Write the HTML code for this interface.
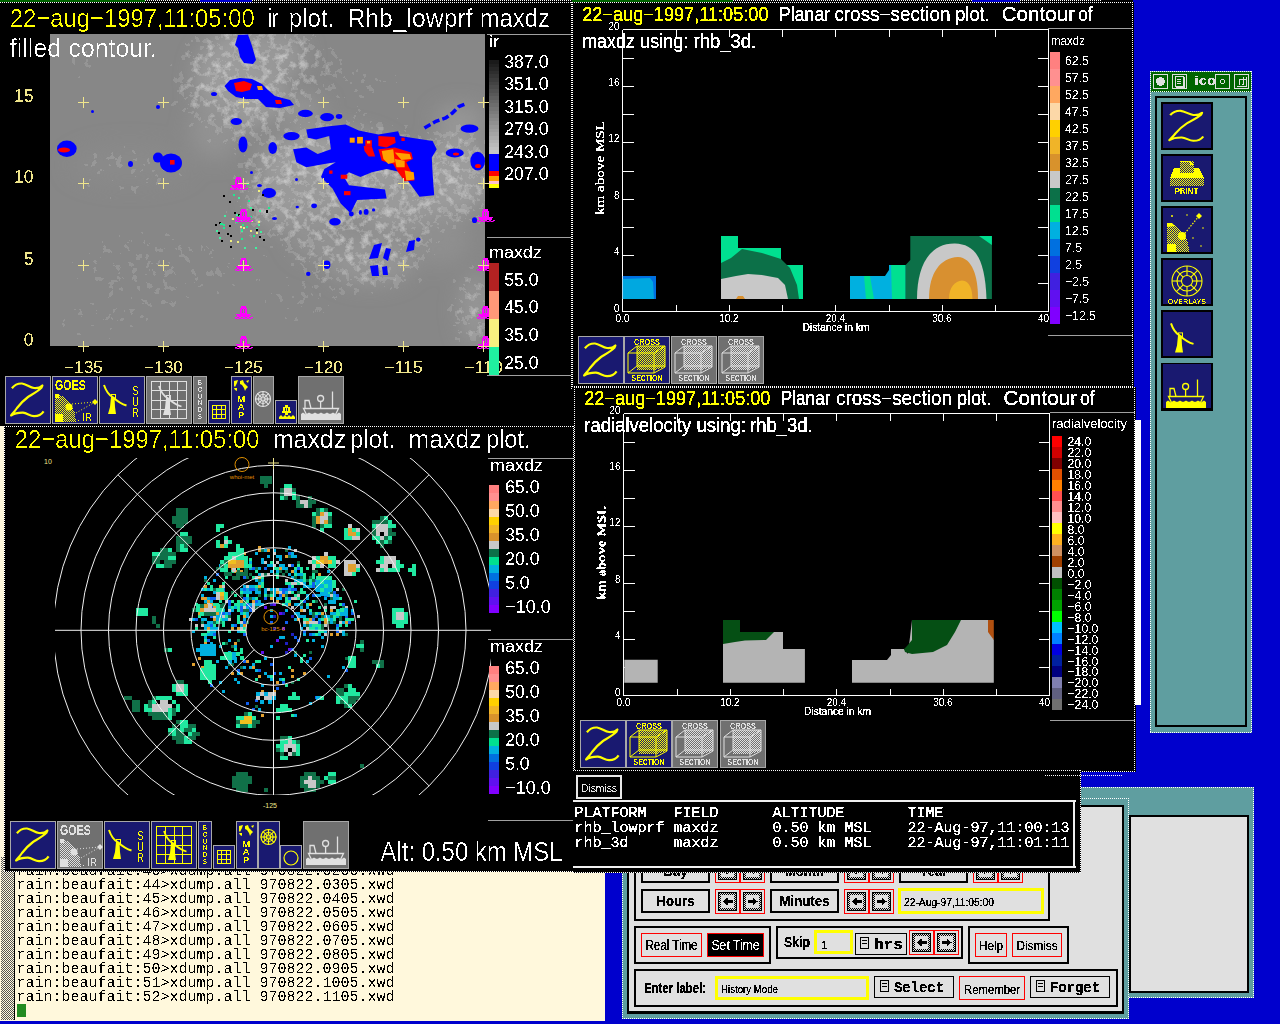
<!DOCTYPE html>
<html><head><meta charset="utf-8"><style>html,body{margin:0;padding:0;background:#0000cd;overflow:hidden}svg{display:block}</style></head>
<body><svg width="1280" height="1024" viewBox="0 0 1280 1024" shape-rendering="crispEdges">
<defs>
<pattern id="stip" width="2" height="2" patternUnits="userSpaceOnUse"><rect width="2" height="2" fill="#fff8dc"/><rect width="1" height="1" fill="#555"/><rect x="1" y="1" width="1" height="1" fill="#555"/></pattern>
<pattern id="pst_ffff00" width="2" height="2" patternUnits="userSpaceOnUse"><rect width="1" height="1" fill="#ffff00"/><rect x="1" y="1" width="1" height="1" fill="#ffff00"/></pattern>
<pattern id="pst_e0e0e0" width="2" height="2" patternUnits="userSpaceOnUse"><rect width="1" height="1" fill="#e0e0e0"/><rect x="1" y="1" width="1" height="1" fill="#e0e0e0"/></pattern>
<pattern id="pst_000" width="2" height="2" patternUnits="userSpaceOnUse"><rect width="2" height="2" fill="#e0e0e0"/><rect width="1" height="1" fill="#000"/><rect x="1" y="1" width="1" height="1" fill="#000"/></pattern>
<filter id="crispS"><feComponentTransfer><feFuncA type="discrete" tableValues="0 0 0 1 1 1 1 1 1 1"/></feComponentTransfer></filter>
<filter id="crispT"><feComponentTransfer><feFuncA type="discrete" tableValues="0 0 0 0 0 0 0 1 1 1"/></feComponentTransfer></filter>
<filter id="crisp"><feComponentTransfer><feFuncA type="discrete" tableValues="0 0 0 0 0 1 1 1 1 1"/></feComponentTransfer></filter>
<filter id="cloudtex" x="50" y="34" width="435" height="312" filterUnits="userSpaceOnUse">
<feGaussianBlur in="SourceGraphic" stdDeviation="14" result="mask"/>
<feTurbulence type="fractalNoise" baseFrequency="0.13" numOctaves="3" seed="7" result="n"/>
<feColorMatrix in="n" type="matrix" values="0 0 0 0 1  0 0 0 0 1  0 0 0 0 1  2.4 0 0 0 -1.0" result="w"/>
<feComposite in="w" in2="mask" operator="arithmetic" k1="1" k2="0" k3="0" k4="0" result="t"/>
<feComponentTransfer in="t"><feFuncA type="discrete" tableValues="0 0.12 0.22 0.32 0.4"/></feComponentTransfer>
</filter>
<filter id="blur6" x="-50%" y="-50%" width="200%" height="200%"><feGaussianBlur stdDeviation="10"/></filter>
</defs>
<rect x="0" y="0" width="1280" height="1024" fill="#0000cd" />
<rect x="0" y="400" width="605" height="621" fill="#fff8dc" />
<rect x="1" y="857" width="13" height="163" fill="url(#stip)" />
<rect x="14" y="871" width="1" height="149" fill="#000" />
<text x="16.5" y="875" font-family="Liberation Mono" font-size="15" fill="#000" font-weight="normal" textLength="378.0" lengthAdjust="spacingAndGlyphs" style="white-space:pre" filter="url(#crisp)">rain:beaufait:43&gt;xdump.all 970822.0205.xwd</text>
<text x="16.5" y="889" font-family="Liberation Mono" font-size="15" fill="#000" font-weight="normal" textLength="378.0" lengthAdjust="spacingAndGlyphs" style="white-space:pre" filter="url(#crisp)">rain:beaufait:44&gt;xdump.all 970822.0305.xwd</text>
<text x="16.5" y="903" font-family="Liberation Mono" font-size="15" fill="#000" font-weight="normal" textLength="378.0" lengthAdjust="spacingAndGlyphs" style="white-space:pre" filter="url(#crisp)">rain:beaufait:45&gt;xdump.all 970822.0405.xwd</text>
<text x="16.5" y="917" font-family="Liberation Mono" font-size="15" fill="#000" font-weight="normal" textLength="378.0" lengthAdjust="spacingAndGlyphs" style="white-space:pre" filter="url(#crisp)">rain:beaufait:46&gt;xdump.all 970822.0505.xwd</text>
<text x="16.5" y="931" font-family="Liberation Mono" font-size="15" fill="#000" font-weight="normal" textLength="378.0" lengthAdjust="spacingAndGlyphs" style="white-space:pre" filter="url(#crisp)">rain:beaufait:47&gt;xdump.all 970822.0605.xwd</text>
<text x="16.5" y="945" font-family="Liberation Mono" font-size="15" fill="#000" font-weight="normal" textLength="378.0" lengthAdjust="spacingAndGlyphs" style="white-space:pre" filter="url(#crisp)">rain:beaufait:48&gt;xdump.all 970822.0705.xwd</text>
<text x="16.5" y="959" font-family="Liberation Mono" font-size="15" fill="#000" font-weight="normal" textLength="378.0" lengthAdjust="spacingAndGlyphs" style="white-space:pre" filter="url(#crisp)">rain:beaufait:49&gt;xdump.all 970822.0805.xwd</text>
<text x="16.5" y="973" font-family="Liberation Mono" font-size="15" fill="#000" font-weight="normal" textLength="378.0" lengthAdjust="spacingAndGlyphs" style="white-space:pre" filter="url(#crisp)">rain:beaufait:50&gt;xdump.all 970822.0905.xwd</text>
<text x="16.5" y="987" font-family="Liberation Mono" font-size="15" fill="#000" font-weight="normal" textLength="378.0" lengthAdjust="spacingAndGlyphs" style="white-space:pre" filter="url(#crisp)">rain:beaufait:51&gt;xdump.all 970822.1005.xwd</text>
<text x="16.5" y="1001" font-family="Liberation Mono" font-size="15" fill="#000" font-weight="normal" textLength="378.0" lengthAdjust="spacingAndGlyphs" style="white-space:pre" filter="url(#crisp)">rain:beaufait:52&gt;xdump.all 970822.1105.xwd</text>
<rect x="17" y="1004" width="9" height="13" fill="#228b22" />
<rect x="0" y="0" width="574" height="426" fill="#000" />
<rect x="0" y="0" width="572" height="426" fill="#000" />
<rect x="0" y="0" width="1133" height="2" fill="#000" />
<rect x="0" y="0" width="145" height="1.5" fill="#006400" />
<rect x="200" y="0" width="52" height="1.5" fill="#0000cd" />
<rect x="572" y="0" width="161" height="1.5" fill="#006400" />
<rect x="972" y="0" width="48" height="1.5" fill="#0000cd" />
<line x1="145" y1="0.5" x2="200" y2="0.5" stroke="#fff" stroke-width="1" stroke-dasharray="1 1"/>
<line x1="252" y1="0.5" x2="572" y2="0.5" stroke="#fff" stroke-width="1" stroke-dasharray="1 1"/>
<line x1="733" y1="0.5" x2="972" y2="0.5" stroke="#fff" stroke-width="1" stroke-dasharray="1 1"/>
<line x1="1020" y1="0.5" x2="1102" y2="0.5" stroke="#fff" stroke-width="1" stroke-dasharray="1 1"/>
<line x1="0" y1="2.5" x2="1133" y2="2.5" stroke="#fff" stroke-width="1" stroke-dasharray="1 1"/>
<line x1="571.5" y1="2" x2="571.5" y2="390" stroke="#fff" stroke-width="1" stroke-dasharray="1 1"/>
<clipPath id="mapclip"><rect x="50" y="34" width="435" height="312"/></clipPath>
<g clip-path="url(#mapclip)">
<rect x="50" y="34" width="435" height="312" fill="#878787"/>
<g filter="url(#blur6)" shape-rendering="auto">
<ellipse cx="240" cy="80" rx="45" ry="50" fill="#9c9c9c"/>
<ellipse cx="275" cy="55" rx="30" ry="25" fill="#989898"/>
<ellipse cx="215" cy="130" rx="25" ry="30" fill="#929292"/>
<ellipse cx="300" cy="110" rx="25" ry="15" fill="#949494"/>
<ellipse cx="330" cy="165" rx="70" ry="35" fill="#9e9e9e"/>
<ellipse cx="300" cy="200" rx="50" ry="30" fill="#9a9a9a"/>
<ellipse cx="400" cy="200" rx="50" ry="30" fill="#9a9a9a"/>
<ellipse cx="455" cy="175" rx="35" ry="40" fill="#9c9c9c"/>
<ellipse cx="460" cy="120" rx="25" ry="15" fill="#969696"/>
<ellipse cx="370" cy="260" rx="45" ry="25" fill="#959595"/>
<ellipse cx="320" cy="235" rx="30" ry="25" fill="#929292"/>
<ellipse cx="440" cy="240" rx="30" ry="25" fill="#8f8f8f"/>
<ellipse cx="475" cy="310" rx="15" ry="35" fill="#969696"/>
<ellipse cx="130" cy="165" rx="60" ry="20" fill="#8a8a8a"/>
</g>
<g filter="url(#cloudtex)" shape-rendering="auto">
<rect x="50" y="34" width="435" height="312" fill="#fff" fill-opacity="0.12"/>
<ellipse cx="240" cy="80" rx="60" ry="55" fill="#fff" fill-opacity="1"/>
<ellipse cx="290" cy="60" rx="40" ry="30" fill="#fff" fill-opacity="0.9"/>
<ellipse cx="350" cy="85" rx="50" ry="12" fill="#fff" fill-opacity="0.45"/>
<ellipse cx="420" cy="70" rx="35" ry="8" fill="#fff" fill-opacity="0.25"/>
<ellipse cx="340" cy="170" rx="100" ry="45" fill="#fff" fill-opacity="1"/>
<ellipse cx="300" cy="210" rx="60" ry="30" fill="#fff" fill-opacity="0.9"/>
<ellipse cx="400" cy="205" rx="60" ry="30" fill="#fff" fill-opacity="0.9"/>
<ellipse cx="460" cy="175" rx="35" ry="45" fill="#fff" fill-opacity="1"/>
<ellipse cx="370" cy="255" rx="55" ry="30" fill="#fff" fill-opacity="0.9"/>
<ellipse cx="320" cy="240" rx="35" ry="30" fill="#fff" fill-opacity="0.8"/>
<ellipse cx="475" cy="310" rx="18" ry="40" fill="#fff" fill-opacity="0.9"/>
<ellipse cx="130" cy="170" rx="60" ry="22" fill="#fff" fill-opacity="0.35"/>
<ellipse cx="300" cy="300" rx="50" ry="20" fill="#fff" fill-opacity="0.3"/>
<ellipse cx="160" cy="265" rx="90" ry="35" fill="#fff" fill-opacity="0.3"/>
<ellipse cx="110" cy="320" rx="60" ry="22" fill="#fff" fill-opacity="0.25"/>
<ellipse cx="80" cy="60" rx="30" ry="25" fill="#fff" fill-opacity="0.25"/>
</g>
<g shape-rendering="auto">
<polygon points="238.0,35.0 248.0,34.5 252.0,46.0 256.0,60.0 253.0,64.0 244.0,63.0 240.0,57.0 238.0,48.0 235.0,45.0" fill="#0000ff" />
<polygon points="224.5,86.0 230.0,80.0 240.0,78.0 252.0,79.0 262.0,84.0 268.0,90.0 275.0,96.0 290.0,100.0 294.0,105.0 280.0,108.0 266.0,107.0 258.0,99.0 246.0,99.0 236.0,97.0 228.0,91.0" fill="#0000ff" />
<polygon points="234.0,83.0 244.0,81.0 252.0,84.0 250.0,90.0 242.0,92.0 236.0,91.0" fill="#ff0000" />
<polygon points="257.0,86.0 262.0,86.0 263.0,90.0 258.0,90.0" fill="#ffa000" />
<polygon points="275.0,100.0 281.0,100.0 282.0,104.0 276.0,104.0" fill="#ff0000" />
<polygon points="306.3,129.5 329.2,126.3 345.6,124.6 358.8,130.4 378.4,134.5 398.1,131.2 399.8,136.1 432.6,141.0 436.7,149.2 431.8,157.4 432.6,173.8 434.2,195.2 419.5,196.8 411.3,185.3 401.4,172.2 386.6,168.9 371.9,172.2 360.4,177.1 348.9,172.2 344.0,177.1 348.9,185.3 385.0,189.4 386.6,198.4 357.1,200.1 350.5,213.2 340.7,203.4 332.5,188.6 321.0,177.1 324.3,168.9 335.8,162.3 324.3,164.0 306.3,167.3 296.4,162.3 293.1,149.2 306.3,147.6 317.7,154.1 330.9,149.2 329.2,136.1 316.1,139.4 307.9,137.7" fill="#0000ff" />
<polygon points="378.4,136.1 394.8,136.9 395.7,142.7 386.6,147.6 378.4,145.9" fill="#ff0000" />
<polygon points="363.7,145.9 371.9,146.8 375.2,156.6 368.6,156.6 364.5,150.9" fill="#ff0000" />
<polygon points="378.4,149.2 394.8,147.6 411.3,152.5 412.9,159.1 406.3,162.3 411.3,172.2 414.5,180.4 404.7,181.2 398.1,172.2 393.2,164.0 381.7,160.7" fill="#ff0000" />
<polygon points="329.2,170.5 332.5,170.5 332.5,173.8 329.2,173.8" fill="#ff0000" />
<polygon points="340.7,174.7 347.3,174.7 347.3,178.8 340.7,178.8" fill="#ff0000" />
<polygon points="344.0,191.1 350.5,191.1 350.5,195.2 344.0,195.2" fill="#ff0000" />
<polygon points="365.3,140.2 371.9,140.2 371.9,146.8 365.3,146.8" fill="#ff0000" />
<polygon points="401.4,137.7 404.7,137.7 404.7,141.0 401.4,141.0" fill="#ff0000" />
<polygon points="349.7,137.7 354.7,137.7 354.7,142.7 349.7,142.7" fill="#ffa000" />
<polygon points="357.1,136.9 362.9,136.9 362.9,143.5 357.1,143.5" fill="#ffa000" />
<polygon points="381.7,150.9 393.2,149.2 394.8,162.3 388.3,164.0 383.4,159.1" fill="#ffa000" />
<polygon points="394.8,152.5 409.6,154.1 411.3,159.1 401.4,159.9" fill="#ffa000" />
<polygon points="394.8,159.1 404.7,160.7 404.7,167.3 396.5,167.3" fill="#ffa000" />
<polygon points="404.7,170.5 413.7,172.2 414.5,179.6 406.3,180.4" fill="#ffa000" />
<polygon points="367.0,141.0 370.2,141.0 370.2,143.5 367.0,143.5" fill="#ffa000" />
<ellipse cx="305.4" cy="113.5" rx="7.4" ry="3.7" fill="#0000ff"/>
<ellipse cx="327.15" cy="117.19999999999999" rx="6.95" ry="4.1" fill="#0000ff"/>
<ellipse cx="339.05" cy="116.45" rx="3.25" ry="2.45" fill="#0000ff"/>
<ellipse cx="291.5" cy="136.1" rx="8.2" ry="4.1" fill="#0000ff"/>
<ellipse cx="236.29999999999998" cy="121.5" rx="5.7" ry="3.5" fill="#0000ff"/>
<ellipse cx="243.0" cy="144.5" rx="4.5" ry="8.0" fill="#0000ff"/>
<ellipse cx="272.7" cy="148.0" rx="4.3" ry="6.0" fill="#0000ff"/>
<ellipse cx="469.5" cy="128.7" rx="9.0" ry="4.1" fill="#0000ff"/>
<ellipse cx="454.75" cy="152.9" rx="9.05" ry="4.5" fill="#0000ff"/>
<ellipse cx="477.65000000000003" cy="161.1" rx="7.35" ry="9.4" fill="#0000ff"/>
<ellipse cx="66.85" cy="148.75" rx="9.85" ry="8.15" fill="#0000ff"/>
<ellipse cx="171.0" cy="163.0" rx="11.0" ry="9.5" fill="#0000ff"/>
<ellipse cx="158.0" cy="157.6" rx="5.0" ry="5.0" fill="#0000ff"/>
<ellipse cx="130.5" cy="164.0" rx="2.5" ry="3.0" fill="#0000ff"/>
<ellipse cx="92.5" cy="111.5" rx="1.5" ry="1.5" fill="#0000ff"/>
<ellipse cx="158.0" cy="107.0" rx="2.0" ry="2.0" fill="#0000ff"/>
<ellipse cx="214.0" cy="94.0" rx="3.0" ry="2.0" fill="#0000ff"/>
<ellipse cx="334.95" cy="221.75" rx="5.75" ry="3.75" fill="#0000ff"/>
<ellipse cx="351.34999999999997" cy="214.04999999999998" rx="2.45" ry="2.45" fill="#0000ff"/>
<ellipse cx="360.40000000000003" cy="212.4" rx="1.6" ry="2.4" fill="#0000ff"/>
<ellipse cx="366.15" cy="211.9" rx="2.45" ry="2.9" fill="#0000ff"/>
<ellipse cx="373.54999999999995" cy="209.95000000000002" rx="1.65" ry="1.65" fill="#0000ff"/>
<ellipse cx="314.09999999999997" cy="205.85" rx="2.9" ry="2.45" fill="#0000ff"/>
<ellipse cx="297.25" cy="207.05" rx="1.65" ry="1.25" fill="#0000ff"/>
<ellipse cx="474.5" cy="220.15" rx="2.5" ry="2.85" fill="#0000ff"/>
<ellipse cx="326.9" cy="264.8" rx="3.5" ry="4.2" fill="#0000ff"/>
<ellipse cx="308.25" cy="273.90000000000003" rx="2.25" ry="2.1" fill="#0000ff"/>
<ellipse cx="418.25" cy="239.55" rx="2.25" ry="2.15" fill="#0000ff"/>
<ellipse cx="269.0" cy="193.0" rx="7.0" ry="5.0" fill="#0000ff"/>
<ellipse cx="259.5" cy="185.5" rx="2.5" ry="1.5" fill="#0000ff"/>
<ellipse cx="251.5" cy="172.5" rx="1.5" ry="1.5" fill="#0000ff"/>
<ellipse cx="274.5" cy="218.5" rx="2.5" ry="1.5" fill="#0000ff"/>
<ellipse cx="296.5" cy="179.5" rx="1.5" ry="1.5" fill="#0000ff"/>
<polygon points="369.0,259.0 374.0,245.0 382.0,243.0 378.0,258.0" fill="#0000ff" />
<polygon points="383.0,258.0 386.0,248.0 391.0,249.0 388.0,261.0" fill="#0000ff" />
<polygon points="370.0,266.0 378.0,265.0 379.0,276.0 372.0,276.0" fill="#0000ff" />
<polygon points="382.0,267.0 387.0,266.0 388.0,275.0 383.0,275.0" fill="#0000ff" />
<polygon points="406.0,252.0 409.0,241.0 415.0,240.0 414.0,250.0" fill="#0000ff" />
<path d="M424.4,127.9 L435.9,121.3 L445.7,118 L452.3,113.1 L458.8,106.6 L467,103.3" stroke="#0000ff" stroke-width="3.5" stroke-dasharray="7 3" fill="none"/>
<ellipse cx="64" cy="150" rx="6" ry="2.5" fill="#ff0000"/><rect x="170" y="160" width="4.6" height="4.6" fill="#ff0000"/><ellipse cx="478" cy="166" rx="3" ry="2" fill="#ff0000"/><ellipse cx="456" cy="154" rx="3" ry="1.5" fill="#ff0000"/>
</g>
<rect x="241" y="238" width="2" height="2" fill="#20e890"/>
<rect x="252" y="209" width="2" height="2" fill="#000000"/>
<rect x="240" y="218" width="2" height="2" fill="#000000"/>
<rect x="240" y="226" width="2" height="2" fill="#f0f080"/>
<rect x="215" y="224" width="2" height="2" fill="#000000"/>
<rect x="219" y="237" width="2" height="2" fill="#40f0a0"/>
<rect x="223" y="195" width="2" height="2" fill="#000000"/>
<rect x="240" y="218" width="2" height="2" fill="#40f0a0"/>
<rect x="255" y="247" width="2" height="2" fill="#40f0a0"/>
<rect x="240" y="219" width="2" height="2" fill="#20e890"/>
<rect x="219" y="222" width="2" height="2" fill="#000000"/>
<rect x="234" y="186" width="2" height="2" fill="#000000"/>
<rect x="238" y="197" width="2" height="2" fill="#40f0a0"/>
<rect x="242" y="216" width="2" height="2" fill="#40f0a0"/>
<rect x="232" y="218" width="2" height="2" fill="#f0f080"/>
<rect x="223" y="227" width="2" height="2" fill="#20e890"/>
<rect x="218" y="232" width="2" height="2" fill="#000000"/>
<rect x="230" y="235" width="2" height="2" fill="#000000"/>
<rect x="241" y="230" width="2" height="2" fill="#40f0a0"/>
<rect x="258" y="190" width="2" height="2" fill="#f0f080"/>
<rect x="233" y="194" width="2" height="2" fill="#20e890"/>
<rect x="266" y="211" width="2" height="2" fill="#000000"/>
<rect x="256" y="232" width="2" height="2" fill="#f0f080"/>
<rect x="248" y="200" width="2" height="2" fill="#20e890"/>
<rect x="250" y="230" width="2" height="2" fill="#f0f080"/>
<rect x="243" y="218" width="2" height="2" fill="#40f0a0"/>
<rect x="236" y="221" width="2" height="2" fill="#20e890"/>
<rect x="229" y="225" width="2" height="2" fill="#40f0a0"/>
<rect x="258" y="224" width="2" height="2" fill="#40f0a0"/>
<rect x="227" y="233" width="2" height="2" fill="#000000"/>
<rect x="262" y="194" width="2" height="2" fill="#000000"/>
<rect x="240" y="219" width="2" height="2" fill="#40f0a0"/>
<rect x="256" y="228" width="2" height="2" fill="#40f0a0"/>
<rect x="268" y="207" width="2" height="2" fill="#20e890"/>
<rect x="236" y="214" width="2" height="2" fill="#40f0a0"/>
<rect x="250" y="216" width="2" height="2" fill="#20e890"/>
<rect x="266" y="210" width="2" height="2" fill="#000000"/>
<rect x="221" y="240" width="2" height="2" fill="#000000"/>
<rect x="229" y="201" width="2" height="2" fill="#000000"/>
<rect x="263" y="239" width="2" height="2" fill="#000000"/>
<rect x="237" y="241" width="2" height="2" fill="#f0f080"/>
<rect x="241" y="229" width="2" height="2" fill="#20e890"/>
<rect x="224" y="215" width="2" height="2" fill="#40f0a0"/>
<rect x="247" y="183" width="2" height="2" fill="#20e890"/>
<rect x="258" y="221" width="2" height="2" fill="#f0f080"/>
<rect x="253" y="235" width="2" height="2" fill="#20e890"/>
<rect x="220" y="223" width="2" height="2" fill="#20e890"/>
<rect x="234" y="212" width="2" height="2" fill="#000000"/>
<rect x="242" y="218" width="2" height="2" fill="#f0f080"/>
<rect x="251" y="220" width="2" height="2" fill="#f0f080"/>
<rect x="223" y="224" width="2" height="2" fill="#20e890"/>
<rect x="242" y="224" width="2" height="2" fill="#20e890"/>
<rect x="244" y="210" width="2" height="2" fill="#000000"/>
<rect x="259" y="236" width="2" height="2" fill="#000000"/>
<rect x="238" y="214" width="2" height="2" fill="#000000"/>
<rect x="244" y="247" width="2" height="2" fill="#40f0a0"/>
<rect x="230" y="240" width="2" height="2" fill="#f0f080"/>
<rect x="239" y="215" width="2" height="2" fill="#20e890"/>
<rect x="259" y="210" width="2" height="2" fill="#40f0a0"/>
<rect x="216" y="230" width="2" height="2" fill="#40f0a0"/>
<rect x="260" y="231" width="2" height="2" fill="#40f0a0"/>
<rect x="250" y="207" width="2" height="2" fill="#40f0a0"/>
<rect x="240" y="217" width="2" height="2" fill="#40f0a0"/>
<rect x="230" y="246" width="2" height="2" fill="#000000"/>
<rect x="243" y="227" width="2" height="2" fill="#f0f080"/>
<rect x="256" y="229" width="2" height="2" fill="#000000"/>
<rect x="246" y="226" width="2" height="2" fill="#20e890"/>
<rect x="221" y="223" width="2" height="2" fill="#20e890"/>
<rect x="229" y="225" width="2" height="2" fill="#000000"/>
<rect x="240" y="218" width="2" height="2" fill="#000000"/>
</g>
<g shape-rendering="crispEdges" fill="#ff00ff"><rect x="236" y="177" width="5" height="2"/><rect x="235" y="179" width="7" height="6"/><rect x="237" y="180" width="1" height="4" fill="#808080"/><rect x="239" y="180" width="1" height="4" fill="#808080"/><rect x="231" y="185" width="15" height="1"/><rect x="232" y="186" width="13" height="2"/><rect x="230" y="188" width="2" height="1"/><rect x="232" y="189" width="2" height="1"/><rect x="234" y="188" width="2" height="1"/><rect x="236" y="189" width="2" height="1"/><rect x="238" y="188" width="2" height="1"/><rect x="240" y="189" width="2" height="1"/><rect x="242" y="188" width="2" height="1"/><rect x="244" y="189" width="2" height="1"/><rect x="246" y="188" width="2" height="1"/><rect x="230" y="189" width="17" height="1" fill-opacity="0.6"/></g>
<g shape-rendering="crispEdges" fill="#ff00ff"><rect x="241" y="209" width="5" height="2"/><rect x="240" y="211" width="7" height="6"/><rect x="242" y="212" width="1" height="4" fill="#808080"/><rect x="244" y="212" width="1" height="4" fill="#808080"/><rect x="236" y="217" width="15" height="1"/><rect x="237" y="218" width="13" height="2"/><rect x="235" y="220" width="2" height="1"/><rect x="237" y="221" width="2" height="1"/><rect x="239" y="220" width="2" height="1"/><rect x="241" y="221" width="2" height="1"/><rect x="243" y="220" width="2" height="1"/><rect x="245" y="221" width="2" height="1"/><rect x="247" y="220" width="2" height="1"/><rect x="249" y="221" width="2" height="1"/><rect x="251" y="220" width="2" height="1"/><rect x="235" y="221" width="17" height="1" fill-opacity="0.6"/></g>
<g shape-rendering="crispEdges" fill="#ff00ff"><rect x="241" y="258" width="5" height="2"/><rect x="240" y="260" width="7" height="6"/><rect x="242" y="261" width="1" height="4" fill="#808080"/><rect x="244" y="261" width="1" height="4" fill="#808080"/><rect x="236" y="266" width="15" height="1"/><rect x="237" y="267" width="13" height="2"/><rect x="235" y="269" width="2" height="1"/><rect x="237" y="270" width="2" height="1"/><rect x="239" y="269" width="2" height="1"/><rect x="241" y="270" width="2" height="1"/><rect x="243" y="269" width="2" height="1"/><rect x="245" y="270" width="2" height="1"/><rect x="247" y="269" width="2" height="1"/><rect x="249" y="270" width="2" height="1"/><rect x="251" y="269" width="2" height="1"/><rect x="235" y="270" width="17" height="1" fill-opacity="0.6"/></g>
<g shape-rendering="crispEdges" fill="#ff00ff"><rect x="241" y="306" width="5" height="2"/><rect x="240" y="308" width="7" height="6"/><rect x="242" y="309" width="1" height="4" fill="#808080"/><rect x="244" y="309" width="1" height="4" fill="#808080"/><rect x="236" y="314" width="15" height="1"/><rect x="237" y="315" width="13" height="2"/><rect x="235" y="317" width="2" height="1"/><rect x="237" y="318" width="2" height="1"/><rect x="239" y="317" width="2" height="1"/><rect x="241" y="318" width="2" height="1"/><rect x="243" y="317" width="2" height="1"/><rect x="245" y="318" width="2" height="1"/><rect x="247" y="317" width="2" height="1"/><rect x="249" y="318" width="2" height="1"/><rect x="251" y="317" width="2" height="1"/><rect x="235" y="318" width="17" height="1" fill-opacity="0.6"/></g>
<g shape-rendering="crispEdges" fill="#ff00ff"><rect x="241" y="336" width="5" height="2"/><rect x="240" y="338" width="7" height="6"/><rect x="242" y="339" width="1" height="4" fill="#808080"/><rect x="244" y="339" width="1" height="4" fill="#808080"/><rect x="236" y="344" width="15" height="1"/><rect x="237" y="345" width="13" height="2"/><rect x="235" y="347" width="2" height="1"/><rect x="237" y="348" width="2" height="1"/><rect x="239" y="347" width="2" height="1"/><rect x="241" y="348" width="2" height="1"/><rect x="243" y="347" width="2" height="1"/><rect x="245" y="348" width="2" height="1"/><rect x="247" y="347" width="2" height="1"/><rect x="249" y="348" width="2" height="1"/><rect x="251" y="347" width="2" height="1"/><rect x="235" y="348" width="17" height="1" fill-opacity="0.6"/></g>
<g shape-rendering="crispEdges" fill="#ff00ff"><rect x="483" y="209" width="5" height="2"/><rect x="482" y="211" width="7" height="6"/><rect x="484" y="212" width="1" height="4" fill="#808080"/><rect x="486" y="212" width="1" height="4" fill="#808080"/><rect x="478" y="217" width="15" height="1"/><rect x="479" y="218" width="13" height="2"/><rect x="477" y="220" width="2" height="1"/><rect x="479" y="221" width="2" height="1"/><rect x="481" y="220" width="2" height="1"/><rect x="483" y="221" width="2" height="1"/><rect x="485" y="220" width="2" height="1"/><rect x="487" y="221" width="2" height="1"/><rect x="489" y="220" width="2" height="1"/><rect x="491" y="221" width="2" height="1"/><rect x="493" y="220" width="2" height="1"/><rect x="477" y="221" width="17" height="1" fill-opacity="0.6"/></g>
<g shape-rendering="crispEdges" fill="#ff00ff"><rect x="483" y="258" width="5" height="2"/><rect x="482" y="260" width="7" height="6"/><rect x="484" y="261" width="1" height="4" fill="#808080"/><rect x="486" y="261" width="1" height="4" fill="#808080"/><rect x="478" y="266" width="15" height="1"/><rect x="479" y="267" width="13" height="2"/><rect x="477" y="269" width="2" height="1"/><rect x="479" y="270" width="2" height="1"/><rect x="481" y="269" width="2" height="1"/><rect x="483" y="270" width="2" height="1"/><rect x="485" y="269" width="2" height="1"/><rect x="487" y="270" width="2" height="1"/><rect x="489" y="269" width="2" height="1"/><rect x="491" y="270" width="2" height="1"/><rect x="493" y="269" width="2" height="1"/><rect x="477" y="270" width="17" height="1" fill-opacity="0.6"/></g>
<g shape-rendering="crispEdges" fill="#ff00ff"><rect x="483" y="306" width="5" height="2"/><rect x="482" y="308" width="7" height="6"/><rect x="484" y="309" width="1" height="4" fill="#808080"/><rect x="486" y="309" width="1" height="4" fill="#808080"/><rect x="478" y="314" width="15" height="1"/><rect x="479" y="315" width="13" height="2"/><rect x="477" y="317" width="2" height="1"/><rect x="479" y="318" width="2" height="1"/><rect x="481" y="317" width="2" height="1"/><rect x="483" y="318" width="2" height="1"/><rect x="485" y="317" width="2" height="1"/><rect x="487" y="318" width="2" height="1"/><rect x="489" y="317" width="2" height="1"/><rect x="491" y="318" width="2" height="1"/><rect x="493" y="317" width="2" height="1"/><rect x="477" y="318" width="17" height="1" fill-opacity="0.6"/></g>
<g shape-rendering="crispEdges" fill="#ff00ff"><rect x="483" y="336" width="5" height="2"/><rect x="482" y="338" width="7" height="6"/><rect x="484" y="339" width="1" height="4" fill="#808080"/><rect x="486" y="339" width="1" height="4" fill="#808080"/><rect x="478" y="344" width="15" height="1"/><rect x="479" y="345" width="13" height="2"/><rect x="477" y="347" width="2" height="1"/><rect x="479" y="348" width="2" height="1"/><rect x="481" y="347" width="2" height="1"/><rect x="483" y="348" width="2" height="1"/><rect x="485" y="347" width="2" height="1"/><rect x="487" y="348" width="2" height="1"/><rect x="489" y="347" width="2" height="1"/><rect x="491" y="348" width="2" height="1"/><rect x="493" y="347" width="2" height="1"/><rect x="477" y="348" width="17" height="1" fill-opacity="0.6"/></g>
<text x="9.7" y="27" font-family="Liberation Sans" font-size="26" fill="#ffff00" font-weight="normal" textLength="245.0" lengthAdjust="spacingAndGlyphs" style="white-space:pre" filter="url(#crispT)">22−aug−1997,11:05:00</text>
<text x="267.7" y="27" font-family="Liberation Sans" font-size="26" fill="#fff" font-weight="normal" textLength="10.4" lengthAdjust="spacingAndGlyphs" style="white-space:pre" filter="url(#crispT)">ir</text>
<text x="288.8" y="27" font-family="Liberation Sans" font-size="26" fill="#fff" font-weight="normal" textLength="45.5" lengthAdjust="spacingAndGlyphs" style="white-space:pre" filter="url(#crispT)">plot.</text>
<text x="347.4" y="27" font-family="Liberation Sans" font-size="26" fill="#fff" font-weight="normal" textLength="125.2" lengthAdjust="spacingAndGlyphs" style="white-space:pre" filter="url(#crispT)">Rhb_lowprf</text>
<text x="479.8" y="27" font-family="Liberation Sans" font-size="26" fill="#fff" font-weight="normal" textLength="70.1" lengthAdjust="spacingAndGlyphs" style="white-space:pre" filter="url(#crispT)">maxdz</text>
<text x="9.7" y="57" font-family="Liberation Sans" font-size="26" fill="#fff" font-weight="normal" textLength="51.5" lengthAdjust="spacingAndGlyphs" style="white-space:pre" filter="url(#crispT)">filled</text>
<text x="68.6" y="57" font-family="Liberation Sans" font-size="26" fill="#fff" font-weight="normal" textLength="88.2" lengthAdjust="spacingAndGlyphs" style="white-space:pre" filter="url(#crispT)">contour.</text>
<text x="33.5" y="102.0" font-family="Liberation Sans" font-size="17.5" fill="#f0e68c" text-anchor="end" font-weight="normal" style="white-space:pre" filter="url(#crisp)" >15</text>
<text x="33.5" y="183.25" font-family="Liberation Sans" font-size="17.5" fill="#f0e68c" text-anchor="end" font-weight="normal" style="white-space:pre" filter="url(#crisp)" >10</text>
<text x="33.5" y="264.5" font-family="Liberation Sans" font-size="17.5" fill="#f0e68c" text-anchor="end" font-weight="normal" style="white-space:pre" filter="url(#crisp)" >5</text>
<text x="33.5" y="345.75" font-family="Liberation Sans" font-size="17.5" fill="#f0e68c" text-anchor="end" font-weight="normal" style="white-space:pre" filter="url(#crisp)" >0</text>
<text x="83.5" y="372.5" font-family="Liberation Sans" font-size="17" fill="#f0e68c" text-anchor="middle" font-weight="normal" textLength="39" lengthAdjust="spacingAndGlyphs" style="white-space:pre" filter="url(#crisp)" >−135</text>
<text x="163.5" y="372.5" font-family="Liberation Sans" font-size="17" fill="#f0e68c" text-anchor="middle" font-weight="normal" textLength="39" lengthAdjust="spacingAndGlyphs" style="white-space:pre" filter="url(#crisp)" >−130</text>
<text x="243.5" y="372.5" font-family="Liberation Sans" font-size="17" fill="#f0e68c" text-anchor="middle" font-weight="normal" textLength="39" lengthAdjust="spacingAndGlyphs" style="white-space:pre" filter="url(#crisp)" >−125</text>
<text x="323.5" y="372.5" font-family="Liberation Sans" font-size="17" fill="#f0e68c" text-anchor="middle" font-weight="normal" textLength="39" lengthAdjust="spacingAndGlyphs" style="white-space:pre" filter="url(#crisp)" >−120</text>
<text x="403.5" y="372.5" font-family="Liberation Sans" font-size="17" fill="#f0e68c" text-anchor="middle" font-weight="normal" textLength="39" lengthAdjust="spacingAndGlyphs" style="white-space:pre" filter="url(#crisp)" >−115</text>
<text x="483.5" y="372.5" font-family="Liberation Sans" font-size="17" fill="#f0e68c" text-anchor="middle" font-weight="normal" textLength="39" lengthAdjust="spacingAndGlyphs" style="white-space:pre" filter="url(#crisp)" >−110</text>
<line x1="78.0" y1="102.5" x2="89.0" y2="102.5" stroke="#f0e68c" stroke-width="1" />
<line x1="83.5" y1="97.0" x2="83.5" y2="108.0" stroke="#f0e68c" stroke-width="1" />
<line x1="78.0" y1="183.75" x2="89.0" y2="183.75" stroke="#f0e68c" stroke-width="1" />
<line x1="83.5" y1="178.25" x2="83.5" y2="189.25" stroke="#f0e68c" stroke-width="1" />
<line x1="78.0" y1="265.0" x2="89.0" y2="265.0" stroke="#f0e68c" stroke-width="1" />
<line x1="83.5" y1="259.5" x2="83.5" y2="270.5" stroke="#f0e68c" stroke-width="1" />
<line x1="78.0" y1="346.25" x2="89.0" y2="346.25" stroke="#f0e68c" stroke-width="1" />
<line x1="83.5" y1="340.75" x2="83.5" y2="351.75" stroke="#f0e68c" stroke-width="1" />
<line x1="158.0" y1="102.5" x2="169.0" y2="102.5" stroke="#f0e68c" stroke-width="1" />
<line x1="163.5" y1="97.0" x2="163.5" y2="108.0" stroke="#f0e68c" stroke-width="1" />
<line x1="158.0" y1="183.75" x2="169.0" y2="183.75" stroke="#f0e68c" stroke-width="1" />
<line x1="163.5" y1="178.25" x2="163.5" y2="189.25" stroke="#f0e68c" stroke-width="1" />
<line x1="158.0" y1="265.0" x2="169.0" y2="265.0" stroke="#f0e68c" stroke-width="1" />
<line x1="163.5" y1="259.5" x2="163.5" y2="270.5" stroke="#f0e68c" stroke-width="1" />
<line x1="158.0" y1="346.25" x2="169.0" y2="346.25" stroke="#f0e68c" stroke-width="1" />
<line x1="163.5" y1="340.75" x2="163.5" y2="351.75" stroke="#f0e68c" stroke-width="1" />
<line x1="238.0" y1="102.5" x2="249.0" y2="102.5" stroke="#f0e68c" stroke-width="1" />
<line x1="243.5" y1="97.0" x2="243.5" y2="108.0" stroke="#f0e68c" stroke-width="1" />
<line x1="238.0" y1="183.75" x2="249.0" y2="183.75" stroke="#f0e68c" stroke-width="1" />
<line x1="243.5" y1="178.25" x2="243.5" y2="189.25" stroke="#f0e68c" stroke-width="1" />
<line x1="238.0" y1="265.0" x2="249.0" y2="265.0" stroke="#f0e68c" stroke-width="1" />
<line x1="243.5" y1="259.5" x2="243.5" y2="270.5" stroke="#f0e68c" stroke-width="1" />
<line x1="238.0" y1="346.25" x2="249.0" y2="346.25" stroke="#f0e68c" stroke-width="1" />
<line x1="243.5" y1="340.75" x2="243.5" y2="351.75" stroke="#f0e68c" stroke-width="1" />
<line x1="318.0" y1="102.5" x2="329.0" y2="102.5" stroke="#f0e68c" stroke-width="1" />
<line x1="323.5" y1="97.0" x2="323.5" y2="108.0" stroke="#f0e68c" stroke-width="1" />
<line x1="318.0" y1="183.75" x2="329.0" y2="183.75" stroke="#f0e68c" stroke-width="1" />
<line x1="323.5" y1="178.25" x2="323.5" y2="189.25" stroke="#f0e68c" stroke-width="1" />
<line x1="318.0" y1="265.0" x2="329.0" y2="265.0" stroke="#f0e68c" stroke-width="1" />
<line x1="323.5" y1="259.5" x2="323.5" y2="270.5" stroke="#f0e68c" stroke-width="1" />
<line x1="318.0" y1="346.25" x2="329.0" y2="346.25" stroke="#f0e68c" stroke-width="1" />
<line x1="323.5" y1="340.75" x2="323.5" y2="351.75" stroke="#f0e68c" stroke-width="1" />
<line x1="398.0" y1="102.5" x2="409.0" y2="102.5" stroke="#f0e68c" stroke-width="1" />
<line x1="403.5" y1="97.0" x2="403.5" y2="108.0" stroke="#f0e68c" stroke-width="1" />
<line x1="398.0" y1="183.75" x2="409.0" y2="183.75" stroke="#f0e68c" stroke-width="1" />
<line x1="403.5" y1="178.25" x2="403.5" y2="189.25" stroke="#f0e68c" stroke-width="1" />
<line x1="398.0" y1="265.0" x2="409.0" y2="265.0" stroke="#f0e68c" stroke-width="1" />
<line x1="403.5" y1="259.5" x2="403.5" y2="270.5" stroke="#f0e68c" stroke-width="1" />
<line x1="398.0" y1="346.25" x2="409.0" y2="346.25" stroke="#f0e68c" stroke-width="1" />
<line x1="403.5" y1="340.75" x2="403.5" y2="351.75" stroke="#f0e68c" stroke-width="1" />
<line x1="478.0" y1="102.5" x2="489.0" y2="102.5" stroke="#f0e68c" stroke-width="1" />
<line x1="483.5" y1="97.0" x2="483.5" y2="108.0" stroke="#f0e68c" stroke-width="1" />
<line x1="478.0" y1="183.75" x2="489.0" y2="183.75" stroke="#f0e68c" stroke-width="1" />
<line x1="483.5" y1="178.25" x2="483.5" y2="189.25" stroke="#f0e68c" stroke-width="1" />
<line x1="478.0" y1="265.0" x2="489.0" y2="265.0" stroke="#f0e68c" stroke-width="1" />
<line x1="483.5" y1="259.5" x2="483.5" y2="270.5" stroke="#f0e68c" stroke-width="1" />
<line x1="478.0" y1="346.25" x2="489.0" y2="346.25" stroke="#f0e68c" stroke-width="1" />
<line x1="483.5" y1="340.75" x2="483.5" y2="351.75" stroke="#f0e68c" stroke-width="1" />
<line x1="487" y1="34.5" x2="571" y2="34.5" stroke="#a0a0a0" stroke-width="1" />
<text x="489.1" y="47" font-family="Liberation Sans" font-size="17" fill="#fff" font-weight="normal" textLength="10.4" lengthAdjust="spacingAndGlyphs" style="white-space:pre" filter="url(#crisp)">ir</text>
<rect x="489" y="60.0" width="10" height="4.115384615384615" fill="rgb(26,26,26)" />
<rect x="489" y="63.62" width="10" height="4.115384615384615" fill="rgb(32,32,32)" />
<rect x="489" y="67.23" width="10" height="4.115384615384615" fill="rgb(39,39,39)" />
<rect x="489" y="70.85" width="10" height="4.115384615384615" fill="rgb(46,46,46)" />
<rect x="489" y="74.46" width="10" height="4.115384615384615" fill="rgb(53,53,53)" />
<rect x="489" y="78.08" width="10" height="4.115384615384615" fill="rgb(60,60,60)" />
<rect x="489" y="81.69" width="10" height="4.115384615384615" fill="rgb(67,67,67)" />
<rect x="489" y="85.31" width="10" height="4.115384615384615" fill="rgb(74,74,74)" />
<rect x="489" y="88.92" width="10" height="4.115384615384615" fill="rgb(81,81,81)" />
<rect x="489" y="92.54" width="10" height="4.115384615384615" fill="rgb(88,88,88)" />
<rect x="489" y="96.15" width="10" height="4.115384615384615" fill="rgb(95,95,95)" />
<rect x="489" y="99.77" width="10" height="4.115384615384615" fill="rgb(102,102,102)" />
<rect x="489" y="103.38" width="10" height="4.115384615384615" fill="rgb(109,109,109)" />
<rect x="489" y="107.0" width="10" height="4.115384615384615" fill="rgb(116,116,116)" />
<rect x="489" y="110.62" width="10" height="4.115384615384615" fill="rgb(123,123,123)" />
<rect x="489" y="114.23" width="10" height="4.115384615384615" fill="rgb(130,130,130)" />
<rect x="489" y="117.85" width="10" height="4.115384615384615" fill="rgb(137,137,137)" />
<rect x="489" y="121.46" width="10" height="4.115384615384615" fill="rgb(144,144,144)" />
<rect x="489" y="125.08" width="10" height="4.115384615384615" fill="rgb(151,151,151)" />
<rect x="489" y="128.69" width="10" height="4.115384615384615" fill="rgb(158,158,158)" />
<rect x="489" y="132.31" width="10" height="4.115384615384615" fill="rgb(165,165,165)" />
<rect x="489" y="135.92" width="10" height="4.115384615384615" fill="rgb(172,172,172)" />
<rect x="489" y="139.54" width="10" height="4.115384615384615" fill="rgb(179,179,179)" />
<rect x="489" y="143.15" width="10" height="4.115384615384615" fill="rgb(186,186,186)" />
<rect x="489" y="146.77" width="10" height="4.115384615384615" fill="rgb(193,193,193)" />
<rect x="489" y="150.38" width="10" height="4.115384615384615" fill="rgb(200,200,200)" />
<rect x="489" y="154" width="10" height="17" fill="#0000ff" />
<rect x="489" y="171" width="10" height="5" fill="#ff0000" />
<rect x="489" y="176" width="10" height="4.5" fill="#ffa000" />
<rect x="489" y="180.5" width="10" height="3.5" fill="#ffc0cb" />
<rect x="489" y="184" width="10" height="3.5" fill="#ffff00" />
<text x="504.2" y="68.0" font-family="Liberation Sans" font-size="18.5" fill="#fff" font-weight="normal" textLength="44.3" lengthAdjust="spacingAndGlyphs" style="white-space:pre" filter="url(#crisp)">387.0</text>
<text x="504.2" y="90.4" font-family="Liberation Sans" font-size="18.5" fill="#fff" font-weight="normal" textLength="44.3" lengthAdjust="spacingAndGlyphs" style="white-space:pre" filter="url(#crisp)">351.0</text>
<text x="504.2" y="112.8" font-family="Liberation Sans" font-size="18.5" fill="#fff" font-weight="normal" textLength="44.3" lengthAdjust="spacingAndGlyphs" style="white-space:pre" filter="url(#crisp)">315.0</text>
<text x="504.2" y="135.2" font-family="Liberation Sans" font-size="18.5" fill="#fff" font-weight="normal" textLength="44.3" lengthAdjust="spacingAndGlyphs" style="white-space:pre" filter="url(#crisp)">279.0</text>
<text x="504.2" y="157.6" font-family="Liberation Sans" font-size="18.5" fill="#fff" font-weight="normal" textLength="44.3" lengthAdjust="spacingAndGlyphs" style="white-space:pre" filter="url(#crisp)">243.0</text>
<text x="504.2" y="180.0" font-family="Liberation Sans" font-size="18.5" fill="#fff" font-weight="normal" textLength="44.3" lengthAdjust="spacingAndGlyphs" style="white-space:pre" filter="url(#crisp)">207.0</text>
<line x1="487" y1="237.5" x2="571" y2="237.5" stroke="#a0a0a0" stroke-width="1" />
<text x="489.0" y="257.5" font-family="Liberation Sans" font-size="17" fill="#fff" font-weight="normal" textLength="52.8" lengthAdjust="spacingAndGlyphs" style="white-space:pre" filter="url(#crisp)">maxdz</text>
<rect x="489" y="263" width="10" height="28" fill="#b22222" />
<rect x="489" y="291" width="10" height="28" fill="#ff9878" />
<rect x="489" y="319" width="10" height="28" fill="#f8f080" />
<rect x="489" y="347" width="10" height="28" fill="#20f0a0" />
<text x="504.3" y="285.5" font-family="Liberation Sans" font-size="18.5" fill="#fff" font-weight="normal" textLength="34.2" lengthAdjust="spacingAndGlyphs" style="white-space:pre" filter="url(#crisp)">55.0</text>
<text x="504.3" y="313.3" font-family="Liberation Sans" font-size="18.5" fill="#fff" font-weight="normal" textLength="34.2" lengthAdjust="spacingAndGlyphs" style="white-space:pre" filter="url(#crisp)">45.0</text>
<text x="504.3" y="341.1" font-family="Liberation Sans" font-size="18.5" fill="#fff" font-weight="normal" textLength="34.2" lengthAdjust="spacingAndGlyphs" style="white-space:pre" filter="url(#crisp)">35.0</text>
<text x="504.3" y="368.9" font-family="Liberation Sans" font-size="18.5" fill="#fff" font-weight="normal" textLength="34.2" lengthAdjust="spacingAndGlyphs" style="white-space:pre" filter="url(#crisp)">25.0</text>
<line x1="487" y1="375.5" x2="571" y2="375.5" stroke="#a0a0a0" stroke-width="1" />
<rect x="5" y="376" width="46" height="48" fill="#191970"/><rect x="5.5" y="376.5" width="45" height="47" fill="none" stroke="#a8a8a8" stroke-width="1"/><g transform="translate(5,376) scale(1.0,1.0)" fill="none" stroke="#ffff00" stroke-width="2.2" stroke-linejoin="round" shape-rendering="auto"><path d="M6.9,12.2 C9,9.5 13,7.3 17,7.5 C21,8 25,11.5 29,12 C33,12.3 36,11 37.4,9.5 L36.4,11.7 C32,16 26,19 23,21 C19,24 15,28 12,32 C10,35 8,37 6.1,39.5 C9,37.5 13,36.5 18,36.6 C22,37 25,40 29,40.2 C33,40.3 36.5,38.5 38.6,35.4"/></g>
<rect x="52" y="376" width="46" height="48" fill="#191970"/><rect x="52.5" y="376.5" width="45" height="47" fill="none" stroke="#a8a8a8" stroke-width="1"/><g transform="translate(52,376)" shape-rendering="auto"><text filter="url(#crisp)" x="3" y="14" font-family="Liberation Sans" font-weight="bold" font-size="14" fill="#ffff00" textLength="31" lengthAdjust="spacingAndGlyphs">GOES</text><path d="M3,18 L3,46 L24,46 C24,34 18,22 7,18 Z" fill="url(#pst_ffff00)" shape-rendering="crispEdges"/><circle cx="17" cy="31" r="3.5" fill="#ffff00"/><rect x="3" y="38" width="8" height="8" fill="#ffff00"/><rect x="3" y="18" width="4" height="4" fill="#ffff00"/><path d="M20,28 L43,26 M24,37 L43,26" stroke="#ffff00" stroke-width="1" stroke-dasharray="1 2" fill="none"/><path d="M43,23 L46,26 L43,29 L40,26 Z" fill="#ffff00"/><text filter="url(#crisp)" x="25" y="45" font-family="Liberation Sans" font-size="10" fill="#ffff00" textLength="15" lengthAdjust="spacingAndGlyphs">. IR</text></g>
<rect x="99" y="376" width="46" height="48" fill="#191970"/><rect x="99.5" y="376.5" width="45" height="47" fill="none" stroke="#a8a8a8" stroke-width="1"/><g transform="translate(99,376)" shape-rendering="auto"><path d="M5,9 C7,15 10,19 13.5,21 C18,25 22,28 27.5,29.5" fill="none" stroke="#ffff00" stroke-width="2.0"/><path d="M12,21 L15.5,21 L16,31 L17,38 L9,38 L11,31 Z" fill="#ffff00"/><rect x="12.5" y="18.5" width="4" height="5" fill="none" stroke="#ffff00" stroke-width="1"/><text filter="url(#crisp)" x="36.5" y="19.0" font-family="Liberation Sans" font-size="13" fill="#ffff00" text-anchor="middle" textLength="6.5" lengthAdjust="spacingAndGlyphs">S</text><text filter="url(#crisp)" x="36.5" y="29.8" font-family="Liberation Sans" font-size="13" fill="#ffff00" text-anchor="middle" textLength="6.5" lengthAdjust="spacingAndGlyphs">U</text><text filter="url(#crisp)" x="36.5" y="40.6" font-family="Liberation Sans" font-size="13" fill="#ffff00" text-anchor="middle" textLength="6.5" lengthAdjust="spacingAndGlyphs">R</text></g>
<rect x="146" y="376" width="46" height="48" fill="#707070"/><rect x="146.5" y="376.5" width="45" height="47" fill="none" stroke="#a8a8a8" stroke-width="1"/><g transform="translate(146,376)"><rect x="5.5" y="5.5" width="35" height="37" fill="none" stroke="#e0e0e0" stroke-width="1.2"/><line x1="14.25" y1="5.5" x2="14.25" y2="42.5" stroke="#e0e0e0" stroke-width="1"/><line x1="5.5" y1="14.75" x2="40.5" y2="14.75" stroke="#e0e0e0" stroke-width="1"/><line x1="23.0" y1="5.5" x2="23.0" y2="42.5" stroke="#e0e0e0" stroke-width="1"/><line x1="5.5" y1="24.0" x2="40.5" y2="24.0" stroke="#e0e0e0" stroke-width="1"/><line x1="31.75" y1="5.5" x2="31.75" y2="42.5" stroke="#e0e0e0" stroke-width="1"/><line x1="5.5" y1="33.25" x2="40.5" y2="33.25" stroke="#e0e0e0" stroke-width="1"/><g transform="translate(8,1)" shape-rendering="auto"><path d="M5,9 C7,15 10,19 13.5,21 C18,25 22,28 27.5,29.5" fill="none" stroke="#e0e0e0" stroke-width="1.8"/><path d="M12,21 L15.5,21 L16,31 L17,38 L9,38 L11,31 Z" fill="#e0e0e0"/><rect x="12.5" y="18.5" width="4" height="5" fill="none" stroke="#e0e0e0" stroke-width="1"/></g></g>
<rect x="193" y="376" width="14" height="48" fill="#707070"/><rect x="193.5" y="376.5" width="13" height="47" fill="none" stroke="#a8a8a8" stroke-width="1"/><g transform="translate(193,376)" shape-rendering="auto"><text filter="url(#crisp)" x="7.0" y="9.333333333333334" font-family="Liberation Sans" font-size="6.5" fill="#e0e0e0" text-anchor="middle">B</text><text filter="url(#crisp)" x="7.0" y="16.0" font-family="Liberation Sans" font-size="6.5" fill="#e0e0e0" text-anchor="middle">O</text><text filter="url(#crisp)" x="7.0" y="22.666666666666668" font-family="Liberation Sans" font-size="6.5" fill="#e0e0e0" text-anchor="middle">U</text><text filter="url(#crisp)" x="7.0" y="29.333333333333332" font-family="Liberation Sans" font-size="6.5" fill="#e0e0e0" text-anchor="middle">N</text><text filter="url(#crisp)" x="7.0" y="36.0" font-family="Liberation Sans" font-size="6.5" fill="#e0e0e0" text-anchor="middle">D</text><text filter="url(#crisp)" x="7.0" y="42.666666666666664" font-family="Liberation Sans" font-size="6.5" fill="#e0e0e0" text-anchor="middle">S</text></g>
<rect x="208" y="400" width="22" height="24" fill="#191970"/><rect x="208.5" y="400.5" width="21" height="23" fill="none" stroke="#a8a8a8" stroke-width="1"/><g transform="translate(208,400)"><rect x="4.5" y="5.5" width="13" height="13" fill="none" stroke="#ffff00" stroke-width="1.2"/><line x1="8.833333333333332" y1="5.5" x2="8.833333333333332" y2="18.5" stroke="#ffff00" stroke-width="1"/><line x1="4.5" y1="9.833333333333332" x2="17.5" y2="9.833333333333332" stroke="#ffff00" stroke-width="1"/><line x1="13.166666666666666" y1="5.5" x2="13.166666666666666" y2="18.5" stroke="#ffff00" stroke-width="1"/><line x1="4.5" y1="14.166666666666666" x2="17.5" y2="14.166666666666666" stroke="#ffff00" stroke-width="1"/></g>
<rect x="231" y="376" width="21" height="48" fill="#191970"/><rect x="231.5" y="376.5" width="20" height="47" fill="none" stroke="#a8a8a8" stroke-width="1"/><g transform="translate(231,376)" shape-rendering="auto"><path d="M3,5 L7,4 L6,7 L4,11 L3,10 Z M9,5 L12,4 L13,7 L15,9 L17,11 L15,13 L14,15 L13,12 L11,9 L9,8 Z M15,5 L18,4 L17,7 Z M3,12 L6,12 L6,15 L4,14 Z" fill="#ffff00"/><text filter="url(#crispS)" x="10.2" y="25.5" font-family="Liberation Sans" font-size="9.5" fill="#ffff00" text-anchor="middle">M</text><text filter="url(#crispS)" x="10.2" y="33.7" font-family="Liberation Sans" font-size="9.5" fill="#ffff00" text-anchor="middle">A</text><text filter="url(#crispS)" x="10.2" y="41.9" font-family="Liberation Sans" font-size="9.5" fill="#ffff00" text-anchor="middle">P</text></g>
<rect x="253" y="376" width="21" height="48" fill="#707070"/><rect x="253.5" y="376.5" width="20" height="47" fill="none" stroke="#a8a8a8" stroke-width="1"/><g transform="translate(253,376)" fill="none" stroke="#e0e0e0" stroke-width="1.2" shape-rendering="auto"><circle cx="10.0" cy="23" r="7.5"/><circle cx="10.0" cy="23" r="4.5"/><circle cx="10.0" cy="23" r="2" fill="#e0e0e0" fill-opacity="0.3"/><line x1="12.0" y1="23.0" x2="18.0" y2="23.0"/><line x1="11.414213562373096" y1="24.414213562373096" x2="15.65685424949238" y2="28.65685424949238"/><line x1="10.0" y1="25.0" x2="10.0" y2="31.0"/><line x1="8.585786437626904" y1="24.414213562373096" x2="4.34314575050762" y2="28.65685424949238"/><line x1="8.0" y1="23.0" x2="2.0" y2="23.0"/><line x1="8.585786437626904" y1="21.585786437626904" x2="4.3431457505076185" y2="17.34314575050762"/><line x1="10.0" y1="21.0" x2="9.999999999999998" y2="15.0"/><line x1="11.414213562373094" y1="21.585786437626904" x2="15.65685424949238" y2="17.343145750507617"/></g>
<rect x="275" y="400" width="22" height="24" fill="#191970"/><rect x="275.5" y="400.5" width="21" height="23" fill="none" stroke="#a8a8a8" stroke-width="1"/><g transform="translate(275,400)" shape-rendering="crispEdges" fill="#ffff00"><rect x="10" y="5" width="3" height="2"/><rect x="8" y="7" width="7" height="5"/><rect x="10" y="8" width="1" height="3" fill="#191970"/><rect x="12" y="8" width="1" height="3" fill="#191970"/><rect x="7" y="11" width="9" height="2"/><rect x="10" y="13" width="3" height="2"/><path d="M4,17 L6,15 L8,17 L10,15 L12,17 L14,15 L16,17 L18,15 L20,17 L20,19 L4,19 Z" fill="#ffff00" shape-rendering="auto"/></g>
<rect x="298" y="376" width="46" height="48" fill="#707070"/><rect x="298.5" y="376.5" width="45" height="47" fill="none" stroke="#a8a8a8" stroke-width="1"/><g transform="translate(298,376)" shape-rendering="auto" stroke="#e0e0e0" fill="none" stroke-width="1.3"><path d="M5.5,32.5 L40.5,32.5 L37.5,38.5 L8.5,38.5 Z"/><path d="M7,32.5 L7,24.5 L11,24.5 L13,32.5"/><circle cx="22.6" cy="22.5" r="3"/><line x1="22.6" y1="25.5" x2="22.6" y2="32.5"/><line x1="34.5" y1="15.5" x2="34.5" y2="32.5"/><path d="M3,44 L3,38 L5,36.5 L8,38.5 L11,36.5 L14,38.5 L17,36.5 L20,38.5 L23,36.5 L26,38.5 L29,36.5 L32,38.5 L35,36.5 L38,38.5 L41,36.5 L43,38 L43,44 Z" fill="#e0e0e0" stroke="none"/></g>
<rect x="4" y="426" width="570" height="446" fill="#000" />
<clipPath id="radclip"><rect x="55" y="458" width="436" height="337"/></clipPath>
<g clip-path="url(#radclip)">
<rect x="189" y="618" width="3" height="3" fill="#c8c8c8"/>
<rect x="192" y="618" width="3" height="3" fill="#00b0e0"/>
<rect x="192" y="630" width="3" height="3" fill="#00b0e0"/>
<rect x="192" y="663" width="3" height="3" fill="#e0a030"/>
<rect x="195" y="603" width="3" height="3" fill="#20e8a0"/>
<rect x="195" y="618" width="3" height="3" fill="#1060f0"/>
<rect x="195" y="624" width="3" height="3" fill="#c8c8c8"/>
<rect x="195" y="627" width="3" height="3" fill="#20e8a0"/>
<rect x="198" y="612" width="3" height="3" fill="#e0a030"/>
<rect x="198" y="615" width="3" height="3" fill="#20e8a0"/>
<rect x="198" y="657" width="3" height="3" fill="#e0a030"/>
<rect x="201" y="588" width="3" height="3" fill="#00b0e0"/>
<rect x="201" y="594" width="3" height="3" fill="#00b0e0"/>
<rect x="201" y="597" width="3" height="3" fill="#e0a030"/>
<rect x="201" y="612" width="3" height="3" fill="#20e8a0"/>
<rect x="201" y="618" width="3" height="3" fill="#00b0e0"/>
<rect x="201" y="621" width="3" height="3" fill="#107048"/>
<rect x="201" y="624" width="3" height="3" fill="#c8c8c8"/>
<rect x="201" y="633" width="3" height="3" fill="#20e8a0"/>
<rect x="201" y="666" width="3" height="3" fill="#e0a030"/>
<rect x="204" y="576" width="3" height="3" fill="#00b0e0"/>
<rect x="204" y="579" width="3" height="3" fill="#107048"/>
<rect x="204" y="585" width="3" height="3" fill="#e0a030"/>
<rect x="204" y="588" width="3" height="3" fill="#20e8a0"/>
<rect x="204" y="597" width="3" height="3" fill="#e0a030"/>
<rect x="204" y="600" width="3" height="3" fill="#00b0e0"/>
<rect x="204" y="603" width="3" height="3" fill="#107048"/>
<rect x="204" y="606" width="3" height="3" fill="#107048"/>
<rect x="204" y="618" width="3" height="3" fill="#00b0e0"/>
<rect x="204" y="624" width="3" height="3" fill="#00b0e0"/>
<rect x="204" y="627" width="3" height="3" fill="#00b0e0"/>
<rect x="204" y="633" width="3" height="3" fill="#20e8a0"/>
<rect x="204" y="636" width="3" height="3" fill="#00b0e0"/>
<rect x="204" y="639" width="3" height="3" fill="#20e8a0"/>
<rect x="204" y="642" width="3" height="3" fill="#e0a030"/>
<rect x="204" y="672" width="3" height="3" fill="#e0a030"/>
<rect x="207" y="582" width="3" height="3" fill="#20e8a0"/>
<rect x="207" y="588" width="3" height="3" fill="#00b0e0"/>
<rect x="207" y="597" width="3" height="3" fill="#00b0e0"/>
<rect x="207" y="600" width="3" height="3" fill="#e0a030"/>
<rect x="207" y="603" width="3" height="3" fill="#c8c8c8"/>
<rect x="207" y="606" width="3" height="3" fill="#c8c8c8"/>
<rect x="207" y="609" width="3" height="3" fill="#c8c8c8"/>
<rect x="207" y="612" width="3" height="3" fill="#20e8a0"/>
<rect x="207" y="621" width="3" height="3" fill="#00b0e0"/>
<rect x="207" y="624" width="3" height="3" fill="#00b0e0"/>
<rect x="207" y="627" width="3" height="3" fill="#e0a030"/>
<rect x="207" y="630" width="3" height="3" fill="#20e8a0"/>
<rect x="207" y="633" width="3" height="3" fill="#00b0e0"/>
<rect x="207" y="639" width="3" height="3" fill="#1060f0"/>
<rect x="210" y="585" width="3" height="3" fill="#20e8a0"/>
<rect x="210" y="588" width="3" height="3" fill="#20e8a0"/>
<rect x="210" y="597" width="3" height="3" fill="#1060f0"/>
<rect x="210" y="600" width="3" height="3" fill="#00b0e0"/>
<rect x="210" y="603" width="3" height="3" fill="#e0a030"/>
<rect x="210" y="606" width="3" height="3" fill="#1060f0"/>
<rect x="210" y="609" width="3" height="3" fill="#107048"/>
<rect x="210" y="615" width="3" height="3" fill="#1060f0"/>
<rect x="210" y="621" width="3" height="3" fill="#00b0e0"/>
<rect x="210" y="624" width="3" height="3" fill="#1060f0"/>
<rect x="210" y="627" width="3" height="3" fill="#00b0e0"/>
<rect x="210" y="630" width="3" height="3" fill="#00b0e0"/>
<rect x="210" y="633" width="3" height="3" fill="#00b0e0"/>
<rect x="210" y="642" width="3" height="3" fill="#00b0e0"/>
<rect x="210" y="672" width="3" height="3" fill="#e0a030"/>
<rect x="210" y="684" width="3" height="3" fill="#1060f0"/>
<rect x="213" y="579" width="3" height="3" fill="#00b0e0"/>
<rect x="213" y="588" width="3" height="3" fill="#107048"/>
<rect x="213" y="591" width="3" height="3" fill="#00b0e0"/>
<rect x="213" y="597" width="3" height="3" fill="#1060f0"/>
<rect x="213" y="603" width="3" height="3" fill="#20e8a0"/>
<rect x="213" y="606" width="3" height="3" fill="#e0a030"/>
<rect x="213" y="615" width="3" height="3" fill="#c8c8c8"/>
<rect x="213" y="618" width="3" height="3" fill="#e0a030"/>
<rect x="213" y="621" width="3" height="3" fill="#107048"/>
<rect x="213" y="624" width="3" height="3" fill="#20e8a0"/>
<rect x="213" y="627" width="3" height="3" fill="#00b0e0"/>
<rect x="213" y="630" width="3" height="3" fill="#00b0e0"/>
<rect x="213" y="633" width="3" height="3" fill="#1060f0"/>
<rect x="213" y="636" width="3" height="3" fill="#20e8a0"/>
<rect x="216" y="567" width="3" height="3" fill="#107048"/>
<rect x="216" y="573" width="3" height="3" fill="#1060f0"/>
<rect x="216" y="591" width="3" height="3" fill="#e0a030"/>
<rect x="216" y="594" width="3" height="3" fill="#1060f0"/>
<rect x="216" y="597" width="3" height="3" fill="#107048"/>
<rect x="216" y="603" width="3" height="3" fill="#20e8a0"/>
<rect x="216" y="606" width="3" height="3" fill="#e0a030"/>
<rect x="216" y="609" width="3" height="3" fill="#107048"/>
<rect x="216" y="612" width="3" height="3" fill="#e0a030"/>
<rect x="216" y="615" width="3" height="3" fill="#00b0e0"/>
<rect x="216" y="618" width="3" height="3" fill="#00b0e0"/>
<rect x="216" y="621" width="3" height="3" fill="#20e8a0"/>
<rect x="216" y="627" width="3" height="3" fill="#00b0e0"/>
<rect x="216" y="660" width="3" height="3" fill="#00b0e0"/>
<rect x="219" y="564" width="3" height="3" fill="#00b0e0"/>
<rect x="219" y="567" width="3" height="3" fill="#107048"/>
<rect x="219" y="585" width="3" height="3" fill="#e0a030"/>
<rect x="219" y="597" width="3" height="3" fill="#e0a030"/>
<rect x="219" y="600" width="3" height="3" fill="#20e8a0"/>
<rect x="219" y="606" width="3" height="3" fill="#00b0e0"/>
<rect x="219" y="609" width="3" height="3" fill="#20e8a0"/>
<rect x="219" y="612" width="3" height="3" fill="#00b0e0"/>
<rect x="219" y="615" width="3" height="3" fill="#00b0e0"/>
<rect x="219" y="618" width="3" height="3" fill="#20e8a0"/>
<rect x="219" y="621" width="3" height="3" fill="#107048"/>
<rect x="219" y="645" width="3" height="3" fill="#00b0e0"/>
<rect x="219" y="681" width="3" height="3" fill="#00b0e0"/>
<rect x="222" y="582" width="3" height="3" fill="#20e8a0"/>
<rect x="222" y="585" width="3" height="3" fill="#c8c8c8"/>
<rect x="222" y="588" width="3" height="3" fill="#1060f0"/>
<rect x="222" y="591" width="3" height="3" fill="#20e8a0"/>
<rect x="222" y="597" width="3" height="3" fill="#20e8a0"/>
<rect x="222" y="603" width="3" height="3" fill="#107048"/>
<rect x="222" y="606" width="3" height="3" fill="#107048"/>
<rect x="222" y="609" width="3" height="3" fill="#00b0e0"/>
<rect x="222" y="612" width="3" height="3" fill="#1060f0"/>
<rect x="222" y="615" width="3" height="3" fill="#c8c8c8"/>
<rect x="222" y="618" width="3" height="3" fill="#00b0e0"/>
<rect x="222" y="621" width="3" height="3" fill="#20e8a0"/>
<rect x="222" y="624" width="3" height="3" fill="#20e8a0"/>
<rect x="222" y="642" width="3" height="3" fill="#20e8a0"/>
<rect x="222" y="657" width="3" height="3" fill="#1060f0"/>
<rect x="222" y="690" width="3" height="3" fill="#00b0e0"/>
<rect x="225" y="564" width="3" height="3" fill="#c8c8c8"/>
<rect x="225" y="570" width="3" height="3" fill="#00b0e0"/>
<rect x="225" y="573" width="3" height="3" fill="#00b0e0"/>
<rect x="225" y="576" width="3" height="3" fill="#20e8a0"/>
<rect x="225" y="594" width="3" height="3" fill="#00b0e0"/>
<rect x="225" y="600" width="3" height="3" fill="#c8c8c8"/>
<rect x="225" y="612" width="3" height="3" fill="#00b0e0"/>
<rect x="225" y="615" width="3" height="3" fill="#20e8a0"/>
<rect x="225" y="618" width="3" height="3" fill="#00b0e0"/>
<rect x="225" y="642" width="3" height="3" fill="#107048"/>
<rect x="225" y="666" width="3" height="3" fill="#00b0e0"/>
<rect x="228" y="561" width="3" height="3" fill="#c8c8c8"/>
<rect x="228" y="564" width="3" height="3" fill="#1060f0"/>
<rect x="228" y="573" width="3" height="3" fill="#1060f0"/>
<rect x="228" y="600" width="3" height="3" fill="#1060f0"/>
<rect x="228" y="603" width="3" height="3" fill="#1060f0"/>
<rect x="228" y="606" width="3" height="3" fill="#00b0e0"/>
<rect x="228" y="609" width="3" height="3" fill="#c8c8c8"/>
<rect x="228" y="612" width="3" height="3" fill="#1060f0"/>
<rect x="228" y="615" width="3" height="3" fill="#107048"/>
<rect x="228" y="618" width="3" height="3" fill="#c8c8c8"/>
<rect x="228" y="630" width="3" height="3" fill="#20e8a0"/>
<rect x="228" y="639" width="3" height="3" fill="#00b0e0"/>
<rect x="228" y="651" width="3" height="3" fill="#00b0e0"/>
<rect x="228" y="657" width="3" height="3" fill="#20e8a0"/>
<rect x="228" y="663" width="3" height="3" fill="#107048"/>
<rect x="231" y="564" width="3" height="3" fill="#107048"/>
<rect x="231" y="567" width="3" height="3" fill="#e0a030"/>
<rect x="231" y="570" width="3" height="3" fill="#20e8a0"/>
<rect x="231" y="591" width="3" height="3" fill="#107048"/>
<rect x="231" y="600" width="3" height="3" fill="#20e8a0"/>
<rect x="231" y="606" width="3" height="3" fill="#20e8a0"/>
<rect x="231" y="609" width="3" height="3" fill="#00b0e0"/>
<rect x="231" y="624" width="3" height="3" fill="#00b0e0"/>
<rect x="231" y="627" width="3" height="3" fill="#e0a030"/>
<rect x="231" y="645" width="3" height="3" fill="#107048"/>
<rect x="231" y="663" width="3" height="3" fill="#107048"/>
<rect x="231" y="672" width="3" height="3" fill="#e0a030"/>
<rect x="234" y="570" width="3" height="3" fill="#e0a030"/>
<rect x="234" y="594" width="3" height="3" fill="#20e8a0"/>
<rect x="234" y="603" width="3" height="3" fill="#20e8a0"/>
<rect x="234" y="606" width="3" height="3" fill="#00b0e0"/>
<rect x="234" y="624" width="3" height="3" fill="#1060f0"/>
<rect x="234" y="642" width="3" height="3" fill="#e0a030"/>
<rect x="234" y="645" width="3" height="3" fill="#00b0e0"/>
<rect x="234" y="648" width="3" height="3" fill="#20e8a0"/>
<rect x="234" y="657" width="3" height="3" fill="#00b0e0"/>
<rect x="234" y="660" width="3" height="3" fill="#00b0e0"/>
<rect x="234" y="678" width="3" height="3" fill="#00b0e0"/>
<rect x="237" y="567" width="3" height="3" fill="#20e8a0"/>
<rect x="237" y="570" width="3" height="3" fill="#107048"/>
<rect x="237" y="573" width="3" height="3" fill="#20e8a0"/>
<rect x="237" y="600" width="3" height="3" fill="#20e8a0"/>
<rect x="237" y="603" width="3" height="3" fill="#20e8a0"/>
<rect x="237" y="606" width="3" height="3" fill="#20e8a0"/>
<rect x="237" y="609" width="3" height="3" fill="#20e8a0"/>
<rect x="237" y="615" width="3" height="3" fill="#20e8a0"/>
<rect x="237" y="618" width="3" height="3" fill="#20e8a0"/>
<rect x="237" y="621" width="3" height="3" fill="#20e8a0"/>
<rect x="237" y="627" width="3" height="3" fill="#e0a030"/>
<rect x="237" y="630" width="3" height="3" fill="#00b0e0"/>
<rect x="237" y="639" width="3" height="3" fill="#107048"/>
<rect x="237" y="669" width="3" height="3" fill="#1060f0"/>
<rect x="237" y="672" width="3" height="3" fill="#00b0e0"/>
<rect x="237" y="681" width="3" height="3" fill="#00b0e0"/>
<rect x="240" y="561" width="3" height="3" fill="#00b0e0"/>
<rect x="240" y="570" width="3" height="3" fill="#e0a030"/>
<rect x="240" y="573" width="3" height="3" fill="#00b0e0"/>
<rect x="240" y="588" width="3" height="3" fill="#00b0e0"/>
<rect x="240" y="591" width="3" height="3" fill="#20e8a0"/>
<rect x="240" y="594" width="3" height="3" fill="#107048"/>
<rect x="240" y="600" width="3" height="3" fill="#e0a030"/>
<rect x="240" y="603" width="3" height="3" fill="#00b0e0"/>
<rect x="240" y="606" width="3" height="3" fill="#1060f0"/>
<rect x="240" y="609" width="3" height="3" fill="#1060f0"/>
<rect x="240" y="612" width="3" height="3" fill="#00b0e0"/>
<rect x="240" y="621" width="3" height="3" fill="#c8c8c8"/>
<rect x="240" y="624" width="3" height="3" fill="#00b0e0"/>
<rect x="240" y="627" width="3" height="3" fill="#c8c8c8"/>
<rect x="240" y="630" width="3" height="3" fill="#20e8a0"/>
<rect x="240" y="648" width="3" height="3" fill="#20e8a0"/>
<rect x="240" y="651" width="3" height="3" fill="#20e8a0"/>
<rect x="240" y="666" width="3" height="3" fill="#107048"/>
<rect x="240" y="672" width="3" height="3" fill="#e0a030"/>
<rect x="243" y="552" width="3" height="3" fill="#e0a030"/>
<rect x="243" y="558" width="3" height="3" fill="#00b0e0"/>
<rect x="243" y="561" width="3" height="3" fill="#20e8a0"/>
<rect x="243" y="564" width="3" height="3" fill="#20e8a0"/>
<rect x="243" y="576" width="3" height="3" fill="#1060f0"/>
<rect x="243" y="585" width="3" height="3" fill="#00b0e0"/>
<rect x="243" y="588" width="3" height="3" fill="#1060f0"/>
<rect x="243" y="591" width="3" height="3" fill="#00b0e0"/>
<rect x="243" y="597" width="3" height="3" fill="#1060f0"/>
<rect x="243" y="600" width="3" height="3" fill="#107048"/>
<rect x="243" y="603" width="3" height="3" fill="#20e8a0"/>
<rect x="243" y="606" width="3" height="3" fill="#c8c8c8"/>
<rect x="243" y="609" width="3" height="3" fill="#107048"/>
<rect x="243" y="612" width="3" height="3" fill="#20e8a0"/>
<rect x="243" y="615" width="3" height="3" fill="#e0a030"/>
<rect x="243" y="618" width="3" height="3" fill="#00b0e0"/>
<rect x="243" y="621" width="3" height="3" fill="#1060f0"/>
<rect x="243" y="624" width="3" height="3" fill="#e0a030"/>
<rect x="243" y="627" width="3" height="3" fill="#20e8a0"/>
<rect x="243" y="630" width="3" height="3" fill="#20e8a0"/>
<rect x="243" y="633" width="3" height="3" fill="#1060f0"/>
<rect x="243" y="660" width="3" height="3" fill="#1060f0"/>
<rect x="243" y="666" width="3" height="3" fill="#00b0e0"/>
<rect x="246" y="576" width="3" height="3" fill="#107048"/>
<rect x="246" y="585" width="3" height="3" fill="#c8c8c8"/>
<rect x="246" y="588" width="3" height="3" fill="#00b0e0"/>
<rect x="246" y="591" width="3" height="3" fill="#00b0e0"/>
<rect x="246" y="594" width="3" height="3" fill="#20e8a0"/>
<rect x="246" y="597" width="3" height="3" fill="#00b0e0"/>
<rect x="246" y="600" width="3" height="3" fill="#20e8a0"/>
<rect x="246" y="603" width="3" height="3" fill="#1060f0"/>
<rect x="246" y="606" width="3" height="3" fill="#00b0e0"/>
<rect x="246" y="609" width="3" height="3" fill="#107048"/>
<rect x="246" y="612" width="3" height="3" fill="#00b0e0"/>
<rect x="246" y="615" width="3" height="3" fill="#00b0e0"/>
<rect x="246" y="621" width="3" height="3" fill="#107048"/>
<rect x="246" y="660" width="3" height="3" fill="#e0a030"/>
<rect x="246" y="702" width="3" height="3" fill="#1060f0"/>
<rect x="249" y="558" width="3" height="3" fill="#20e8a0"/>
<rect x="249" y="561" width="3" height="3" fill="#00b0e0"/>
<rect x="249" y="567" width="3" height="3" fill="#00b0e0"/>
<rect x="249" y="573" width="3" height="3" fill="#107048"/>
<rect x="249" y="585" width="3" height="3" fill="#00b0e0"/>
<rect x="249" y="588" width="3" height="3" fill="#1060f0"/>
<rect x="249" y="591" width="3" height="3" fill="#00b0e0"/>
<rect x="249" y="597" width="3" height="3" fill="#107048"/>
<rect x="249" y="603" width="3" height="3" fill="#00b0e0"/>
<rect x="249" y="606" width="3" height="3" fill="#1060f0"/>
<rect x="249" y="609" width="3" height="3" fill="#1060f0"/>
<rect x="249" y="666" width="3" height="3" fill="#00b0e0"/>
<rect x="252" y="567" width="3" height="3" fill="#1060f0"/>
<rect x="252" y="576" width="3" height="3" fill="#20e8a0"/>
<rect x="252" y="585" width="3" height="3" fill="#00b0e0"/>
<rect x="252" y="588" width="3" height="3" fill="#1060f0"/>
<rect x="252" y="597" width="3" height="3" fill="#00b0e0"/>
<rect x="252" y="600" width="3" height="3" fill="#e0a030"/>
<rect x="252" y="603" width="3" height="3" fill="#c8c8c8"/>
<rect x="252" y="606" width="3" height="3" fill="#c8c8c8"/>
<rect x="252" y="609" width="3" height="3" fill="#c8c8c8"/>
<rect x="252" y="663" width="3" height="3" fill="#00b0e0"/>
<rect x="252" y="666" width="3" height="3" fill="#e0a030"/>
<rect x="252" y="708" width="3" height="3" fill="#1060f0"/>
<rect x="255" y="552" width="3" height="3" fill="#00b0e0"/>
<rect x="255" y="567" width="3" height="3" fill="#107048"/>
<rect x="255" y="570" width="3" height="3" fill="#20e8a0"/>
<rect x="255" y="576" width="3" height="3" fill="#c8c8c8"/>
<rect x="255" y="579" width="3" height="3" fill="#00b0e0"/>
<rect x="255" y="585" width="3" height="3" fill="#20e8a0"/>
<rect x="255" y="588" width="3" height="3" fill="#00b0e0"/>
<rect x="255" y="591" width="3" height="3" fill="#00b0e0"/>
<rect x="255" y="597" width="3" height="3" fill="#20e8a0"/>
<rect x="255" y="600" width="3" height="3" fill="#1060f0"/>
<rect x="255" y="603" width="3" height="3" fill="#00b0e0"/>
<rect x="255" y="606" width="3" height="3" fill="#107048"/>
<rect x="255" y="660" width="3" height="3" fill="#20e8a0"/>
<rect x="255" y="669" width="3" height="3" fill="#00b0e0"/>
<rect x="255" y="678" width="3" height="3" fill="#20e8a0"/>
<rect x="255" y="699" width="3" height="3" fill="#1060f0"/>
<rect x="255" y="705" width="3" height="3" fill="#107048"/>
<rect x="258" y="546" width="3" height="3" fill="#e0a030"/>
<rect x="258" y="549" width="3" height="3" fill="#e0a030"/>
<rect x="258" y="567" width="3" height="3" fill="#00b0e0"/>
<rect x="258" y="573" width="3" height="3" fill="#00b0e0"/>
<rect x="258" y="576" width="3" height="3" fill="#e0a030"/>
<rect x="258" y="579" width="3" height="3" fill="#107048"/>
<rect x="258" y="582" width="3" height="3" fill="#00b0e0"/>
<rect x="258" y="585" width="3" height="3" fill="#e0a030"/>
<rect x="258" y="588" width="3" height="3" fill="#107048"/>
<rect x="258" y="591" width="3" height="3" fill="#00b0e0"/>
<rect x="258" y="594" width="3" height="3" fill="#107048"/>
<rect x="258" y="600" width="3" height="3" fill="#00b0e0"/>
<rect x="258" y="603" width="3" height="3" fill="#00b0e0"/>
<rect x="258" y="660" width="3" height="3" fill="#20e8a0"/>
<rect x="258" y="669" width="3" height="3" fill="#1060f0"/>
<rect x="258" y="675" width="3" height="3" fill="#e0a030"/>
<rect x="258" y="708" width="3" height="3" fill="#00b0e0"/>
<rect x="261" y="549" width="3" height="3" fill="#107048"/>
<rect x="261" y="558" width="3" height="3" fill="#00b0e0"/>
<rect x="261" y="561" width="3" height="3" fill="#00b0e0"/>
<rect x="261" y="573" width="3" height="3" fill="#c8c8c8"/>
<rect x="261" y="576" width="3" height="3" fill="#20e8a0"/>
<rect x="261" y="579" width="3" height="3" fill="#00b0e0"/>
<rect x="261" y="582" width="3" height="3" fill="#20e8a0"/>
<rect x="261" y="585" width="3" height="3" fill="#20e8a0"/>
<rect x="261" y="603" width="3" height="3" fill="#00b0e0"/>
<rect x="261" y="651" width="3" height="3" fill="#6010f0"/>
<rect x="261" y="684" width="3" height="3" fill="#00b0e0"/>
<rect x="261" y="690" width="3" height="3" fill="#e0a030"/>
<rect x="261" y="714" width="3" height="3" fill="#e0a030"/>
<rect x="264" y="549" width="3" height="3" fill="#00b0e0"/>
<rect x="264" y="561" width="3" height="3" fill="#c8c8c8"/>
<rect x="264" y="567" width="3" height="3" fill="#1060f0"/>
<rect x="264" y="573" width="3" height="3" fill="#107048"/>
<rect x="264" y="588" width="3" height="3" fill="#00b0e0"/>
<rect x="264" y="591" width="3" height="3" fill="#00b0e0"/>
<rect x="264" y="594" width="3" height="3" fill="#20e8a0"/>
<rect x="264" y="597" width="3" height="3" fill="#1060f0"/>
<rect x="264" y="606" width="3" height="3" fill="#6010f0"/>
<rect x="264" y="657" width="3" height="3" fill="#00b0e0"/>
<rect x="264" y="672" width="3" height="3" fill="#00b0e0"/>
<rect x="267" y="549" width="3" height="3" fill="#e0a030"/>
<rect x="267" y="555" width="3" height="3" fill="#00b0e0"/>
<rect x="267" y="564" width="3" height="3" fill="#00b0e0"/>
<rect x="267" y="573" width="3" height="3" fill="#c8c8c8"/>
<rect x="267" y="588" width="3" height="3" fill="#c8c8c8"/>
<rect x="267" y="594" width="3" height="3" fill="#107048"/>
<rect x="267" y="675" width="3" height="3" fill="#00b0e0"/>
<rect x="267" y="693" width="3" height="3" fill="#1060f0"/>
<rect x="270" y="561" width="3" height="3" fill="#20e8a0"/>
<rect x="270" y="564" width="3" height="3" fill="#00b0e0"/>
<rect x="270" y="570" width="3" height="3" fill="#00b0e0"/>
<rect x="270" y="588" width="3" height="3" fill="#00b0e0"/>
<rect x="270" y="591" width="3" height="3" fill="#107048"/>
<rect x="270" y="594" width="3" height="3" fill="#20e8a0"/>
<rect x="270" y="597" width="3" height="3" fill="#e0a030"/>
<rect x="270" y="603" width="3" height="3" fill="#2020c0"/>
<rect x="270" y="609" width="3" height="3" fill="#00b0e0"/>
<rect x="270" y="615" width="3" height="3" fill="#00b0e0"/>
<rect x="270" y="621" width="3" height="3" fill="#1060f0"/>
<rect x="270" y="645" width="3" height="3" fill="#00b0e0"/>
<rect x="270" y="663" width="3" height="3" fill="#1060f0"/>
<rect x="270" y="675" width="3" height="3" fill="#20e8a0"/>
<rect x="270" y="678" width="3" height="3" fill="#00b0e0"/>
<rect x="273" y="549" width="3" height="3" fill="#00b0e0"/>
<rect x="273" y="552" width="3" height="3" fill="#c8c8c8"/>
<rect x="273" y="564" width="3" height="3" fill="#c8c8c8"/>
<rect x="273" y="567" width="3" height="3" fill="#20e8a0"/>
<rect x="273" y="573" width="3" height="3" fill="#107048"/>
<rect x="273" y="588" width="3" height="3" fill="#00b0e0"/>
<rect x="273" y="591" width="3" height="3" fill="#00b0e0"/>
<rect x="273" y="594" width="3" height="3" fill="#00b0e0"/>
<rect x="273" y="603" width="3" height="3" fill="#6010f0"/>
<rect x="273" y="615" width="3" height="3" fill="#2020c0"/>
<rect x="273" y="627" width="3" height="3" fill="#2020c0"/>
<rect x="273" y="672" width="3" height="3" fill="#1060f0"/>
<rect x="273" y="690" width="3" height="3" fill="#e0a030"/>
<rect x="276" y="555" width="3" height="3" fill="#00b0e0"/>
<rect x="276" y="561" width="3" height="3" fill="#c8c8c8"/>
<rect x="276" y="567" width="3" height="3" fill="#20e8a0"/>
<rect x="276" y="570" width="3" height="3" fill="#00b0e0"/>
<rect x="276" y="573" width="3" height="3" fill="#20e8a0"/>
<rect x="276" y="576" width="3" height="3" fill="#20e8a0"/>
<rect x="276" y="588" width="3" height="3" fill="#c8c8c8"/>
<rect x="276" y="591" width="3" height="3" fill="#e0a030"/>
<rect x="276" y="597" width="3" height="3" fill="#00b0e0"/>
<rect x="276" y="600" width="3" height="3" fill="#e0a030"/>
<rect x="276" y="639" width="3" height="3" fill="#6010f0"/>
<rect x="276" y="681" width="3" height="3" fill="#e0a030"/>
<rect x="276" y="687" width="3" height="3" fill="#1060f0"/>
<rect x="276" y="708" width="3" height="3" fill="#1060f0"/>
<rect x="279" y="555" width="3" height="3" fill="#00b0e0"/>
<rect x="279" y="558" width="3" height="3" fill="#00b0e0"/>
<rect x="279" y="564" width="3" height="3" fill="#00b0e0"/>
<rect x="279" y="567" width="3" height="3" fill="#e0a030"/>
<rect x="279" y="570" width="3" height="3" fill="#107048"/>
<rect x="279" y="588" width="3" height="3" fill="#00b0e0"/>
<rect x="279" y="591" width="3" height="3" fill="#c8c8c8"/>
<rect x="279" y="594" width="3" height="3" fill="#1060f0"/>
<rect x="279" y="597" width="3" height="3" fill="#00b0e0"/>
<rect x="279" y="612" width="3" height="3" fill="#6010f0"/>
<rect x="279" y="636" width="3" height="3" fill="#00b0e0"/>
<rect x="279" y="672" width="3" height="3" fill="#00b0e0"/>
<rect x="279" y="678" width="3" height="3" fill="#00b0e0"/>
<rect x="282" y="564" width="3" height="3" fill="#00b0e0"/>
<rect x="282" y="567" width="3" height="3" fill="#00b0e0"/>
<rect x="282" y="573" width="3" height="3" fill="#107048"/>
<rect x="282" y="588" width="3" height="3" fill="#1060f0"/>
<rect x="282" y="591" width="3" height="3" fill="#1060f0"/>
<rect x="282" y="594" width="3" height="3" fill="#e0a030"/>
<rect x="282" y="603" width="3" height="3" fill="#20e8a0"/>
<rect x="282" y="612" width="3" height="3" fill="#2020c0"/>
<rect x="282" y="627" width="3" height="3" fill="#6010f0"/>
<rect x="282" y="636" width="3" height="3" fill="#00b0e0"/>
<rect x="282" y="678" width="3" height="3" fill="#20e8a0"/>
<rect x="282" y="681" width="3" height="3" fill="#1060f0"/>
<rect x="285" y="549" width="3" height="3" fill="#107048"/>
<rect x="285" y="555" width="3" height="3" fill="#e0a030"/>
<rect x="285" y="567" width="3" height="3" fill="#00b0e0"/>
<rect x="285" y="570" width="3" height="3" fill="#107048"/>
<rect x="285" y="579" width="3" height="3" fill="#c8c8c8"/>
<rect x="285" y="582" width="3" height="3" fill="#20e8a0"/>
<rect x="285" y="588" width="3" height="3" fill="#1060f0"/>
<rect x="285" y="591" width="3" height="3" fill="#00b0e0"/>
<rect x="285" y="594" width="3" height="3" fill="#107048"/>
<rect x="285" y="597" width="3" height="3" fill="#20e8a0"/>
<rect x="285" y="600" width="3" height="3" fill="#20e8a0"/>
<rect x="285" y="603" width="3" height="3" fill="#00b0e0"/>
<rect x="285" y="609" width="3" height="3" fill="#00b0e0"/>
<rect x="285" y="621" width="3" height="3" fill="#1060f0"/>
<rect x="285" y="642" width="3" height="3" fill="#2020c0"/>
<rect x="285" y="651" width="3" height="3" fill="#2020c0"/>
<rect x="285" y="684" width="3" height="3" fill="#20e8a0"/>
<rect x="285" y="705" width="3" height="3" fill="#e0a030"/>
<rect x="288" y="546" width="3" height="3" fill="#00b0e0"/>
<rect x="288" y="552" width="3" height="3" fill="#1060f0"/>
<rect x="288" y="555" width="3" height="3" fill="#107048"/>
<rect x="288" y="564" width="3" height="3" fill="#c8c8c8"/>
<rect x="288" y="573" width="3" height="3" fill="#00b0e0"/>
<rect x="288" y="582" width="3" height="3" fill="#20e8a0"/>
<rect x="288" y="585" width="3" height="3" fill="#1060f0"/>
<rect x="288" y="588" width="3" height="3" fill="#00b0e0"/>
<rect x="288" y="591" width="3" height="3" fill="#c8c8c8"/>
<rect x="288" y="597" width="3" height="3" fill="#1060f0"/>
<rect x="288" y="600" width="3" height="3" fill="#20e8a0"/>
<rect x="288" y="603" width="3" height="3" fill="#e0a030"/>
<rect x="288" y="648" width="3" height="3" fill="#6010f0"/>
<rect x="288" y="666" width="3" height="3" fill="#20e8a0"/>
<rect x="291" y="552" width="3" height="3" fill="#00b0e0"/>
<rect x="291" y="555" width="3" height="3" fill="#00b0e0"/>
<rect x="291" y="564" width="3" height="3" fill="#1060f0"/>
<rect x="291" y="570" width="3" height="3" fill="#e0a030"/>
<rect x="291" y="576" width="3" height="3" fill="#00b0e0"/>
<rect x="291" y="582" width="3" height="3" fill="#c8c8c8"/>
<rect x="291" y="585" width="3" height="3" fill="#20e8a0"/>
<rect x="291" y="588" width="3" height="3" fill="#1060f0"/>
<rect x="291" y="591" width="3" height="3" fill="#20e8a0"/>
<rect x="291" y="597" width="3" height="3" fill="#c8c8c8"/>
<rect x="291" y="606" width="3" height="3" fill="#c8c8c8"/>
<rect x="291" y="615" width="3" height="3" fill="#2020c0"/>
<rect x="291" y="633" width="3" height="3" fill="#2020c0"/>
<rect x="291" y="648" width="3" height="3" fill="#1060f0"/>
<rect x="291" y="669" width="3" height="3" fill="#e0a030"/>
<rect x="291" y="675" width="3" height="3" fill="#e0a030"/>
<rect x="291" y="681" width="3" height="3" fill="#107048"/>
<rect x="291" y="714" width="3" height="3" fill="#20e8a0"/>
<rect x="294" y="549" width="3" height="3" fill="#c8c8c8"/>
<rect x="294" y="555" width="3" height="3" fill="#00b0e0"/>
<rect x="294" y="567" width="3" height="3" fill="#20e8a0"/>
<rect x="294" y="570" width="3" height="3" fill="#00b0e0"/>
<rect x="294" y="573" width="3" height="3" fill="#20e8a0"/>
<rect x="294" y="576" width="3" height="3" fill="#107048"/>
<rect x="294" y="579" width="3" height="3" fill="#00b0e0"/>
<rect x="294" y="582" width="3" height="3" fill="#c8c8c8"/>
<rect x="294" y="588" width="3" height="3" fill="#1060f0"/>
<rect x="294" y="594" width="3" height="3" fill="#20e8a0"/>
<rect x="294" y="597" width="3" height="3" fill="#c8c8c8"/>
<rect x="294" y="603" width="3" height="3" fill="#00b0e0"/>
<rect x="294" y="612" width="3" height="3" fill="#00b0e0"/>
<rect x="294" y="618" width="3" height="3" fill="#00b0e0"/>
<rect x="294" y="636" width="3" height="3" fill="#1060f0"/>
<rect x="294" y="651" width="3" height="3" fill="#107048"/>
<rect x="294" y="654" width="3" height="3" fill="#00b0e0"/>
<rect x="294" y="714" width="3" height="3" fill="#00b0e0"/>
<rect x="297" y="561" width="3" height="3" fill="#107048"/>
<rect x="297" y="564" width="3" height="3" fill="#20e8a0"/>
<rect x="297" y="567" width="3" height="3" fill="#1060f0"/>
<rect x="297" y="573" width="3" height="3" fill="#00b0e0"/>
<rect x="297" y="579" width="3" height="3" fill="#00b0e0"/>
<rect x="297" y="582" width="3" height="3" fill="#20e8a0"/>
<rect x="297" y="591" width="3" height="3" fill="#107048"/>
<rect x="297" y="594" width="3" height="3" fill="#c8c8c8"/>
<rect x="297" y="597" width="3" height="3" fill="#20e8a0"/>
<rect x="297" y="603" width="3" height="3" fill="#00b0e0"/>
<rect x="297" y="612" width="3" height="3" fill="#00b0e0"/>
<rect x="297" y="615" width="3" height="3" fill="#00b0e0"/>
<rect x="297" y="618" width="3" height="3" fill="#e0a030"/>
<rect x="297" y="639" width="3" height="3" fill="#1060f0"/>
<rect x="297" y="678" width="3" height="3" fill="#20e8a0"/>
<rect x="300" y="567" width="3" height="3" fill="#20e8a0"/>
<rect x="300" y="570" width="3" height="3" fill="#20e8a0"/>
<rect x="300" y="573" width="3" height="3" fill="#00b0e0"/>
<rect x="300" y="576" width="3" height="3" fill="#107048"/>
<rect x="300" y="579" width="3" height="3" fill="#00b0e0"/>
<rect x="300" y="582" width="3" height="3" fill="#c8c8c8"/>
<rect x="300" y="588" width="3" height="3" fill="#20e8a0"/>
<rect x="300" y="591" width="3" height="3" fill="#20e8a0"/>
<rect x="300" y="600" width="3" height="3" fill="#20e8a0"/>
<rect x="300" y="603" width="3" height="3" fill="#107048"/>
<rect x="300" y="606" width="3" height="3" fill="#00b0e0"/>
<rect x="300" y="609" width="3" height="3" fill="#e0a030"/>
<rect x="300" y="615" width="3" height="3" fill="#00b0e0"/>
<rect x="300" y="627" width="3" height="3" fill="#00b0e0"/>
<rect x="300" y="657" width="3" height="3" fill="#20e8a0"/>
<rect x="300" y="660" width="3" height="3" fill="#20e8a0"/>
<rect x="303" y="573" width="3" height="3" fill="#20e8a0"/>
<rect x="303" y="576" width="3" height="3" fill="#20e8a0"/>
<rect x="303" y="579" width="3" height="3" fill="#20e8a0"/>
<rect x="303" y="582" width="3" height="3" fill="#00b0e0"/>
<rect x="303" y="585" width="3" height="3" fill="#00b0e0"/>
<rect x="303" y="591" width="3" height="3" fill="#20e8a0"/>
<rect x="303" y="600" width="3" height="3" fill="#1060f0"/>
<rect x="303" y="609" width="3" height="3" fill="#c8c8c8"/>
<rect x="303" y="615" width="3" height="3" fill="#00b0e0"/>
<rect x="303" y="618" width="3" height="3" fill="#20e8a0"/>
<rect x="303" y="621" width="3" height="3" fill="#c8c8c8"/>
<rect x="303" y="624" width="3" height="3" fill="#00b0e0"/>
<rect x="303" y="630" width="3" height="3" fill="#1060f0"/>
<rect x="303" y="633" width="3" height="3" fill="#00b0e0"/>
<rect x="303" y="654" width="3" height="3" fill="#20e8a0"/>
<rect x="303" y="672" width="3" height="3" fill="#e0a030"/>
<rect x="306" y="567" width="3" height="3" fill="#20e8a0"/>
<rect x="306" y="579" width="3" height="3" fill="#107048"/>
<rect x="306" y="585" width="3" height="3" fill="#00b0e0"/>
<rect x="306" y="594" width="3" height="3" fill="#00b0e0"/>
<rect x="306" y="597" width="3" height="3" fill="#00b0e0"/>
<rect x="306" y="603" width="3" height="3" fill="#20e8a0"/>
<rect x="306" y="606" width="3" height="3" fill="#00b0e0"/>
<rect x="306" y="618" width="3" height="3" fill="#20e8a0"/>
<rect x="306" y="621" width="3" height="3" fill="#e0a030"/>
<rect x="306" y="624" width="3" height="3" fill="#107048"/>
<rect x="306" y="627" width="3" height="3" fill="#c8c8c8"/>
<rect x="306" y="639" width="3" height="3" fill="#20e8a0"/>
<rect x="306" y="660" width="3" height="3" fill="#00b0e0"/>
<rect x="309" y="576" width="3" height="3" fill="#107048"/>
<rect x="309" y="579" width="3" height="3" fill="#20e8a0"/>
<rect x="309" y="582" width="3" height="3" fill="#20e8a0"/>
<rect x="309" y="585" width="3" height="3" fill="#00b0e0"/>
<rect x="309" y="603" width="3" height="3" fill="#e0a030"/>
<rect x="309" y="609" width="3" height="3" fill="#20e8a0"/>
<rect x="309" y="612" width="3" height="3" fill="#00b0e0"/>
<rect x="309" y="618" width="3" height="3" fill="#e0a030"/>
<rect x="309" y="621" width="3" height="3" fill="#c8c8c8"/>
<rect x="309" y="624" width="3" height="3" fill="#00b0e0"/>
<rect x="309" y="627" width="3" height="3" fill="#20e8a0"/>
<rect x="309" y="633" width="3" height="3" fill="#1060f0"/>
<rect x="309" y="651" width="3" height="3" fill="#107048"/>
<rect x="309" y="657" width="3" height="3" fill="#1060f0"/>
<rect x="309" y="702" width="3" height="3" fill="#00b0e0"/>
<rect x="312" y="567" width="3" height="3" fill="#c8c8c8"/>
<rect x="312" y="570" width="3" height="3" fill="#107048"/>
<rect x="312" y="573" width="3" height="3" fill="#20e8a0"/>
<rect x="312" y="576" width="3" height="3" fill="#20e8a0"/>
<rect x="312" y="579" width="3" height="3" fill="#107048"/>
<rect x="312" y="582" width="3" height="3" fill="#1060f0"/>
<rect x="312" y="585" width="3" height="3" fill="#1060f0"/>
<rect x="312" y="594" width="3" height="3" fill="#1060f0"/>
<rect x="312" y="600" width="3" height="3" fill="#20e8a0"/>
<rect x="312" y="612" width="3" height="3" fill="#107048"/>
<rect x="312" y="615" width="3" height="3" fill="#107048"/>
<rect x="312" y="618" width="3" height="3" fill="#1060f0"/>
<rect x="312" y="621" width="3" height="3" fill="#c8c8c8"/>
<rect x="312" y="624" width="3" height="3" fill="#20e8a0"/>
<rect x="312" y="627" width="3" height="3" fill="#20e8a0"/>
<rect x="312" y="633" width="3" height="3" fill="#00b0e0"/>
<rect x="312" y="639" width="3" height="3" fill="#00b0e0"/>
<rect x="315" y="558" width="3" height="3" fill="#20e8a0"/>
<rect x="315" y="561" width="3" height="3" fill="#e0a030"/>
<rect x="315" y="570" width="3" height="3" fill="#107048"/>
<rect x="315" y="579" width="3" height="3" fill="#1060f0"/>
<rect x="315" y="582" width="3" height="3" fill="#20e8a0"/>
<rect x="315" y="585" width="3" height="3" fill="#107048"/>
<rect x="315" y="588" width="3" height="3" fill="#00b0e0"/>
<rect x="315" y="594" width="3" height="3" fill="#00b0e0"/>
<rect x="315" y="600" width="3" height="3" fill="#107048"/>
<rect x="315" y="612" width="3" height="3" fill="#20e8a0"/>
<rect x="315" y="615" width="3" height="3" fill="#1060f0"/>
<rect x="315" y="621" width="3" height="3" fill="#c8c8c8"/>
<rect x="315" y="624" width="3" height="3" fill="#20e8a0"/>
<rect x="315" y="627" width="3" height="3" fill="#00b0e0"/>
<rect x="315" y="633" width="3" height="3" fill="#20e8a0"/>
<rect x="315" y="696" width="3" height="3" fill="#1060f0"/>
<rect x="318" y="561" width="3" height="3" fill="#e0a030"/>
<rect x="318" y="573" width="3" height="3" fill="#e0a030"/>
<rect x="318" y="576" width="3" height="3" fill="#00b0e0"/>
<rect x="318" y="579" width="3" height="3" fill="#107048"/>
<rect x="318" y="582" width="3" height="3" fill="#c8c8c8"/>
<rect x="318" y="594" width="3" height="3" fill="#00b0e0"/>
<rect x="318" y="606" width="3" height="3" fill="#20e8a0"/>
<rect x="318" y="612" width="3" height="3" fill="#00b0e0"/>
<rect x="318" y="618" width="3" height="3" fill="#00b0e0"/>
<rect x="318" y="621" width="3" height="3" fill="#1060f0"/>
<rect x="318" y="624" width="3" height="3" fill="#20e8a0"/>
<rect x="318" y="627" width="3" height="3" fill="#20e8a0"/>
<rect x="318" y="630" width="3" height="3" fill="#20e8a0"/>
<rect x="318" y="633" width="3" height="3" fill="#00b0e0"/>
<rect x="321" y="576" width="3" height="3" fill="#107048"/>
<rect x="321" y="582" width="3" height="3" fill="#00b0e0"/>
<rect x="321" y="585" width="3" height="3" fill="#e0a030"/>
<rect x="321" y="591" width="3" height="3" fill="#00b0e0"/>
<rect x="321" y="612" width="3" height="3" fill="#e0a030"/>
<rect x="321" y="615" width="3" height="3" fill="#107048"/>
<rect x="321" y="618" width="3" height="3" fill="#20e8a0"/>
<rect x="321" y="624" width="3" height="3" fill="#107048"/>
<rect x="321" y="627" width="3" height="3" fill="#107048"/>
<rect x="321" y="630" width="3" height="3" fill="#20e8a0"/>
<rect x="321" y="636" width="3" height="3" fill="#00b0e0"/>
<rect x="321" y="645" width="3" height="3" fill="#00b0e0"/>
<rect x="321" y="696" width="3" height="3" fill="#e0a030"/>
<rect x="324" y="585" width="3" height="3" fill="#e0a030"/>
<rect x="324" y="588" width="3" height="3" fill="#20e8a0"/>
<rect x="324" y="591" width="3" height="3" fill="#20e8a0"/>
<rect x="324" y="594" width="3" height="3" fill="#1060f0"/>
<rect x="324" y="597" width="3" height="3" fill="#00b0e0"/>
<rect x="324" y="603" width="3" height="3" fill="#107048"/>
<rect x="324" y="606" width="3" height="3" fill="#c8c8c8"/>
<rect x="324" y="609" width="3" height="3" fill="#20e8a0"/>
<rect x="324" y="615" width="3" height="3" fill="#00b0e0"/>
<rect x="324" y="618" width="3" height="3" fill="#e0a030"/>
<rect x="324" y="621" width="3" height="3" fill="#e0a030"/>
<rect x="324" y="624" width="3" height="3" fill="#c8c8c8"/>
<rect x="324" y="630" width="3" height="3" fill="#00b0e0"/>
<rect x="324" y="633" width="3" height="3" fill="#c8c8c8"/>
<rect x="327" y="570" width="3" height="3" fill="#00b0e0"/>
<rect x="327" y="591" width="3" height="3" fill="#20e8a0"/>
<rect x="327" y="594" width="3" height="3" fill="#00b0e0"/>
<rect x="327" y="615" width="3" height="3" fill="#00b0e0"/>
<rect x="327" y="618" width="3" height="3" fill="#20e8a0"/>
<rect x="327" y="621" width="3" height="3" fill="#107048"/>
<rect x="327" y="675" width="3" height="3" fill="#00b0e0"/>
<rect x="330" y="588" width="3" height="3" fill="#20e8a0"/>
<rect x="330" y="591" width="3" height="3" fill="#107048"/>
<rect x="330" y="594" width="3" height="3" fill="#c8c8c8"/>
<rect x="330" y="597" width="3" height="3" fill="#107048"/>
<rect x="330" y="600" width="3" height="3" fill="#e0a030"/>
<rect x="330" y="606" width="3" height="3" fill="#c8c8c8"/>
<rect x="330" y="609" width="3" height="3" fill="#e0a030"/>
<rect x="330" y="612" width="3" height="3" fill="#00b0e0"/>
<rect x="330" y="615" width="3" height="3" fill="#107048"/>
<rect x="330" y="618" width="3" height="3" fill="#00b0e0"/>
<rect x="330" y="621" width="3" height="3" fill="#00b0e0"/>
<rect x="330" y="633" width="3" height="3" fill="#e0a030"/>
<rect x="333" y="591" width="3" height="3" fill="#1060f0"/>
<rect x="333" y="594" width="3" height="3" fill="#00b0e0"/>
<rect x="333" y="597" width="3" height="3" fill="#00b0e0"/>
<rect x="333" y="600" width="3" height="3" fill="#1060f0"/>
<rect x="333" y="606" width="3" height="3" fill="#c8c8c8"/>
<rect x="333" y="612" width="3" height="3" fill="#00b0e0"/>
<rect x="333" y="615" width="3" height="3" fill="#20e8a0"/>
<rect x="333" y="618" width="3" height="3" fill="#20e8a0"/>
<rect x="333" y="621" width="3" height="3" fill="#107048"/>
<rect x="336" y="588" width="3" height="3" fill="#c8c8c8"/>
<rect x="336" y="594" width="3" height="3" fill="#1060f0"/>
<rect x="336" y="597" width="3" height="3" fill="#00b0e0"/>
<rect x="336" y="609" width="3" height="3" fill="#20e8a0"/>
<rect x="336" y="612" width="3" height="3" fill="#00b0e0"/>
<rect x="336" y="615" width="3" height="3" fill="#00b0e0"/>
<rect x="336" y="624" width="3" height="3" fill="#1060f0"/>
<rect x="336" y="627" width="3" height="3" fill="#00b0e0"/>
<rect x="336" y="630" width="3" height="3" fill="#1060f0"/>
<rect x="336" y="633" width="3" height="3" fill="#e0a030"/>
<rect x="339" y="597" width="3" height="3" fill="#20e8a0"/>
<rect x="339" y="603" width="3" height="3" fill="#20e8a0"/>
<rect x="339" y="609" width="3" height="3" fill="#00b0e0"/>
<rect x="339" y="612" width="3" height="3" fill="#00b0e0"/>
<rect x="339" y="615" width="3" height="3" fill="#107048"/>
<rect x="339" y="618" width="3" height="3" fill="#107048"/>
<rect x="339" y="621" width="3" height="3" fill="#c8c8c8"/>
<rect x="339" y="624" width="3" height="3" fill="#20e8a0"/>
<rect x="339" y="630" width="3" height="3" fill="#c8c8c8"/>
<rect x="342" y="588" width="3" height="3" fill="#107048"/>
<rect x="342" y="603" width="3" height="3" fill="#1060f0"/>
<rect x="342" y="606" width="3" height="3" fill="#107048"/>
<rect x="342" y="609" width="3" height="3" fill="#e0a030"/>
<rect x="342" y="612" width="3" height="3" fill="#00b0e0"/>
<rect x="342" y="621" width="3" height="3" fill="#00b0e0"/>
<rect x="342" y="630" width="3" height="3" fill="#00b0e0"/>
<rect x="342" y="633" width="3" height="3" fill="#00b0e0"/>
<rect x="342" y="666" width="3" height="3" fill="#00b0e0"/>
<rect x="345" y="606" width="3" height="3" fill="#c8c8c8"/>
<rect x="345" y="612" width="3" height="3" fill="#1060f0"/>
<rect x="345" y="615" width="3" height="3" fill="#1060f0"/>
<rect x="345" y="618" width="3" height="3" fill="#20e8a0"/>
<rect x="345" y="621" width="3" height="3" fill="#e0a030"/>
<rect x="345" y="624" width="3" height="3" fill="#20e8a0"/>
<rect x="345" y="633" width="3" height="3" fill="#107048"/>
<rect x="345" y="657" width="3" height="3" fill="#107048"/>
<rect x="345" y="669" width="3" height="3" fill="#1060f0"/>
<rect x="348" y="618" width="3" height="3" fill="#20e8a0"/>
<rect x="348" y="621" width="3" height="3" fill="#1060f0"/>
<rect x="348" y="663" width="3" height="3" fill="#e0a030"/>
<rect x="351" y="609" width="3" height="3" fill="#00b0e0"/>
<rect x="351" y="612" width="3" height="3" fill="#1060f0"/>
<rect x="351" y="618" width="3" height="3" fill="#20e8a0"/>
<rect x="354" y="600" width="3" height="3" fill="#20e8a0"/>
<rect x="357" y="615" width="3" height="3" fill="#c8c8c8"/>
<rect x="260" y="476" width="4" height="4" fill="#107048"/>
<rect x="260" y="480" width="4" height="4" fill="#107048"/>
<rect x="264" y="476" width="4" height="4" fill="#107048"/>
<rect x="264" y="480" width="4" height="4" fill="#107048"/>
<rect x="264" y="484" width="4" height="4" fill="#107048"/>
<rect x="268" y="476" width="4" height="4" fill="#107048"/>
<rect x="268" y="480" width="4" height="4" fill="#107048"/>
<rect x="172" y="516" width="4" height="4" fill="#107048"/>
<rect x="172" y="520" width="4" height="4" fill="#107048"/>
<rect x="176" y="508" width="4" height="4" fill="#107048"/>
<rect x="176" y="512" width="4" height="4" fill="#107048"/>
<rect x="176" y="516" width="4" height="4" fill="#107048"/>
<rect x="176" y="520" width="4" height="4" fill="#107048"/>
<rect x="176" y="524" width="4" height="4" fill="#107048"/>
<rect x="180" y="508" width="4" height="4" fill="#107048"/>
<rect x="180" y="512" width="4" height="4" fill="#107048"/>
<rect x="180" y="516" width="4" height="4" fill="#107048"/>
<rect x="180" y="520" width="4" height="4" fill="#107048"/>
<rect x="180" y="524" width="4" height="4" fill="#107048"/>
<rect x="184" y="508" width="4" height="4" fill="#107048"/>
<rect x="184" y="512" width="4" height="4" fill="#107048"/>
<rect x="184" y="516" width="4" height="4" fill="#107048"/>
<rect x="184" y="520" width="4" height="4" fill="#107048"/>
<rect x="216" y="524" width="4" height="4" fill="#20e8a0"/>
<rect x="216" y="528" width="4" height="4" fill="#20e8a0"/>
<rect x="220" y="524" width="4" height="4" fill="#20e8a0"/>
<rect x="176" y="536" width="4" height="4" fill="#107048"/>
<rect x="176" y="540" width="4" height="4" fill="#107048"/>
<rect x="176" y="544" width="4" height="4" fill="#107048"/>
<rect x="176" y="548" width="4" height="4" fill="#107048"/>
<rect x="180" y="532" width="4" height="4" fill="#20e8a0"/>
<rect x="180" y="536" width="4" height="4" fill="#107048"/>
<rect x="180" y="540" width="4" height="4" fill="#107048"/>
<rect x="180" y="544" width="4" height="4" fill="#20e8a0"/>
<rect x="180" y="548" width="4" height="4" fill="#20e8a0"/>
<rect x="184" y="532" width="4" height="4" fill="#20e8a0"/>
<rect x="184" y="536" width="4" height="4" fill="#107048"/>
<rect x="184" y="540" width="4" height="4" fill="#107048"/>
<rect x="184" y="544" width="4" height="4" fill="#107048"/>
<rect x="184" y="548" width="4" height="4" fill="#20e8a0"/>
<rect x="188" y="536" width="4" height="4" fill="#107048"/>
<rect x="188" y="540" width="4" height="4" fill="#107048"/>
<rect x="152" y="552" width="4" height="4" fill="#20e8a0"/>
<rect x="152" y="556" width="4" height="4" fill="#107048"/>
<rect x="152" y="560" width="4" height="4" fill="#107048"/>
<rect x="156" y="552" width="4" height="4" fill="#20e8a0"/>
<rect x="156" y="556" width="4" height="4" fill="#107048"/>
<rect x="156" y="560" width="4" height="4" fill="#107048"/>
<rect x="156" y="564" width="4" height="4" fill="#20e8a0"/>
<rect x="160" y="548" width="4" height="4" fill="#107048"/>
<rect x="160" y="552" width="4" height="4" fill="#107048"/>
<rect x="160" y="556" width="4" height="4" fill="#107048"/>
<rect x="160" y="564" width="4" height="4" fill="#20e8a0"/>
<rect x="164" y="548" width="4" height="4" fill="#107048"/>
<rect x="164" y="552" width="4" height="4" fill="#107048"/>
<rect x="164" y="556" width="4" height="4" fill="#107048"/>
<rect x="164" y="560" width="4" height="4" fill="#107048"/>
<rect x="164" y="564" width="4" height="4" fill="#107048"/>
<rect x="168" y="548" width="4" height="4" fill="#20e8a0"/>
<rect x="168" y="552" width="4" height="4" fill="#107048"/>
<rect x="168" y="556" width="4" height="4" fill="#20e8a0"/>
<rect x="168" y="560" width="4" height="4" fill="#107048"/>
<rect x="168" y="564" width="4" height="4" fill="#107048"/>
<rect x="172" y="552" width="4" height="4" fill="#107048"/>
<rect x="172" y="556" width="4" height="4" fill="#20e8a0"/>
<rect x="172" y="560" width="4" height="4" fill="#107048"/>
<rect x="216" y="540" width="4" height="4" fill="#20e8a0"/>
<rect x="216" y="544" width="4" height="4" fill="#20e8a0"/>
<rect x="220" y="544" width="4" height="4" fill="#e0a030"/>
<rect x="224" y="536" width="4" height="4" fill="#20e8a0"/>
<rect x="224" y="540" width="4" height="4" fill="#c8c8c8"/>
<rect x="224" y="544" width="4" height="4" fill="#20e8a0"/>
<rect x="228" y="540" width="4" height="4" fill="#20e8a0"/>
<rect x="220" y="560" width="4" height="4" fill="#20e8a0"/>
<rect x="220" y="564" width="4" height="4" fill="#107048"/>
<rect x="220" y="568" width="4" height="4" fill="#20e8a0"/>
<rect x="224" y="556" width="4" height="4" fill="#20e8a0"/>
<rect x="224" y="560" width="4" height="4" fill="#107048"/>
<rect x="224" y="564" width="4" height="4" fill="#20e8a0"/>
<rect x="224" y="568" width="4" height="4" fill="#20e8a0"/>
<rect x="224" y="572" width="4" height="4" fill="#107048"/>
<rect x="228" y="552" width="4" height="4" fill="#20e8a0"/>
<rect x="228" y="556" width="4" height="4" fill="#20e8a0"/>
<rect x="228" y="560" width="4" height="4" fill="#f0c020"/>
<rect x="228" y="564" width="4" height="4" fill="#e0a030"/>
<rect x="228" y="572" width="4" height="4" fill="#107048"/>
<rect x="232" y="552" width="4" height="4" fill="#20e8a0"/>
<rect x="232" y="556" width="4" height="4" fill="#c8c8c8"/>
<rect x="232" y="560" width="4" height="4" fill="#f0c020"/>
<rect x="232" y="564" width="4" height="4" fill="#e0a030"/>
<rect x="232" y="568" width="4" height="4" fill="#c8c8c8"/>
<rect x="232" y="576" width="4" height="4" fill="#107048"/>
<rect x="236" y="552" width="4" height="4" fill="#20e8a0"/>
<rect x="236" y="556" width="4" height="4" fill="#20e8a0"/>
<rect x="236" y="560" width="4" height="4" fill="#e0a030"/>
<rect x="236" y="564" width="4" height="4" fill="#e0a030"/>
<rect x="236" y="572" width="4" height="4" fill="#107048"/>
<rect x="236" y="576" width="4" height="4" fill="#107048"/>
<rect x="240" y="552" width="4" height="4" fill="#20e8a0"/>
<rect x="240" y="556" width="4" height="4" fill="#20e8a0"/>
<rect x="240" y="560" width="4" height="4" fill="#e0a030"/>
<rect x="240" y="564" width="4" height="4" fill="#e0a030"/>
<rect x="240" y="572" width="4" height="4" fill="#107048"/>
<rect x="244" y="556" width="4" height="4" fill="#20e8a0"/>
<rect x="244" y="560" width="4" height="4" fill="#20e8a0"/>
<rect x="244" y="564" width="4" height="4" fill="#20e8a0"/>
<rect x="244" y="568" width="4" height="4" fill="#107048"/>
<rect x="244" y="572" width="4" height="4" fill="#107048"/>
<rect x="248" y="564" width="4" height="4" fill="#20e8a0"/>
<rect x="236" y="544" width="4" height="4" fill="#20e8a0"/>
<rect x="236" y="548" width="4" height="4" fill="#20e8a0"/>
<rect x="240" y="548" width="4" height="4" fill="#20e8a0"/>
<rect x="216" y="588" width="4" height="4" fill="#20e8a0"/>
<rect x="216" y="592" width="4" height="4" fill="#c8c8c8"/>
<rect x="216" y="596" width="4" height="4" fill="#c8c8c8"/>
<rect x="220" y="588" width="4" height="4" fill="#20e8a0"/>
<rect x="220" y="592" width="4" height="4" fill="#f0c020"/>
<rect x="220" y="596" width="4" height="4" fill="#e0a030"/>
<rect x="224" y="592" width="4" height="4" fill="#20e8a0"/>
<rect x="224" y="596" width="4" height="4" fill="#20e8a0"/>
<rect x="192" y="608" width="4" height="4" fill="#107048"/>
<rect x="196" y="604" width="4" height="4" fill="#20e8a0"/>
<rect x="196" y="608" width="4" height="4" fill="#20e8a0"/>
<rect x="200" y="604" width="4" height="4" fill="#107048"/>
<rect x="200" y="608" width="4" height="4" fill="#e0a030"/>
<rect x="200" y="612" width="4" height="4" fill="#20e8a0"/>
<rect x="204" y="604" width="4" height="4" fill="#e0a030"/>
<rect x="204" y="608" width="4" height="4" fill="#c8c8c8"/>
<rect x="204" y="612" width="4" height="4" fill="#107048"/>
<rect x="208" y="604" width="4" height="4" fill="#c8c8c8"/>
<rect x="208" y="608" width="4" height="4" fill="#c8c8c8"/>
<rect x="208" y="612" width="4" height="4" fill="#107048"/>
<rect x="212" y="608" width="4" height="4" fill="#c8c8c8"/>
<rect x="212" y="612" width="4" height="4" fill="#107048"/>
<rect x="216" y="604" width="4" height="4" fill="#20e8a0"/>
<rect x="216" y="608" width="4" height="4" fill="#20e8a0"/>
<rect x="220" y="604" width="4" height="4" fill="#107048"/>
<rect x="220" y="608" width="4" height="4" fill="#20e8a0"/>
<rect x="136" y="608" width="4" height="4" fill="#20e8a0"/>
<rect x="136" y="612" width="4" height="4" fill="#20e8a0"/>
<rect x="140" y="608" width="4" height="4" fill="#20e8a0"/>
<rect x="140" y="612" width="4" height="4" fill="#20e8a0"/>
<rect x="144" y="608" width="4" height="4" fill="#20e8a0"/>
<rect x="144" y="612" width="4" height="4" fill="#20e8a0"/>
<rect x="152" y="616" width="4" height="4" fill="#107048"/>
<rect x="152" y="620" width="4" height="4" fill="#107048"/>
<rect x="156" y="624" width="4" height="4" fill="#107048"/>
<rect x="280" y="488" width="4" height="4" fill="#107048"/>
<rect x="280" y="492" width="4" height="4" fill="#107048"/>
<rect x="280" y="496" width="4" height="4" fill="#20e8a0"/>
<rect x="284" y="484" width="4" height="4" fill="#20e8a0"/>
<rect x="284" y="488" width="4" height="4" fill="#c8c8c8"/>
<rect x="284" y="492" width="4" height="4" fill="#c8c8c8"/>
<rect x="284" y="496" width="4" height="4" fill="#107048"/>
<rect x="288" y="484" width="4" height="4" fill="#20e8a0"/>
<rect x="288" y="488" width="4" height="4" fill="#c8c8c8"/>
<rect x="288" y="492" width="4" height="4" fill="#c8c8c8"/>
<rect x="292" y="488" width="4" height="4" fill="#107048"/>
<rect x="292" y="492" width="4" height="4" fill="#20e8a0"/>
<rect x="292" y="496" width="4" height="4" fill="#20e8a0"/>
<rect x="296" y="496" width="4" height="4" fill="#107048"/>
<rect x="296" y="500" width="4" height="4" fill="#107048"/>
<rect x="296" y="504" width="4" height="4" fill="#107048"/>
<rect x="300" y="500" width="4" height="4" fill="#c8c8c8"/>
<rect x="300" y="504" width="4" height="4" fill="#107048"/>
<rect x="304" y="500" width="4" height="4" fill="#c8c8c8"/>
<rect x="304" y="504" width="4" height="4" fill="#c8c8c8"/>
<rect x="308" y="496" width="4" height="4" fill="#107048"/>
<rect x="308" y="500" width="4" height="4" fill="#107048"/>
<rect x="308" y="504" width="4" height="4" fill="#107048"/>
<rect x="312" y="500" width="4" height="4" fill="#107048"/>
<rect x="312" y="512" width="4" height="4" fill="#20e8a0"/>
<rect x="312" y="516" width="4" height="4" fill="#107048"/>
<rect x="312" y="520" width="4" height="4" fill="#107048"/>
<rect x="312" y="524" width="4" height="4" fill="#107048"/>
<rect x="316" y="508" width="4" height="4" fill="#107048"/>
<rect x="316" y="512" width="4" height="4" fill="#107048"/>
<rect x="316" y="516" width="4" height="4" fill="#e0a030"/>
<rect x="316" y="520" width="4" height="4" fill="#e0a030"/>
<rect x="320" y="508" width="4" height="4" fill="#20e8a0"/>
<rect x="320" y="512" width="4" height="4" fill="#e0a030"/>
<rect x="320" y="516" width="4" height="4" fill="#c8c8c8"/>
<rect x="320" y="520" width="4" height="4" fill="#c8c8c8"/>
<rect x="320" y="524" width="4" height="4" fill="#107048"/>
<rect x="320" y="528" width="4" height="4" fill="#20e8a0"/>
<rect x="324" y="508" width="4" height="4" fill="#107048"/>
<rect x="324" y="512" width="4" height="4" fill="#c8c8c8"/>
<rect x="324" y="516" width="4" height="4" fill="#c8c8c8"/>
<rect x="324" y="520" width="4" height="4" fill="#e0a030"/>
<rect x="324" y="524" width="4" height="4" fill="#20e8a0"/>
<rect x="328" y="512" width="4" height="4" fill="#20e8a0"/>
<rect x="328" y="516" width="4" height="4" fill="#107048"/>
<rect x="328" y="520" width="4" height="4" fill="#107048"/>
<rect x="328" y="524" width="4" height="4" fill="#20e8a0"/>
<rect x="344" y="528" width="4" height="4" fill="#20e8a0"/>
<rect x="344" y="532" width="4" height="4" fill="#20e8a0"/>
<rect x="344" y="536" width="4" height="4" fill="#20e8a0"/>
<rect x="348" y="524" width="4" height="4" fill="#c8c8c8"/>
<rect x="348" y="528" width="4" height="4" fill="#e0a030"/>
<rect x="348" y="532" width="4" height="4" fill="#e0a030"/>
<rect x="348" y="536" width="4" height="4" fill="#20e8a0"/>
<rect x="352" y="528" width="4" height="4" fill="#20e8a0"/>
<rect x="352" y="532" width="4" height="4" fill="#e0a030"/>
<rect x="352" y="536" width="4" height="4" fill="#c8c8c8"/>
<rect x="356" y="528" width="4" height="4" fill="#c8c8c8"/>
<rect x="356" y="532" width="4" height="4" fill="#20e8a0"/>
<rect x="356" y="536" width="4" height="4" fill="#c8c8c8"/>
<rect x="372" y="520" width="4" height="4" fill="#107048"/>
<rect x="372" y="524" width="4" height="4" fill="#20e8a0"/>
<rect x="372" y="528" width="4" height="4" fill="#107048"/>
<rect x="372" y="532" width="4" height="4" fill="#107048"/>
<rect x="372" y="536" width="4" height="4" fill="#20e8a0"/>
<rect x="376" y="520" width="4" height="4" fill="#107048"/>
<rect x="376" y="524" width="4" height="4" fill="#c8c8c8"/>
<rect x="376" y="528" width="4" height="4" fill="#c8c8c8"/>
<rect x="376" y="532" width="4" height="4" fill="#c8c8c8"/>
<rect x="376" y="536" width="4" height="4" fill="#20e8a0"/>
<rect x="376" y="540" width="4" height="4" fill="#20e8a0"/>
<rect x="380" y="516" width="4" height="4" fill="#107048"/>
<rect x="380" y="520" width="4" height="4" fill="#107048"/>
<rect x="380" y="524" width="4" height="4" fill="#c8c8c8"/>
<rect x="380" y="528" width="4" height="4" fill="#c8c8c8"/>
<rect x="380" y="536" width="4" height="4" fill="#c8c8c8"/>
<rect x="380" y="540" width="4" height="4" fill="#107048"/>
<rect x="380" y="544" width="4" height="4" fill="#107048"/>
<rect x="384" y="516" width="4" height="4" fill="#20e8a0"/>
<rect x="384" y="520" width="4" height="4" fill="#107048"/>
<rect x="384" y="524" width="4" height="4" fill="#c8c8c8"/>
<rect x="384" y="528" width="4" height="4" fill="#c8c8c8"/>
<rect x="384" y="532" width="4" height="4" fill="#c8c8c8"/>
<rect x="384" y="536" width="4" height="4" fill="#107048"/>
<rect x="384" y="540" width="4" height="4" fill="#20e8a0"/>
<rect x="388" y="520" width="4" height="4" fill="#20e8a0"/>
<rect x="388" y="524" width="4" height="4" fill="#20e8a0"/>
<rect x="388" y="528" width="4" height="4" fill="#107048"/>
<rect x="388" y="532" width="4" height="4" fill="#107048"/>
<rect x="388" y="536" width="4" height="4" fill="#20e8a0"/>
<rect x="388" y="540" width="4" height="4" fill="#107048"/>
<rect x="392" y="524" width="4" height="4" fill="#20e8a0"/>
<rect x="392" y="532" width="4" height="4" fill="#107048"/>
<rect x="308" y="560" width="4" height="4" fill="#c8c8c8"/>
<rect x="312" y="556" width="4" height="4" fill="#c8c8c8"/>
<rect x="312" y="560" width="4" height="4" fill="#20e8a0"/>
<rect x="312" y="564" width="4" height="4" fill="#c8c8c8"/>
<rect x="316" y="556" width="4" height="4" fill="#20e8a0"/>
<rect x="316" y="560" width="4" height="4" fill="#f0c020"/>
<rect x="316" y="564" width="4" height="4" fill="#20e8a0"/>
<rect x="320" y="556" width="4" height="4" fill="#e0a030"/>
<rect x="320" y="560" width="4" height="4" fill="#f0c020"/>
<rect x="320" y="564" width="4" height="4" fill="#c8c8c8"/>
<rect x="324" y="552" width="4" height="4" fill="#c8c8c8"/>
<rect x="324" y="556" width="4" height="4" fill="#e0a030"/>
<rect x="324" y="560" width="4" height="4" fill="#e0a030"/>
<rect x="328" y="556" width="4" height="4" fill="#20e8a0"/>
<rect x="328" y="560" width="4" height="4" fill="#f0c020"/>
<rect x="328" y="564" width="4" height="4" fill="#20e8a0"/>
<rect x="332" y="556" width="4" height="4" fill="#20e8a0"/>
<rect x="332" y="560" width="4" height="4" fill="#20e8a0"/>
<rect x="332" y="564" width="4" height="4" fill="#20e8a0"/>
<rect x="336" y="560" width="4" height="4" fill="#c8c8c8"/>
<rect x="344" y="560" width="4" height="4" fill="#c8c8c8"/>
<rect x="344" y="564" width="4" height="4" fill="#c8c8c8"/>
<rect x="344" y="568" width="4" height="4" fill="#c8c8c8"/>
<rect x="344" y="572" width="4" height="4" fill="#c8c8c8"/>
<rect x="348" y="560" width="4" height="4" fill="#c8c8c8"/>
<rect x="348" y="564" width="4" height="4" fill="#e0a030"/>
<rect x="348" y="568" width="4" height="4" fill="#e0a030"/>
<rect x="348" y="572" width="4" height="4" fill="#c8c8c8"/>
<rect x="352" y="560" width="4" height="4" fill="#c8c8c8"/>
<rect x="352" y="564" width="4" height="4" fill="#e0a030"/>
<rect x="352" y="568" width="4" height="4" fill="#e0a030"/>
<rect x="352" y="572" width="4" height="4" fill="#20e8a0"/>
<rect x="356" y="564" width="4" height="4" fill="#c8c8c8"/>
<rect x="356" y="568" width="4" height="4" fill="#20e8a0"/>
<rect x="376" y="560" width="4" height="4" fill="#20e8a0"/>
<rect x="376" y="568" width="4" height="4" fill="#c8c8c8"/>
<rect x="380" y="556" width="4" height="4" fill="#20e8a0"/>
<rect x="380" y="560" width="4" height="4" fill="#20e8a0"/>
<rect x="380" y="564" width="4" height="4" fill="#c8c8c8"/>
<rect x="380" y="568" width="4" height="4" fill="#20e8a0"/>
<rect x="384" y="556" width="4" height="4" fill="#c8c8c8"/>
<rect x="384" y="560" width="4" height="4" fill="#c8c8c8"/>
<rect x="384" y="564" width="4" height="4" fill="#c8c8c8"/>
<rect x="384" y="568" width="4" height="4" fill="#c8c8c8"/>
<rect x="388" y="556" width="4" height="4" fill="#c8c8c8"/>
<rect x="388" y="560" width="4" height="4" fill="#c8c8c8"/>
<rect x="388" y="568" width="4" height="4" fill="#20e8a0"/>
<rect x="392" y="556" width="4" height="4" fill="#c8c8c8"/>
<rect x="392" y="560" width="4" height="4" fill="#c8c8c8"/>
<rect x="392" y="564" width="4" height="4" fill="#c8c8c8"/>
<rect x="392" y="568" width="4" height="4" fill="#20e8a0"/>
<rect x="396" y="560" width="4" height="4" fill="#20e8a0"/>
<rect x="396" y="564" width="4" height="4" fill="#20e8a0"/>
<rect x="396" y="568" width="4" height="4" fill="#20e8a0"/>
<rect x="400" y="564" width="4" height="4" fill="#20e8a0"/>
<rect x="408" y="568" width="4" height="4" fill="#20e8a0"/>
<rect x="412" y="564" width="4" height="4" fill="#20e8a0"/>
<rect x="412" y="568" width="4" height="4" fill="#20e8a0"/>
<rect x="412" y="572" width="4" height="4" fill="#20e8a0"/>
<rect x="316" y="576" width="4" height="4" fill="#20e8a0"/>
<rect x="316" y="580" width="4" height="4" fill="#00b0e0"/>
<rect x="316" y="584" width="4" height="4" fill="#00b0e0"/>
<rect x="316" y="588" width="4" height="4" fill="#00b0e0"/>
<rect x="320" y="576" width="4" height="4" fill="#20e8a0"/>
<rect x="320" y="580" width="4" height="4" fill="#20e8a0"/>
<rect x="320" y="584" width="4" height="4" fill="#00b0e0"/>
<rect x="320" y="588" width="4" height="4" fill="#20e8a0"/>
<rect x="320" y="592" width="4" height="4" fill="#00b0e0"/>
<rect x="324" y="576" width="4" height="4" fill="#20e8a0"/>
<rect x="324" y="580" width="4" height="4" fill="#00b0e0"/>
<rect x="324" y="584" width="4" height="4" fill="#20e8a0"/>
<rect x="324" y="588" width="4" height="4" fill="#00b0e0"/>
<rect x="324" y="592" width="4" height="4" fill="#00b0e0"/>
<rect x="328" y="576" width="4" height="4" fill="#20e8a0"/>
<rect x="328" y="580" width="4" height="4" fill="#00b0e0"/>
<rect x="328" y="584" width="4" height="4" fill="#00b0e0"/>
<rect x="328" y="588" width="4" height="4" fill="#00b0e0"/>
<rect x="332" y="580" width="4" height="4" fill="#20e8a0"/>
<rect x="332" y="584" width="4" height="4" fill="#20e8a0"/>
<rect x="392" y="608" width="4" height="4" fill="#20e8a0"/>
<rect x="392" y="612" width="4" height="4" fill="#20e8a0"/>
<rect x="392" y="616" width="4" height="4" fill="#20e8a0"/>
<rect x="392" y="620" width="4" height="4" fill="#20e8a0"/>
<rect x="396" y="608" width="4" height="4" fill="#20e8a0"/>
<rect x="396" y="612" width="4" height="4" fill="#c8c8c8"/>
<rect x="396" y="616" width="4" height="4" fill="#c8c8c8"/>
<rect x="396" y="620" width="4" height="4" fill="#20e8a0"/>
<rect x="396" y="624" width="4" height="4" fill="#20e8a0"/>
<rect x="400" y="608" width="4" height="4" fill="#20e8a0"/>
<rect x="400" y="612" width="4" height="4" fill="#c8c8c8"/>
<rect x="400" y="616" width="4" height="4" fill="#c8c8c8"/>
<rect x="400" y="620" width="4" height="4" fill="#20e8a0"/>
<rect x="400" y="624" width="4" height="4" fill="#20e8a0"/>
<rect x="404" y="612" width="4" height="4" fill="#20e8a0"/>
<rect x="404" y="616" width="4" height="4" fill="#20e8a0"/>
<rect x="404" y="620" width="4" height="4" fill="#20e8a0"/>
<rect x="336" y="612" width="4" height="4" fill="#20e8a0"/>
<rect x="340" y="608" width="4" height="4" fill="#20e8a0"/>
<rect x="340" y="612" width="4" height="4" fill="#00b0e0"/>
<rect x="344" y="608" width="4" height="4" fill="#00b0e0"/>
<rect x="344" y="612" width="4" height="4" fill="#00b0e0"/>
<rect x="328" y="600" width="4" height="4" fill="#00b0e0"/>
<rect x="332" y="600" width="4" height="4" fill="#00b0e0"/>
<rect x="164" y="648" width="4" height="4" fill="#107048"/>
<rect x="168" y="648" width="4" height="4" fill="#20e8a0"/>
<rect x="196" y="648" width="4" height="4" fill="#00b0e0"/>
<rect x="200" y="644" width="4" height="4" fill="#00b0e0"/>
<rect x="200" y="648" width="4" height="4" fill="#00b0e0"/>
<rect x="200" y="652" width="4" height="4" fill="#00b0e0"/>
<rect x="204" y="644" width="4" height="4" fill="#00b0e0"/>
<rect x="204" y="648" width="4" height="4" fill="#00b0e0"/>
<rect x="204" y="652" width="4" height="4" fill="#00b0e0"/>
<rect x="208" y="644" width="4" height="4" fill="#00b0e0"/>
<rect x="208" y="648" width="4" height="4" fill="#00b0e0"/>
<rect x="208" y="652" width="4" height="4" fill="#00b0e0"/>
<rect x="212" y="644" width="4" height="4" fill="#00b0e0"/>
<rect x="212" y="648" width="4" height="4" fill="#00b0e0"/>
<rect x="212" y="652" width="4" height="4" fill="#00b0e0"/>
<rect x="200" y="668" width="4" height="4" fill="#20e8a0"/>
<rect x="200" y="672" width="4" height="4" fill="#20e8a0"/>
<rect x="200" y="676" width="4" height="4" fill="#20e8a0"/>
<rect x="204" y="660" width="4" height="4" fill="#20e8a0"/>
<rect x="204" y="664" width="4" height="4" fill="#20e8a0"/>
<rect x="204" y="668" width="4" height="4" fill="#20e8a0"/>
<rect x="204" y="672" width="4" height="4" fill="#20e8a0"/>
<rect x="204" y="676" width="4" height="4" fill="#20e8a0"/>
<rect x="208" y="660" width="4" height="4" fill="#20e8a0"/>
<rect x="208" y="664" width="4" height="4" fill="#20e8a0"/>
<rect x="208" y="668" width="4" height="4" fill="#20e8a0"/>
<rect x="208" y="672" width="4" height="4" fill="#20e8a0"/>
<rect x="208" y="676" width="4" height="4" fill="#20e8a0"/>
<rect x="208" y="680" width="4" height="4" fill="#20e8a0"/>
<rect x="212" y="664" width="4" height="4" fill="#20e8a0"/>
<rect x="212" y="668" width="4" height="4" fill="#20e8a0"/>
<rect x="212" y="672" width="4" height="4" fill="#20e8a0"/>
<rect x="212" y="676" width="4" height="4" fill="#20e8a0"/>
<rect x="220" y="656" width="4" height="4" fill="#20e8a0"/>
<rect x="224" y="652" width="4" height="4" fill="#20e8a0"/>
<rect x="224" y="656" width="4" height="4" fill="#20e8a0"/>
<rect x="228" y="652" width="4" height="4" fill="#20e8a0"/>
<rect x="228" y="656" width="4" height="4" fill="#20e8a0"/>
<rect x="228" y="660" width="4" height="4" fill="#00b0e0"/>
<rect x="232" y="652" width="4" height="4" fill="#00b0e0"/>
<rect x="232" y="656" width="4" height="4" fill="#00b0e0"/>
<rect x="236" y="652" width="4" height="4" fill="#20e8a0"/>
<rect x="240" y="656" width="4" height="4" fill="#20e8a0"/>
<rect x="172" y="684" width="4" height="4" fill="#20e8a0"/>
<rect x="172" y="688" width="4" height="4" fill="#20e8a0"/>
<rect x="176" y="680" width="4" height="4" fill="#107048"/>
<rect x="176" y="684" width="4" height="4" fill="#c8c8c8"/>
<rect x="176" y="688" width="4" height="4" fill="#c8c8c8"/>
<rect x="176" y="692" width="4" height="4" fill="#20e8a0"/>
<rect x="180" y="680" width="4" height="4" fill="#107048"/>
<rect x="180" y="684" width="4" height="4" fill="#c8c8c8"/>
<rect x="180" y="688" width="4" height="4" fill="#c8c8c8"/>
<rect x="180" y="692" width="4" height="4" fill="#20e8a0"/>
<rect x="184" y="684" width="4" height="4" fill="#20e8a0"/>
<rect x="184" y="688" width="4" height="4" fill="#20e8a0"/>
<rect x="184" y="692" width="4" height="4" fill="#20e8a0"/>
<rect x="124" y="696" width="4" height="4" fill="#107048"/>
<rect x="128" y="696" width="4" height="4" fill="#107048"/>
<rect x="132" y="700" width="4" height="4" fill="#107048"/>
<rect x="132" y="704" width="4" height="4" fill="#107048"/>
<rect x="132" y="708" width="4" height="4" fill="#107048"/>
<rect x="136" y="700" width="4" height="4" fill="#107048"/>
<rect x="136" y="704" width="4" height="4" fill="#107048"/>
<rect x="136" y="708" width="4" height="4" fill="#107048"/>
<rect x="144" y="704" width="4" height="4" fill="#20e8a0"/>
<rect x="144" y="708" width="4" height="4" fill="#20e8a0"/>
<rect x="148" y="700" width="4" height="4" fill="#107048"/>
<rect x="148" y="704" width="4" height="4" fill="#107048"/>
<rect x="148" y="708" width="4" height="4" fill="#20e8a0"/>
<rect x="148" y="712" width="4" height="4" fill="#107048"/>
<rect x="152" y="696" width="4" height="4" fill="#107048"/>
<rect x="152" y="700" width="4" height="4" fill="#20e8a0"/>
<rect x="152" y="704" width="4" height="4" fill="#c8c8c8"/>
<rect x="152" y="708" width="4" height="4" fill="#c8c8c8"/>
<rect x="152" y="712" width="4" height="4" fill="#107048"/>
<rect x="152" y="716" width="4" height="4" fill="#107048"/>
<rect x="156" y="696" width="4" height="4" fill="#20e8a0"/>
<rect x="156" y="704" width="4" height="4" fill="#c8c8c8"/>
<rect x="156" y="708" width="4" height="4" fill="#c8c8c8"/>
<rect x="156" y="712" width="4" height="4" fill="#107048"/>
<rect x="156" y="716" width="4" height="4" fill="#107048"/>
<rect x="160" y="696" width="4" height="4" fill="#20e8a0"/>
<rect x="160" y="700" width="4" height="4" fill="#c8c8c8"/>
<rect x="160" y="704" width="4" height="4" fill="#c8c8c8"/>
<rect x="160" y="708" width="4" height="4" fill="#c8c8c8"/>
<rect x="160" y="712" width="4" height="4" fill="#107048"/>
<rect x="160" y="716" width="4" height="4" fill="#107048"/>
<rect x="164" y="696" width="4" height="4" fill="#20e8a0"/>
<rect x="164" y="700" width="4" height="4" fill="#c8c8c8"/>
<rect x="164" y="704" width="4" height="4" fill="#c8c8c8"/>
<rect x="164" y="708" width="4" height="4" fill="#c8c8c8"/>
<rect x="164" y="712" width="4" height="4" fill="#107048"/>
<rect x="164" y="716" width="4" height="4" fill="#107048"/>
<rect x="168" y="696" width="4" height="4" fill="#20e8a0"/>
<rect x="168" y="704" width="4" height="4" fill="#c8c8c8"/>
<rect x="168" y="708" width="4" height="4" fill="#20e8a0"/>
<rect x="168" y="712" width="4" height="4" fill="#20e8a0"/>
<rect x="168" y="716" width="4" height="4" fill="#20e8a0"/>
<rect x="172" y="700" width="4" height="4" fill="#20e8a0"/>
<rect x="172" y="708" width="4" height="4" fill="#107048"/>
<rect x="172" y="712" width="4" height="4" fill="#107048"/>
<rect x="176" y="704" width="4" height="4" fill="#20e8a0"/>
<rect x="176" y="708" width="4" height="4" fill="#20e8a0"/>
<rect x="168" y="728" width="4" height="4" fill="#20e8a0"/>
<rect x="168" y="732" width="4" height="4" fill="#107048"/>
<rect x="172" y="724" width="4" height="4" fill="#107048"/>
<rect x="172" y="728" width="4" height="4" fill="#20e8a0"/>
<rect x="172" y="732" width="4" height="4" fill="#20e8a0"/>
<rect x="172" y="736" width="4" height="4" fill="#107048"/>
<rect x="176" y="720" width="4" height="4" fill="#107048"/>
<rect x="176" y="728" width="4" height="4" fill="#107048"/>
<rect x="176" y="732" width="4" height="4" fill="#107048"/>
<rect x="176" y="736" width="4" height="4" fill="#107048"/>
<rect x="176" y="740" width="4" height="4" fill="#107048"/>
<rect x="180" y="720" width="4" height="4" fill="#20e8a0"/>
<rect x="180" y="724" width="4" height="4" fill="#20e8a0"/>
<rect x="180" y="728" width="4" height="4" fill="#20e8a0"/>
<rect x="180" y="732" width="4" height="4" fill="#107048"/>
<rect x="180" y="736" width="4" height="4" fill="#107048"/>
<rect x="180" y="740" width="4" height="4" fill="#107048"/>
<rect x="184" y="720" width="4" height="4" fill="#20e8a0"/>
<rect x="184" y="724" width="4" height="4" fill="#20e8a0"/>
<rect x="184" y="728" width="4" height="4" fill="#107048"/>
<rect x="184" y="736" width="4" height="4" fill="#20e8a0"/>
<rect x="184" y="740" width="4" height="4" fill="#20e8a0"/>
<rect x="188" y="724" width="4" height="4" fill="#107048"/>
<rect x="188" y="728" width="4" height="4" fill="#107048"/>
<rect x="188" y="732" width="4" height="4" fill="#20e8a0"/>
<rect x="188" y="736" width="4" height="4" fill="#107048"/>
<rect x="188" y="740" width="4" height="4" fill="#20e8a0"/>
<rect x="192" y="724" width="4" height="4" fill="#107048"/>
<rect x="192" y="728" width="4" height="4" fill="#20e8a0"/>
<rect x="192" y="732" width="4" height="4" fill="#107048"/>
<rect x="192" y="736" width="4" height="4" fill="#107048"/>
<rect x="196" y="732" width="4" height="4" fill="#107048"/>
<rect x="236" y="716" width="4" height="4" fill="#20e8a0"/>
<rect x="236" y="720" width="4" height="4" fill="#107048"/>
<rect x="236" y="724" width="4" height="4" fill="#20e8a0"/>
<rect x="240" y="716" width="4" height="4" fill="#20e8a0"/>
<rect x="240" y="720" width="4" height="4" fill="#f0c020"/>
<rect x="240" y="724" width="4" height="4" fill="#107048"/>
<rect x="244" y="712" width="4" height="4" fill="#107048"/>
<rect x="244" y="716" width="4" height="4" fill="#f0c020"/>
<rect x="244" y="720" width="4" height="4" fill="#f0c020"/>
<rect x="244" y="724" width="4" height="4" fill="#107048"/>
<rect x="248" y="712" width="4" height="4" fill="#20e8a0"/>
<rect x="248" y="716" width="4" height="4" fill="#f0c020"/>
<rect x="248" y="720" width="4" height="4" fill="#f0c020"/>
<rect x="248" y="724" width="4" height="4" fill="#20e8a0"/>
<rect x="252" y="716" width="4" height="4" fill="#20e8a0"/>
<rect x="252" y="720" width="4" height="4" fill="#107048"/>
<rect x="252" y="724" width="4" height="4" fill="#107048"/>
<rect x="256" y="720" width="4" height="4" fill="#107048"/>
<rect x="256" y="692" width="4" height="4" fill="#00b0e0"/>
<rect x="256" y="696" width="4" height="4" fill="#c8c8c8"/>
<rect x="260" y="692" width="4" height="4" fill="#c8c8c8"/>
<rect x="260" y="700" width="4" height="4" fill="#00b0e0"/>
<rect x="264" y="692" width="4" height="4" fill="#00b0e0"/>
<rect x="264" y="696" width="4" height="4" fill="#c8c8c8"/>
<rect x="268" y="692" width="4" height="4" fill="#c8c8c8"/>
<rect x="268" y="696" width="4" height="4" fill="#c8c8c8"/>
<rect x="268" y="700" width="4" height="4" fill="#00b0e0"/>
<rect x="272" y="692" width="4" height="4" fill="#c8c8c8"/>
<rect x="272" y="696" width="4" height="4" fill="#00b0e0"/>
<rect x="232" y="776" width="4" height="4" fill="#107048"/>
<rect x="232" y="780" width="4" height="4" fill="#107048"/>
<rect x="232" y="784" width="4" height="4" fill="#107048"/>
<rect x="236" y="772" width="4" height="4" fill="#107048"/>
<rect x="236" y="776" width="4" height="4" fill="#107048"/>
<rect x="236" y="780" width="4" height="4" fill="#107048"/>
<rect x="236" y="784" width="4" height="4" fill="#107048"/>
<rect x="236" y="788" width="4" height="4" fill="#107048"/>
<rect x="240" y="772" width="4" height="4" fill="#107048"/>
<rect x="240" y="776" width="4" height="4" fill="#107048"/>
<rect x="240" y="780" width="4" height="4" fill="#107048"/>
<rect x="240" y="784" width="4" height="4" fill="#107048"/>
<rect x="240" y="788" width="4" height="4" fill="#107048"/>
<rect x="244" y="772" width="4" height="4" fill="#107048"/>
<rect x="244" y="776" width="4" height="4" fill="#107048"/>
<rect x="244" y="780" width="4" height="4" fill="#107048"/>
<rect x="244" y="784" width="4" height="4" fill="#107048"/>
<rect x="244" y="788" width="4" height="4" fill="#107048"/>
<rect x="248" y="776" width="4" height="4" fill="#107048"/>
<rect x="248" y="780" width="4" height="4" fill="#107048"/>
<rect x="264" y="788" width="4" height="4" fill="#107048"/>
<rect x="356" y="644" width="4" height="4" fill="#20e8a0"/>
<rect x="360" y="640" width="4" height="4" fill="#107048"/>
<rect x="360" y="644" width="4" height="4" fill="#20e8a0"/>
<rect x="360" y="648" width="4" height="4" fill="#107048"/>
<rect x="348" y="656" width="4" height="4" fill="#20e8a0"/>
<rect x="348" y="660" width="4" height="4" fill="#20e8a0"/>
<rect x="348" y="664" width="4" height="4" fill="#20e8a0"/>
<rect x="352" y="656" width="4" height="4" fill="#20e8a0"/>
<rect x="352" y="660" width="4" height="4" fill="#20e8a0"/>
<rect x="352" y="664" width="4" height="4" fill="#20e8a0"/>
<rect x="372" y="660" width="4" height="4" fill="#107048"/>
<rect x="376" y="660" width="4" height="4" fill="#107048"/>
<rect x="376" y="664" width="4" height="4" fill="#20e8a0"/>
<rect x="380" y="660" width="4" height="4" fill="#107048"/>
<rect x="380" y="664" width="4" height="4" fill="#107048"/>
<rect x="336" y="688" width="4" height="4" fill="#107048"/>
<rect x="336" y="692" width="4" height="4" fill="#107048"/>
<rect x="336" y="696" width="4" height="4" fill="#20e8a0"/>
<rect x="336" y="700" width="4" height="4" fill="#20e8a0"/>
<rect x="340" y="688" width="4" height="4" fill="#107048"/>
<rect x="340" y="692" width="4" height="4" fill="#107048"/>
<rect x="340" y="696" width="4" height="4" fill="#20e8a0"/>
<rect x="340" y="700" width="4" height="4" fill="#107048"/>
<rect x="344" y="684" width="4" height="4" fill="#107048"/>
<rect x="344" y="692" width="4" height="4" fill="#20e8a0"/>
<rect x="344" y="696" width="4" height="4" fill="#20e8a0"/>
<rect x="344" y="700" width="4" height="4" fill="#20e8a0"/>
<rect x="344" y="704" width="4" height="4" fill="#107048"/>
<rect x="348" y="684" width="4" height="4" fill="#20e8a0"/>
<rect x="348" y="688" width="4" height="4" fill="#20e8a0"/>
<rect x="348" y="692" width="4" height="4" fill="#20e8a0"/>
<rect x="348" y="696" width="4" height="4" fill="#107048"/>
<rect x="348" y="700" width="4" height="4" fill="#107048"/>
<rect x="348" y="704" width="4" height="4" fill="#20e8a0"/>
<rect x="352" y="688" width="4" height="4" fill="#20e8a0"/>
<rect x="352" y="692" width="4" height="4" fill="#20e8a0"/>
<rect x="352" y="696" width="4" height="4" fill="#107048"/>
<rect x="352" y="700" width="4" height="4" fill="#107048"/>
<rect x="356" y="692" width="4" height="4" fill="#20e8a0"/>
<rect x="356" y="696" width="4" height="4" fill="#107048"/>
<rect x="288" y="696" width="4" height="4" fill="#20e8a0"/>
<rect x="292" y="692" width="4" height="4" fill="#20e8a0"/>
<rect x="292" y="696" width="4" height="4" fill="#20e8a0"/>
<rect x="296" y="696" width="4" height="4" fill="#20e8a0"/>
<rect x="316" y="696" width="4" height="4" fill="#00b0e0"/>
<rect x="320" y="696" width="4" height="4" fill="#20e8a0"/>
<rect x="276" y="708" width="4" height="4" fill="#20e8a0"/>
<rect x="280" y="704" width="4" height="4" fill="#20e8a0"/>
<rect x="280" y="708" width="4" height="4" fill="#20e8a0"/>
<rect x="284" y="704" width="4" height="4" fill="#20e8a0"/>
<rect x="284" y="708" width="4" height="4" fill="#20e8a0"/>
<rect x="288" y="708" width="4" height="4" fill="#20e8a0"/>
<rect x="276" y="716" width="4" height="4" fill="#20e8a0"/>
<rect x="276" y="744" width="4" height="4" fill="#20e8a0"/>
<rect x="276" y="748" width="4" height="4" fill="#107048"/>
<rect x="280" y="736" width="4" height="4" fill="#107048"/>
<rect x="280" y="740" width="4" height="4" fill="#20e8a0"/>
<rect x="280" y="744" width="4" height="4" fill="#20e8a0"/>
<rect x="280" y="748" width="4" height="4" fill="#20e8a0"/>
<rect x="280" y="752" width="4" height="4" fill="#107048"/>
<rect x="280" y="756" width="4" height="4" fill="#20e8a0"/>
<rect x="284" y="736" width="4" height="4" fill="#107048"/>
<rect x="284" y="740" width="4" height="4" fill="#20e8a0"/>
<rect x="284" y="744" width="4" height="4" fill="#c8c8c8"/>
<rect x="284" y="748" width="4" height="4" fill="#c8c8c8"/>
<rect x="284" y="756" width="4" height="4" fill="#20e8a0"/>
<rect x="288" y="736" width="4" height="4" fill="#20e8a0"/>
<rect x="288" y="740" width="4" height="4" fill="#c8c8c8"/>
<rect x="288" y="744" width="4" height="4" fill="#c8c8c8"/>
<rect x="288" y="752" width="4" height="4" fill="#c8c8c8"/>
<rect x="292" y="740" width="4" height="4" fill="#20e8a0"/>
<rect x="292" y="744" width="4" height="4" fill="#c8c8c8"/>
<rect x="292" y="748" width="4" height="4" fill="#c8c8c8"/>
<rect x="292" y="752" width="4" height="4" fill="#107048"/>
<rect x="296" y="740" width="4" height="4" fill="#107048"/>
<rect x="296" y="744" width="4" height="4" fill="#20e8a0"/>
<rect x="296" y="748" width="4" height="4" fill="#20e8a0"/>
<rect x="296" y="752" width="4" height="4" fill="#20e8a0"/>
<rect x="300" y="776" width="4" height="4" fill="#107048"/>
<rect x="300" y="780" width="4" height="4" fill="#107048"/>
<rect x="300" y="784" width="4" height="4" fill="#107048"/>
<rect x="304" y="772" width="4" height="4" fill="#107048"/>
<rect x="304" y="776" width="4" height="4" fill="#107048"/>
<rect x="304" y="780" width="4" height="4" fill="#c8c8c8"/>
<rect x="304" y="784" width="4" height="4" fill="#107048"/>
<rect x="304" y="788" width="4" height="4" fill="#107048"/>
<rect x="308" y="772" width="4" height="4" fill="#107048"/>
<rect x="308" y="776" width="4" height="4" fill="#c8c8c8"/>
<rect x="308" y="780" width="4" height="4" fill="#c8c8c8"/>
<rect x="308" y="784" width="4" height="4" fill="#c8c8c8"/>
<rect x="308" y="788" width="4" height="4" fill="#107048"/>
<rect x="312" y="772" width="4" height="4" fill="#107048"/>
<rect x="312" y="776" width="4" height="4" fill="#107048"/>
<rect x="312" y="780" width="4" height="4" fill="#c8c8c8"/>
<rect x="312" y="784" width="4" height="4" fill="#c8c8c8"/>
<rect x="312" y="788" width="4" height="4" fill="#107048"/>
<rect x="316" y="776" width="4" height="4" fill="#107048"/>
<rect x="316" y="780" width="4" height="4" fill="#107048"/>
<rect x="316" y="784" width="4" height="4" fill="#107048"/>
<rect x="320" y="780" width="4" height="4" fill="#107048"/>
<rect x="324" y="776" width="4" height="4" fill="#20e8a0"/>
<rect x="328" y="772" width="4" height="4" fill="#20e8a0"/>
<rect x="328" y="776" width="4" height="4" fill="#107048"/>
<rect x="328" y="780" width="4" height="4" fill="#20e8a0"/>
<rect x="332" y="772" width="4" height="4" fill="#20e8a0"/>
<rect x="332" y="776" width="4" height="4" fill="#107048"/>
<rect x="332" y="780" width="4" height="4" fill="#20e8a0"/>
<rect x="360" y="764" width="4" height="4" fill="#107048"/>
<g fill="none" stroke="#f0f0f0" stroke-width="1" shape-rendering="auto">
<circle cx="273.5" cy="630.3" r="27.5"/>
<circle cx="273.5" cy="630.3" r="55.0"/>
<circle cx="273.5" cy="630.3" r="82.5"/>
<circle cx="273.5" cy="630.3" r="110.0"/>
<circle cx="273.5" cy="630.3" r="137.5"/>
<circle cx="273.5" cy="630.3" r="165.0"/>
<circle cx="273.5" cy="630.3" r="192.5"/>
<circle cx="273.5" cy="630.3" r="220.0"/>
<line x1="301.0" y1="630.3" x2="493.5" y2="630.3"/>
<line x1="292.9" y1="649.7" x2="429.1" y2="785.9"/>
<line x1="273.5" y1="657.8" x2="273.5" y2="850.3"/>
<line x1="254.1" y1="649.7" x2="117.9" y2="785.9"/>
<line x1="246.0" y1="630.3" x2="53.5" y2="630.3"/>
<line x1="254.1" y1="610.9" x2="117.9" y2="474.7"/>
<line x1="273.5" y1="602.8" x2="273.5" y2="410.3"/>
<line x1="292.9" y1="610.9" x2="429.1" y2="474.7"/>
</g></g>
<g shape-rendering="auto">
<circle cx="242" cy="464.5" r="7" fill="none" stroke="#e09000" stroke-width="1"/>
<text x="242" y="479" font-family="Liberation Sans" font-size="6" fill="#e09000" text-anchor="middle">whoi-met</text>
<circle cx="271" cy="617" r="7" fill="none" stroke="#e09000" stroke-width="1"/>
<text x="273" y="631" font-family="Liberation Sans" font-size="6" fill="#e09000" text-anchor="middle">bc-125-6</text>
<line x1="268" y1="463" x2="279" y2="463" stroke="#f0e68c"/><line x1="273.5" y1="458" x2="273.5" y2="469" stroke="#f0e68c"/>
<text x="44" y="464" font-family="Liberation Sans" font-size="7" fill="#f0e68c">10</text>
<text x="270" y="808" font-family="Liberation Sans" font-size="7" fill="#f0e68c" text-anchor="middle">-125</text>
</g>
<line x1="4" y1="426.5" x2="574" y2="426.5" stroke="#fff" stroke-width="1" stroke-dasharray="1 1"/>
<line x1="4.5" y1="426" x2="4.5" y2="872" stroke="#fff" stroke-width="1" stroke-dasharray="1 1"/>
<line x1="573.5" y1="426" x2="573.5" y2="872" stroke="#fff" stroke-width="1" stroke-dasharray="1 1"/>
<line x1="4" y1="871.5" x2="574" y2="871.5" stroke="#fff" stroke-width="1" stroke-dasharray="1 1"/>
<text x="14.8" y="448" font-family="Liberation Sans" font-size="26" fill="#ffff00" font-weight="normal" textLength="244.7" lengthAdjust="spacingAndGlyphs" style="white-space:pre" filter="url(#crispT)">22−aug−1997,11:05:00</text>
<text x="272.9" y="448" font-family="Liberation Sans" font-size="26" fill="#fff" font-weight="normal" textLength="73.2" lengthAdjust="spacingAndGlyphs" style="white-space:pre" filter="url(#crispT)">maxdz</text>
<text x="350.3" y="448" font-family="Liberation Sans" font-size="26" fill="#fff" font-weight="normal" textLength="44.8" lengthAdjust="spacingAndGlyphs" style="white-space:pre" filter="url(#crispT)">plot.</text>
<text x="408.5" y="448" font-family="Liberation Sans" font-size="26" fill="#fff" font-weight="normal" textLength="73.2" lengthAdjust="spacingAndGlyphs" style="white-space:pre" filter="url(#crispT)">maxdz</text>
<text x="485.9" y="448" font-family="Liberation Sans" font-size="26" fill="#fff" font-weight="normal" textLength="44.8" lengthAdjust="spacingAndGlyphs" style="white-space:pre" filter="url(#crispT)">plot.</text>
<text x="380.5" y="861" font-family="Liberation Sans" font-size="27.5" fill="#fff" font-weight="normal" textLength="182.0" lengthAdjust="spacingAndGlyphs" style="white-space:pre" filter="url(#crispT)">Alt: 0.50 km MSL</text>
<line x1="488" y1="458.5" x2="573" y2="458.5" stroke="#a0a0a0" stroke-width="1" />
<line x1="488" y1="639.5" x2="573" y2="639.5" stroke="#a0a0a0" stroke-width="1" />
<line x1="488" y1="820.5" x2="573" y2="820.5" stroke="#a0a0a0" stroke-width="1" />
<rect x="489" y="485" width="10" height="8.2" fill="#ff8080" />
<rect x="489" y="493" width="10" height="8.2" fill="#ff9090" />
<rect x="489" y="501" width="10" height="8.2" fill="#ffa860" />
<rect x="489" y="509" width="10" height="8.2" fill="#fcd8a8" />
<rect x="489" y="517" width="10" height="8.2" fill="#ffd000" />
<rect x="489" y="525" width="10" height="8.2" fill="#f0b428" />
<rect x="489" y="533" width="10" height="8.2" fill="#d8922c" />
<rect x="489" y="541" width="10" height="8.2" fill="#c8c8c8" />
<rect x="489" y="549" width="10" height="8.2" fill="#0c7048" />
<rect x="489" y="557" width="10" height="8.2" fill="#00e090" />
<rect x="489" y="565" width="10" height="8.2" fill="#00b0e0" />
<rect x="489" y="573" width="10" height="8.2" fill="#0070e0" />
<rect x="489" y="581" width="10" height="8.2" fill="#1040e0" />
<rect x="489" y="589" width="10" height="8.2" fill="#4020e0" />
<rect x="489" y="597" width="10" height="8.2" fill="#6010f0" />
<rect x="489" y="605" width="10" height="8.2" fill="#8000ff" />
<rect x="489" y="666" width="10" height="8.2" fill="#ff8080" />
<rect x="489" y="674" width="10" height="8.2" fill="#ff9090" />
<rect x="489" y="682" width="10" height="8.2" fill="#ffa860" />
<rect x="489" y="690" width="10" height="8.2" fill="#fcd8a8" />
<rect x="489" y="698" width="10" height="8.2" fill="#ffd000" />
<rect x="489" y="706" width="10" height="8.2" fill="#f0b428" />
<rect x="489" y="714" width="10" height="8.2" fill="#d8922c" />
<rect x="489" y="722" width="10" height="8.2" fill="#c8c8c8" />
<rect x="489" y="730" width="10" height="8.2" fill="#0c7048" />
<rect x="489" y="738" width="10" height="8.2" fill="#00e090" />
<rect x="489" y="746" width="10" height="8.2" fill="#00b0e0" />
<rect x="489" y="754" width="10" height="8.2" fill="#0070e0" />
<rect x="489" y="762" width="10" height="8.2" fill="#1040e0" />
<rect x="489" y="770" width="10" height="8.2" fill="#4020e0" />
<rect x="489" y="778" width="10" height="8.2" fill="#6010f0" />
<rect x="489" y="786" width="10" height="8.2" fill="#8000ff" />
<text x="490.1" y="471" font-family="Liberation Sans" font-size="17" fill="#fff" font-weight="normal" textLength="52.7" lengthAdjust="spacingAndGlyphs" style="white-space:pre" filter="url(#crisp)">maxdz</text>
<text x="490.1" y="652" font-family="Liberation Sans" font-size="17" fill="#fff" font-weight="normal" textLength="52.7" lengthAdjust="spacingAndGlyphs" style="white-space:pre" filter="url(#crisp)">maxdz</text>
<text x="505.2" y="493" font-family="Liberation Sans" font-size="18.5" fill="#fff" font-weight="normal" textLength="34.3" lengthAdjust="spacingAndGlyphs" style="white-space:pre" filter="url(#crisp)">65.0</text>
<text x="505.2" y="517" font-family="Liberation Sans" font-size="18.5" fill="#fff" font-weight="normal" textLength="34.3" lengthAdjust="spacingAndGlyphs" style="white-space:pre" filter="url(#crisp)">50.0</text>
<text x="505.2" y="541" font-family="Liberation Sans" font-size="18.5" fill="#fff" font-weight="normal" textLength="34.3" lengthAdjust="spacingAndGlyphs" style="white-space:pre" filter="url(#crisp)">35.0</text>
<text x="505.2" y="565" font-family="Liberation Sans" font-size="18.5" fill="#fff" font-weight="normal" textLength="34.3" lengthAdjust="spacingAndGlyphs" style="white-space:pre" filter="url(#crisp)">20.0</text>
<text x="505.2" y="589" font-family="Liberation Sans" font-size="18.5" fill="#fff" font-weight="normal" textLength="24.4" lengthAdjust="spacingAndGlyphs" style="white-space:pre" filter="url(#crisp)">5.0</text>
<text x="505.2" y="613" font-family="Liberation Sans" font-size="18.5" fill="#fff" font-weight="normal" textLength="45.6" lengthAdjust="spacingAndGlyphs" style="white-space:pre" filter="url(#crisp)">−10.0</text>
<text x="505.2" y="674" font-family="Liberation Sans" font-size="18.5" fill="#fff" font-weight="normal" textLength="34.3" lengthAdjust="spacingAndGlyphs" style="white-space:pre" filter="url(#crisp)">65.0</text>
<text x="505.2" y="698" font-family="Liberation Sans" font-size="18.5" fill="#fff" font-weight="normal" textLength="34.3" lengthAdjust="spacingAndGlyphs" style="white-space:pre" filter="url(#crisp)">50.0</text>
<text x="505.2" y="722" font-family="Liberation Sans" font-size="18.5" fill="#fff" font-weight="normal" textLength="34.3" lengthAdjust="spacingAndGlyphs" style="white-space:pre" filter="url(#crisp)">35.0</text>
<text x="505.2" y="746" font-family="Liberation Sans" font-size="18.5" fill="#fff" font-weight="normal" textLength="34.3" lengthAdjust="spacingAndGlyphs" style="white-space:pre" filter="url(#crisp)">20.0</text>
<text x="505.2" y="770" font-family="Liberation Sans" font-size="18.5" fill="#fff" font-weight="normal" textLength="24.4" lengthAdjust="spacingAndGlyphs" style="white-space:pre" filter="url(#crisp)">5.0</text>
<text x="505.2" y="794" font-family="Liberation Sans" font-size="18.5" fill="#fff" font-weight="normal" textLength="45.6" lengthAdjust="spacingAndGlyphs" style="white-space:pre" filter="url(#crisp)">−10.0</text>
<rect x="10" y="821" width="46" height="48" fill="#191970"/><rect x="10.5" y="821.5" width="45" height="47" fill="none" stroke="#a8a8a8" stroke-width="1"/><g transform="translate(10,821) scale(1.0,1.0)" fill="none" stroke="#ffff00" stroke-width="2.2" stroke-linejoin="round" shape-rendering="auto"><path d="M6.9,12.2 C9,9.5 13,7.3 17,7.5 C21,8 25,11.5 29,12 C33,12.3 36,11 37.4,9.5 L36.4,11.7 C32,16 26,19 23,21 C19,24 15,28 12,32 C10,35 8,37 6.1,39.5 C9,37.5 13,36.5 18,36.6 C22,37 25,40 29,40.2 C33,40.3 36.5,38.5 38.6,35.4"/></g>
<rect x="57" y="821" width="46" height="48" fill="#707070"/><rect x="57.5" y="821.5" width="45" height="47" fill="none" stroke="#a8a8a8" stroke-width="1"/><g transform="translate(57,821)" shape-rendering="auto"><text filter="url(#crisp)" x="3" y="14" font-family="Liberation Sans" font-weight="bold" font-size="14" fill="#e0e0e0" textLength="31" lengthAdjust="spacingAndGlyphs">GOES</text><path d="M3,18 L3,46 L24,46 C24,34 18,22 7,18 Z" fill="url(#pst_e0e0e0)" shape-rendering="crispEdges"/><circle cx="17" cy="31" r="3.5" fill="#e0e0e0"/><rect x="3" y="38" width="8" height="8" fill="#e0e0e0"/><rect x="3" y="18" width="4" height="4" fill="#e0e0e0"/><path d="M20,28 L43,26 M24,37 L43,26" stroke="#e0e0e0" stroke-width="1" stroke-dasharray="1 2" fill="none"/><path d="M43,23 L46,26 L43,29 L40,26 Z" fill="#e0e0e0"/><text filter="url(#crisp)" x="25" y="45" font-family="Liberation Sans" font-size="10" fill="#e0e0e0" textLength="15" lengthAdjust="spacingAndGlyphs">. IR</text></g>
<rect x="104" y="821" width="46" height="48" fill="#191970"/><rect x="104.5" y="821.5" width="45" height="47" fill="none" stroke="#a8a8a8" stroke-width="1"/><g transform="translate(104,821)" shape-rendering="auto"><path d="M5,9 C7,15 10,19 13.5,21 C18,25 22,28 27.5,29.5" fill="none" stroke="#ffff00" stroke-width="2.0"/><path d="M12,21 L15.5,21 L16,31 L17,38 L9,38 L11,31 Z" fill="#ffff00"/><rect x="12.5" y="18.5" width="4" height="5" fill="none" stroke="#ffff00" stroke-width="1"/><text filter="url(#crisp)" x="36.5" y="19.0" font-family="Liberation Sans" font-size="13" fill="#ffff00" text-anchor="middle" textLength="6.5" lengthAdjust="spacingAndGlyphs">S</text><text filter="url(#crisp)" x="36.5" y="29.8" font-family="Liberation Sans" font-size="13" fill="#ffff00" text-anchor="middle" textLength="6.5" lengthAdjust="spacingAndGlyphs">U</text><text filter="url(#crisp)" x="36.5" y="40.6" font-family="Liberation Sans" font-size="13" fill="#ffff00" text-anchor="middle" textLength="6.5" lengthAdjust="spacingAndGlyphs">R</text></g>
<rect x="151" y="821" width="46" height="48" fill="#191970"/><rect x="151.5" y="821.5" width="45" height="47" fill="none" stroke="#a8a8a8" stroke-width="1"/><g transform="translate(151,821)"><rect x="5.5" y="5.5" width="35" height="37" fill="none" stroke="#ffff00" stroke-width="1.2"/><line x1="14.25" y1="5.5" x2="14.25" y2="42.5" stroke="#ffff00" stroke-width="1"/><line x1="5.5" y1="14.75" x2="40.5" y2="14.75" stroke="#ffff00" stroke-width="1"/><line x1="23.0" y1="5.5" x2="23.0" y2="42.5" stroke="#ffff00" stroke-width="1"/><line x1="5.5" y1="24.0" x2="40.5" y2="24.0" stroke="#ffff00" stroke-width="1"/><line x1="31.75" y1="5.5" x2="31.75" y2="42.5" stroke="#ffff00" stroke-width="1"/><line x1="5.5" y1="33.25" x2="40.5" y2="33.25" stroke="#ffff00" stroke-width="1"/><g transform="translate(8,1)" shape-rendering="auto"><path d="M5,9 C7,15 10,19 13.5,21 C18,25 22,28 27.5,29.5" fill="none" stroke="#ffff00" stroke-width="1.8"/><path d="M12,21 L15.5,21 L16,31 L17,38 L9,38 L11,31 Z" fill="#ffff00"/><rect x="12.5" y="18.5" width="4" height="5" fill="none" stroke="#ffff00" stroke-width="1"/></g></g>
<rect x="198" y="821" width="14" height="48" fill="#191970"/><rect x="198.5" y="821.5" width="13" height="47" fill="none" stroke="#a8a8a8" stroke-width="1"/><g transform="translate(198,821)" shape-rendering="auto"><text filter="url(#crisp)" x="7.0" y="9.333333333333334" font-family="Liberation Sans" font-size="6.5" fill="#ffff00" text-anchor="middle">B</text><text filter="url(#crisp)" x="7.0" y="16.0" font-family="Liberation Sans" font-size="6.5" fill="#ffff00" text-anchor="middle">O</text><text filter="url(#crisp)" x="7.0" y="22.666666666666668" font-family="Liberation Sans" font-size="6.5" fill="#ffff00" text-anchor="middle">U</text><text filter="url(#crisp)" x="7.0" y="29.333333333333332" font-family="Liberation Sans" font-size="6.5" fill="#ffff00" text-anchor="middle">N</text><text filter="url(#crisp)" x="7.0" y="36.0" font-family="Liberation Sans" font-size="6.5" fill="#ffff00" text-anchor="middle">D</text><text filter="url(#crisp)" x="7.0" y="42.666666666666664" font-family="Liberation Sans" font-size="6.5" fill="#ffff00" text-anchor="middle">S</text></g>
<rect x="213" y="845" width="22" height="24" fill="#191970"/><rect x="213.5" y="845.5" width="21" height="23" fill="none" stroke="#a8a8a8" stroke-width="1"/><g transform="translate(213,845)"><rect x="4.5" y="5.5" width="13" height="13" fill="none" stroke="#ffff00" stroke-width="1.2"/><line x1="8.833333333333332" y1="5.5" x2="8.833333333333332" y2="18.5" stroke="#ffff00" stroke-width="1"/><line x1="4.5" y1="9.833333333333332" x2="17.5" y2="9.833333333333332" stroke="#ffff00" stroke-width="1"/><line x1="13.166666666666666" y1="5.5" x2="13.166666666666666" y2="18.5" stroke="#ffff00" stroke-width="1"/><line x1="4.5" y1="14.166666666666666" x2="17.5" y2="14.166666666666666" stroke="#ffff00" stroke-width="1"/></g>
<rect x="236" y="821" width="22" height="48" fill="#191970"/><rect x="236.5" y="821.5" width="21" height="47" fill="none" stroke="#a8a8a8" stroke-width="1"/><g transform="translate(236,821)" shape-rendering="auto"><path d="M3,5 L7,4 L6,7 L4,11 L3,10 Z M9,5 L12,4 L13,7 L15,9 L17,11 L15,13 L14,15 L13,12 L11,9 L9,8 Z M15,5 L18,4 L17,7 Z M3,12 L6,12 L6,15 L4,14 Z" fill="#ffff00"/><text filter="url(#crispS)" x="10.2" y="25.5" font-family="Liberation Sans" font-size="9.5" fill="#ffff00" text-anchor="middle">M</text><text filter="url(#crispS)" x="10.2" y="33.7" font-family="Liberation Sans" font-size="9.5" fill="#ffff00" text-anchor="middle">A</text><text filter="url(#crispS)" x="10.2" y="41.9" font-family="Liberation Sans" font-size="9.5" fill="#ffff00" text-anchor="middle">P</text></g>
<rect x="258" y="821" width="22" height="48" fill="#191970"/><rect x="258.5" y="821.5" width="21" height="47" fill="none" stroke="#a8a8a8" stroke-width="1"/><g transform="translate(258,821)" fill="none" stroke="#ffff00" stroke-width="1.2" shape-rendering="auto"><circle cx="10.5" cy="16" r="7.5"/><circle cx="10.5" cy="16" r="4.5"/><circle cx="10.5" cy="16" r="2" fill="#ffff00" fill-opacity="0.3"/><line x1="12.5" y1="16.0" x2="18.5" y2="16.0"/><line x1="11.914213562373096" y1="17.414213562373096" x2="16.15685424949238" y2="21.65685424949238"/><line x1="10.5" y1="18.0" x2="10.5" y2="24.0"/><line x1="9.085786437626904" y1="17.414213562373096" x2="4.84314575050762" y2="21.65685424949238"/><line x1="8.5" y1="16.0" x2="2.5" y2="16.0"/><line x1="9.085786437626904" y1="14.585786437626904" x2="4.8431457505076185" y2="10.34314575050762"/><line x1="10.5" y1="14.0" x2="10.499999999999998" y2="8.0"/><line x1="11.914213562373094" y1="14.585786437626904" x2="16.15685424949238" y2="10.343145750507619"/></g>
<rect x="280" y="845" width="22" height="24" fill="#191970"/><rect x="280.5" y="845.5" width="21" height="23" fill="none" stroke="#a8a8a8" stroke-width="1"/><circle cx="291.0" cy="858.0" r="7" fill="none" stroke="#ffff00" stroke-width="1.2" shape-rendering="auto"/>
<rect x="303" y="821" width="46" height="48" fill="#707070"/><rect x="303.5" y="821.5" width="45" height="47" fill="none" stroke="#a8a8a8" stroke-width="1"/><g transform="translate(303,821)" shape-rendering="auto" stroke="#e0e0e0" fill="none" stroke-width="1.3"><path d="M5.5,32.5 L40.5,32.5 L37.5,38.5 L8.5,38.5 Z"/><path d="M7,32.5 L7,24.5 L11,24.5 L13,32.5"/><circle cx="22.6" cy="22.5" r="3"/><line x1="22.6" y1="25.5" x2="22.6" y2="32.5"/><line x1="34.5" y1="15.5" x2="34.5" y2="32.5"/><path d="M3,44 L3,38 L5,36.5 L8,38.5 L11,36.5 L14,38.5 L17,36.5 L20,38.5 L23,36.5 L26,38.5 L29,36.5 L32,38.5 L35,36.5 L38,38.5 L41,36.5 L43,38 L43,44 Z" fill="#e0e0e0" stroke="none"/></g>
<rect x="572" y="2" width="562" height="385" fill="#000" />
<line x1="622.5" y1="29.5" x2="622.5" y2="311.5" stroke="#fff" stroke-width="1" />
<line x1="622.5" y1="311.5" x2="1048.5" y2="311.5" stroke="#fff" stroke-width="1" />
<line x1="622.5" y1="29.5" x2="1048.5" y2="29.5" stroke="#fff" stroke-width="1" />
<line x1="1048.5" y1="29.5" x2="1048.5" y2="311.5" stroke="#fff" stroke-width="1" />
<line x1="622.5" y1="283.5" x2="633.5" y2="283.5" stroke="#fff" stroke-width="1" />
<line x1="1037.5" y1="283.5" x2="1048.5" y2="283.5" stroke="#fff" stroke-width="1" />
<line x1="622.5" y1="255.5" x2="633.5" y2="255.5" stroke="#fff" stroke-width="1" />
<line x1="1037.5" y1="255.5" x2="1048.5" y2="255.5" stroke="#fff" stroke-width="1" />
<line x1="622.5" y1="227.5" x2="633.5" y2="227.5" stroke="#fff" stroke-width="1" />
<line x1="1037.5" y1="227.5" x2="1048.5" y2="227.5" stroke="#fff" stroke-width="1" />
<line x1="622.5" y1="199.5" x2="633.5" y2="199.5" stroke="#fff" stroke-width="1" />
<line x1="1037.5" y1="199.5" x2="1048.5" y2="199.5" stroke="#fff" stroke-width="1" />
<line x1="622.5" y1="171.5" x2="633.5" y2="171.5" stroke="#fff" stroke-width="1" />
<line x1="1037.5" y1="171.5" x2="1048.5" y2="171.5" stroke="#fff" stroke-width="1" />
<line x1="622.5" y1="142.5" x2="633.5" y2="142.5" stroke="#fff" stroke-width="1" />
<line x1="1037.5" y1="142.5" x2="1048.5" y2="142.5" stroke="#fff" stroke-width="1" />
<line x1="622.5" y1="114.5" x2="633.5" y2="114.5" stroke="#fff" stroke-width="1" />
<line x1="1037.5" y1="114.5" x2="1048.5" y2="114.5" stroke="#fff" stroke-width="1" />
<line x1="622.5" y1="86.5" x2="633.5" y2="86.5" stroke="#fff" stroke-width="1" />
<line x1="1037.5" y1="86.5" x2="1048.5" y2="86.5" stroke="#fff" stroke-width="1" />
<line x1="622.5" y1="58.5" x2="633.5" y2="58.5" stroke="#fff" stroke-width="1" />
<line x1="1037.5" y1="58.5" x2="1048.5" y2="58.5" stroke="#fff" stroke-width="1" />
<line x1="676.5" y1="304.5" x2="676.5" y2="311.5" stroke="#fff" stroke-width="1" />
<line x1="676.5" y1="29.5" x2="676.5" y2="36.5" stroke="#fff" stroke-width="1" />
<line x1="729.5" y1="304.5" x2="729.5" y2="311.5" stroke="#fff" stroke-width="1" />
<line x1="729.5" y1="29.5" x2="729.5" y2="36.5" stroke="#fff" stroke-width="1" />
<line x1="782.5" y1="304.5" x2="782.5" y2="311.5" stroke="#fff" stroke-width="1" />
<line x1="782.5" y1="29.5" x2="782.5" y2="36.5" stroke="#fff" stroke-width="1" />
<line x1="835.5" y1="304.5" x2="835.5" y2="311.5" stroke="#fff" stroke-width="1" />
<line x1="835.5" y1="29.5" x2="835.5" y2="36.5" stroke="#fff" stroke-width="1" />
<line x1="889.5" y1="304.5" x2="889.5" y2="311.5" stroke="#fff" stroke-width="1" />
<line x1="889.5" y1="29.5" x2="889.5" y2="36.5" stroke="#fff" stroke-width="1" />
<line x1="942.5" y1="304.5" x2="942.5" y2="311.5" stroke="#fff" stroke-width="1" />
<line x1="942.5" y1="29.5" x2="942.5" y2="36.5" stroke="#fff" stroke-width="1" />
<line x1="995.5" y1="304.5" x2="995.5" y2="311.5" stroke="#fff" stroke-width="1" />
<line x1="995.5" y1="29.5" x2="995.5" y2="36.5" stroke="#fff" stroke-width="1" />
<text x="619.5" y="312" font-family="Liberation Sans" font-size="10" fill="#fff" text-anchor="end" font-weight="normal" style="white-space:pre" filter="url(#crisp)" >0</text>
<text x="619.5" y="255" font-family="Liberation Sans" font-size="10" fill="#fff" text-anchor="end" font-weight="normal" style="white-space:pre" filter="url(#crisp)" >4</text>
<text x="619.5" y="199" font-family="Liberation Sans" font-size="10" fill="#fff" text-anchor="end" font-weight="normal" style="white-space:pre" filter="url(#crisp)" >8</text>
<text x="619.5" y="142" font-family="Liberation Sans" font-size="10" fill="#fff" text-anchor="end" font-weight="normal" style="white-space:pre" filter="url(#crisp)" >12</text>
<text x="619.5" y="86" font-family="Liberation Sans" font-size="10" fill="#fff" text-anchor="end" font-weight="normal" style="white-space:pre" filter="url(#crisp)" >16</text>
<text x="619.5" y="30" font-family="Liberation Sans" font-size="10" fill="#fff" text-anchor="end" font-weight="normal" style="white-space:pre" filter="url(#crisp)" >20</text>
<text x="622.5" y="322.0" font-family="Liberation Sans" font-size="10" fill="#fff" text-anchor="middle" font-weight="normal" style="white-space:pre" filter="url(#crisp)" >0.0</text>
<text x="728.96" y="322.0" font-family="Liberation Sans" font-size="10" fill="#fff" text-anchor="middle" font-weight="normal" style="white-space:pre" filter="url(#crisp)" >10.2</text>
<text x="835.42" y="322.0" font-family="Liberation Sans" font-size="10" fill="#fff" text-anchor="middle" font-weight="normal" style="white-space:pre" filter="url(#crisp)" >20.4</text>
<text x="941.88" y="322.0" font-family="Liberation Sans" font-size="10" fill="#fff" text-anchor="middle" font-weight="normal" style="white-space:pre" filter="url(#crisp)" >30.6</text>
<text x="1049.0" y="322.0" font-family="Liberation Sans" font-size="10" fill="#fff" text-anchor="end" font-weight="normal" style="white-space:pre" filter="url(#crisp)" >40</text>
<text x="802.5" y="331.0" font-family="Liberation Sans" font-size="10" fill="#fff" font-weight="normal" textLength="67.0" lengthAdjust="spacingAndGlyphs" style="white-space:pre" filter="url(#crispS)">Distance in km</text>
<text transform="translate(604,168) rotate(-90)" font-family="Liberation Serif" font-size="13" fill="#fff" text-anchor="middle" font-weight="normal" textLength="94" lengthAdjust="spacingAndGlyphs" filter="url(#crispS)">km above MSL</text>
<line x1="1048" y1="28.5" x2="1133" y2="28.5" stroke="#a0a0a0" stroke-width="1" />
<line x1="1048" y1="335.5" x2="1133" y2="335.5" stroke="#a0a0a0" stroke-width="1" />
<line x1="572" y1="2.5" x2="1134" y2="2.5" stroke="#fff" stroke-width="1" stroke-dasharray="1 1"/>
<line x1="1132.5" y1="2" x2="1132.5" y2="386" stroke="#fff" stroke-width="1" stroke-dasharray="1 1"/>
<line x1="572.5" y1="2" x2="572.5" y2="386" stroke="#fff" stroke-width="1" stroke-dasharray="1 1"/>
<line x1="572" y1="386.5" x2="1134" y2="386.5" stroke="#fff" stroke-width="1" stroke-dasharray="1 1"/>
<rect x="578" y="336" width="46" height="48" fill="#191970"/><rect x="578.5" y="336.5" width="45" height="47" fill="none" stroke="#a8a8a8" stroke-width="1"/><g transform="translate(578,336) scale(1.0,1.0)" fill="none" stroke="#ffff00" stroke-width="2.2" stroke-linejoin="round" shape-rendering="auto"><path d="M6.9,12.2 C9,9.5 13,7.3 17,7.5 C21,8 25,11.5 29,12 C33,12.3 36,11 37.4,9.5 L36.4,11.7 C32,16 26,19 23,21 C19,24 15,28 12,32 C10,35 8,37 6.1,39.5 C9,37.5 13,36.5 18,36.6 C22,37 25,40 29,40.2 C33,40.3 36.5,38.5 38.6,35.4"/></g>
<rect x="624" y="336" width="46" height="48" fill="#191970"/><rect x="624.5" y="336.5" width="45" height="47" fill="none" stroke="#a8a8a8" stroke-width="1"/><g transform="translate(624,336)" shape-rendering="auto"><text filter="url(#crisp)" x="23.0" y="9" font-family="Liberation Sans" font-weight="bold" font-size="8.5" fill="#ffff00" text-anchor="middle" textLength="26" lengthAdjust="spacingAndGlyphs">CROSS</text><text filter="url(#crisp)" x="23.0" y="45" font-family="Liberation Sans" font-weight="bold" font-size="8.5" fill="#ffff00" text-anchor="middle" textLength="31" lengthAdjust="spacingAndGlyphs">SECTION</text><path d="M13,10 L41,10 L41,31 L31,34 L13,34 Z" fill="url(#pst_ffff00)" shape-rendering="crispEdges"/><path d="M4,17 H30 V37 H4 Z M4,17 L13,10 H41 L30,17 M41,10 V31 L30,37 M13,10 V30 L4,37 M13,30 H41" fill="none" stroke="#ffff00" stroke-width="1"/></g>
<rect x="671" y="336" width="46" height="48" fill="#707070"/><rect x="671.5" y="336.5" width="45" height="47" fill="none" stroke="#a8a8a8" stroke-width="1"/><g transform="translate(671,336)" shape-rendering="auto"><text filter="url(#crisp)" x="23.0" y="9" font-family="Liberation Sans" font-weight="bold" font-size="8.5" fill="#e0e0e0" text-anchor="middle" textLength="26" lengthAdjust="spacingAndGlyphs">CROSS</text><text filter="url(#crisp)" x="23.0" y="45" font-family="Liberation Sans" font-weight="bold" font-size="8.5" fill="#e0e0e0" text-anchor="middle" textLength="31" lengthAdjust="spacingAndGlyphs">SECTION</text><path d="M13,10 L41,10 L41,31 L31,34 L13,34 Z" fill="url(#pst_e0e0e0)" shape-rendering="crispEdges"/><path d="M4,17 H30 V37 H4 Z M4,17 L13,10 H41 L30,17 M41,10 V31 L30,37 M13,10 V30 L4,37 M13,30 H41" fill="none" stroke="#e0e0e0" stroke-width="1"/></g>
<rect x="718" y="336" width="46" height="48" fill="#707070"/><rect x="718.5" y="336.5" width="45" height="47" fill="none" stroke="#a8a8a8" stroke-width="1"/><g transform="translate(718,336)" shape-rendering="auto"><text filter="url(#crisp)" x="23.0" y="9" font-family="Liberation Sans" font-weight="bold" font-size="8.5" fill="#e0e0e0" text-anchor="middle" textLength="26" lengthAdjust="spacingAndGlyphs">CROSS</text><text filter="url(#crisp)" x="23.0" y="45" font-family="Liberation Sans" font-weight="bold" font-size="8.5" fill="#e0e0e0" text-anchor="middle" textLength="31" lengthAdjust="spacingAndGlyphs">SECTION</text><path d="M13,10 L41,10 L41,31 L31,34 L13,34 Z" fill="url(#pst_e0e0e0)" shape-rendering="crispEdges"/><path d="M4,17 H30 V37 H4 Z M4,17 L13,10 H41 L30,17 M41,10 V31 L30,37 M13,10 V30 L4,37 M13,30 H41" fill="none" stroke="#e0e0e0" stroke-width="1"/></g>
<g shape-rendering="auto">
<polygon points="622.8,276.0 656.0,276.0 656.0,299.0 622.8,299.0" fill="#0070e0" />
<polygon points="622.8,279.0 650.0,278.0 653.0,282.0 654.0,299.0 622.8,299.0" fill="#00a8e0" />
<polygon points="721.0,236.0 738.0,236.0 738.0,248.0 781.0,248.0 781.0,265.0 803.0,265.0 803.0,299.0 721.0,299.0" fill="#00e090" />
<polygon points="721.0,263.0 731.0,258.0 742.0,249.0 762.0,253.0 781.0,259.0 790.0,268.0 797.0,285.0 799.0,299.0 721.0,299.0" fill="#0c7048" />
<polygon points="721.0,279.0 736.0,276.0 748.0,274.0 762.0,275.0 778.0,278.0 785.0,285.0 788.0,299.0 721.0,299.0" fill="#c8c8c8" />
<polygon points="736.0,299.0 738.0,296.0 743.0,296.0 745.0,299.0" fill="#d89030" />
<polygon points="850.0,276.0 885.0,276.0 889.0,270.0 889.0,265.0 905.6,265.0 905.6,299.0 850.0,299.0" fill="#00b0e0" />
<polygon points="864.0,276.0 870.0,276.0 874.0,299.0 866.0,299.0" fill="#00e090" />
<polygon points="891.0,265.0 905.6,265.0 905.6,299.0 892.0,299.0" fill="#00e090" />
<polygon points="905.6,265.0 910.3,260.0 910.3,236.0 991.9,236.0 991.9,299.0 905.6,299.0" fill="#0c7048" />
<polygon points="979.0,236.0 991.9,236.0 991.9,245.0" fill="#00e090" />
<path d="M917,299 C917,265 930,243 955,243.4 C975,244 985,258 986.5,299 Z" fill="#c8c8c8"/>
<path d="M929,299 C929,273 940,258 958,257 C972,258 978,275 978,299 Z" fill="#d89030"/>
<path d="M949,299 C949,287 955,281 962,280.5 C970,281 972.4,290 972.4,299 Z" fill="#f0b428"/>
</g>
<text x="582.2" y="21" font-family="Liberation Sans" font-size="19.5" fill="#ffff00" font-weight="normal" textLength="186.3" lengthAdjust="spacingAndGlyphs" style="white-space:pre" filter="url(#crispS)">22−aug−1997,11:05:00</text>
<text x="779.1" y="21" font-family="Liberation Sans" font-size="19.5" fill="#fff" font-weight="normal" textLength="51.0" lengthAdjust="spacingAndGlyphs" style="white-space:pre" filter="url(#crispS)">Planar</text>
<text x="834.4" y="21" font-family="Liberation Sans" font-size="19.5" fill="#fff" font-weight="normal" textLength="116.0" lengthAdjust="spacingAndGlyphs" style="white-space:pre" filter="url(#crispS)">cross−section</text>
<text x="955.3" y="21" font-family="Liberation Sans" font-size="19.5" fill="#fff" font-weight="normal" textLength="34.2" lengthAdjust="spacingAndGlyphs" style="white-space:pre" filter="url(#crispS)">plot.</text>
<text x="1001.7" y="21" font-family="Liberation Sans" font-size="19.5" fill="#fff" font-weight="normal" textLength="73.5" lengthAdjust="spacingAndGlyphs" style="white-space:pre" filter="url(#crispS)">Contour</text>
<text x="1078.2" y="21" font-family="Liberation Sans" font-size="19.5" fill="#fff" font-weight="normal" textLength="14.3" lengthAdjust="spacingAndGlyphs" style="white-space:pre" filter="url(#crispS)">of</text>
<text x="582.2" y="48" font-family="Liberation Sans" font-size="19.5" fill="#fff" font-weight="normal" textLength="52.6" lengthAdjust="spacingAndGlyphs" style="white-space:pre" filter="url(#crispS)">maxdz</text>
<text x="640.1" y="48" font-family="Liberation Sans" font-size="19.5" fill="#fff" font-weight="normal" textLength="48.2" lengthAdjust="spacingAndGlyphs" style="white-space:pre" filter="url(#crispS)">using:</text>
<text x="693.5" y="48" font-family="Liberation Sans" font-size="19.5" fill="#fff" font-weight="normal" textLength="62.5" lengthAdjust="spacingAndGlyphs" style="white-space:pre" filter="url(#crispS)">rhb_3d.</text>
<text x="1051" y="45" font-family="Liberation Sans" font-size="12.2" fill="#fff" text-anchor="start" font-weight="normal" textLength="34" lengthAdjust="spacingAndGlyphs" style="white-space:pre" filter="url(#crisp)" >maxdz</text>
<rect x="1050" y="52.0" width="10" height="17.2" fill="#ff8080" />
<text x="1065" y="65.0" font-family="Liberation Sans" font-size="12.2" fill="#fff" text-anchor="start" font-weight="normal" style="white-space:pre" filter="url(#crisp)" >62.5</text>
<rect x="1050" y="68.97" width="10" height="17.2" fill="#ff9090" />
<text x="1065" y="81.97" font-family="Liberation Sans" font-size="12.2" fill="#fff" text-anchor="start" font-weight="normal" style="white-space:pre" filter="url(#crisp)" >57.5</text>
<rect x="1050" y="85.94" width="10" height="17.2" fill="#ffa860" />
<text x="1065" y="98.94" font-family="Liberation Sans" font-size="12.2" fill="#fff" text-anchor="start" font-weight="normal" style="white-space:pre" filter="url(#crisp)" >52.5</text>
<rect x="1050" y="102.91" width="10" height="17.2" fill="#fcd8a8" />
<text x="1065" y="115.91" font-family="Liberation Sans" font-size="12.2" fill="#fff" text-anchor="start" font-weight="normal" style="white-space:pre" filter="url(#crisp)" >47.5</text>
<rect x="1050" y="119.88" width="10" height="17.2" fill="#ffd000" />
<text x="1065" y="132.88" font-family="Liberation Sans" font-size="12.2" fill="#fff" text-anchor="start" font-weight="normal" style="white-space:pre" filter="url(#crisp)" >42.5</text>
<rect x="1050" y="136.85" width="10" height="17.2" fill="#f0b428" />
<text x="1065" y="149.85" font-family="Liberation Sans" font-size="12.2" fill="#fff" text-anchor="start" font-weight="normal" style="white-space:pre" filter="url(#crisp)" >37.5</text>
<rect x="1050" y="153.82" width="10" height="17.2" fill="#d8922c" />
<text x="1065" y="166.82" font-family="Liberation Sans" font-size="12.2" fill="#fff" text-anchor="start" font-weight="normal" style="white-space:pre" filter="url(#crisp)" >32.5</text>
<rect x="1050" y="170.79" width="10" height="17.2" fill="#c8c8c8" />
<text x="1065" y="183.79" font-family="Liberation Sans" font-size="12.2" fill="#fff" text-anchor="start" font-weight="normal" style="white-space:pre" filter="url(#crisp)" >27.5</text>
<rect x="1050" y="187.76" width="10" height="17.2" fill="#0c7048" />
<text x="1065" y="200.76" font-family="Liberation Sans" font-size="12.2" fill="#fff" text-anchor="start" font-weight="normal" style="white-space:pre" filter="url(#crisp)" >22.5</text>
<rect x="1050" y="204.73" width="10" height="17.2" fill="#00e090" />
<text x="1065" y="217.73" font-family="Liberation Sans" font-size="12.2" fill="#fff" text-anchor="start" font-weight="normal" style="white-space:pre" filter="url(#crisp)" >17.5</text>
<rect x="1050" y="221.7" width="10" height="17.2" fill="#00b0e0" />
<text x="1065" y="234.7" font-family="Liberation Sans" font-size="12.2" fill="#fff" text-anchor="start" font-weight="normal" style="white-space:pre" filter="url(#crisp)" >12.5</text>
<rect x="1050" y="238.67" width="10" height="17.2" fill="#0070e0" />
<text x="1065" y="251.67" font-family="Liberation Sans" font-size="12.2" fill="#fff" text-anchor="start" font-weight="normal" style="white-space:pre" filter="url(#crisp)" >7.5</text>
<rect x="1050" y="255.64" width="10" height="17.2" fill="#1040e0" />
<text x="1065" y="268.64" font-family="Liberation Sans" font-size="12.2" fill="#fff" text-anchor="start" font-weight="normal" style="white-space:pre" filter="url(#crisp)" >2.5</text>
<rect x="1050" y="272.61" width="10" height="17.2" fill="#4020e0" />
<text x="1065" y="285.61" font-family="Liberation Sans" font-size="12.2" fill="#fff" text-anchor="start" font-weight="normal" style="white-space:pre" filter="url(#crisp)" >−2.5</text>
<rect x="1050" y="289.58" width="10" height="17.2" fill="#6010f0" />
<text x="1065" y="302.58" font-family="Liberation Sans" font-size="12.2" fill="#fff" text-anchor="start" font-weight="normal" style="white-space:pre" filter="url(#crisp)" >−7.5</text>
<rect x="1050" y="306.55" width="10" height="17.2" fill="#8000ff" />
<text x="1065" y="319.55" font-family="Liberation Sans" font-size="12.2" fill="#fff" text-anchor="start" font-weight="normal" style="white-space:pre" filter="url(#crisp)" >−12.5</text>
<rect x="573.5" y="386.5" width="562" height="385" fill="#000" />
<line x1="623.5" y1="413.5" x2="623.5" y2="695.5" stroke="#fff" stroke-width="1" />
<line x1="623.5" y1="695.5" x2="1049.5" y2="695.5" stroke="#fff" stroke-width="1" />
<line x1="623.5" y1="413.5" x2="1049.5" y2="413.5" stroke="#fff" stroke-width="1" />
<line x1="1049.5" y1="413.5" x2="1049.5" y2="695.5" stroke="#fff" stroke-width="1" />
<line x1="623.5" y1="667.5" x2="634.5" y2="667.5" stroke="#fff" stroke-width="1" />
<line x1="1038.5" y1="667.5" x2="1049.5" y2="667.5" stroke="#fff" stroke-width="1" />
<line x1="623.5" y1="639.5" x2="634.5" y2="639.5" stroke="#fff" stroke-width="1" />
<line x1="1038.5" y1="639.5" x2="1049.5" y2="639.5" stroke="#fff" stroke-width="1" />
<line x1="623.5" y1="611.5" x2="634.5" y2="611.5" stroke="#fff" stroke-width="1" />
<line x1="1038.5" y1="611.5" x2="1049.5" y2="611.5" stroke="#fff" stroke-width="1" />
<line x1="623.5" y1="583.5" x2="634.5" y2="583.5" stroke="#fff" stroke-width="1" />
<line x1="1038.5" y1="583.5" x2="1049.5" y2="583.5" stroke="#fff" stroke-width="1" />
<line x1="623.5" y1="555.5" x2="634.5" y2="555.5" stroke="#fff" stroke-width="1" />
<line x1="1038.5" y1="555.5" x2="1049.5" y2="555.5" stroke="#fff" stroke-width="1" />
<line x1="623.5" y1="526.5" x2="634.5" y2="526.5" stroke="#fff" stroke-width="1" />
<line x1="1038.5" y1="526.5" x2="1049.5" y2="526.5" stroke="#fff" stroke-width="1" />
<line x1="623.5" y1="498.5" x2="634.5" y2="498.5" stroke="#fff" stroke-width="1" />
<line x1="1038.5" y1="498.5" x2="1049.5" y2="498.5" stroke="#fff" stroke-width="1" />
<line x1="623.5" y1="470.5" x2="634.5" y2="470.5" stroke="#fff" stroke-width="1" />
<line x1="1038.5" y1="470.5" x2="1049.5" y2="470.5" stroke="#fff" stroke-width="1" />
<line x1="623.5" y1="442.5" x2="634.5" y2="442.5" stroke="#fff" stroke-width="1" />
<line x1="1038.5" y1="442.5" x2="1049.5" y2="442.5" stroke="#fff" stroke-width="1" />
<line x1="677.5" y1="688.5" x2="677.5" y2="695.5" stroke="#fff" stroke-width="1" />
<line x1="677.5" y1="413.5" x2="677.5" y2="420.5" stroke="#fff" stroke-width="1" />
<line x1="730.5" y1="688.5" x2="730.5" y2="695.5" stroke="#fff" stroke-width="1" />
<line x1="730.5" y1="413.5" x2="730.5" y2="420.5" stroke="#fff" stroke-width="1" />
<line x1="783.5" y1="688.5" x2="783.5" y2="695.5" stroke="#fff" stroke-width="1" />
<line x1="783.5" y1="413.5" x2="783.5" y2="420.5" stroke="#fff" stroke-width="1" />
<line x1="836.5" y1="688.5" x2="836.5" y2="695.5" stroke="#fff" stroke-width="1" />
<line x1="836.5" y1="413.5" x2="836.5" y2="420.5" stroke="#fff" stroke-width="1" />
<line x1="890.5" y1="688.5" x2="890.5" y2="695.5" stroke="#fff" stroke-width="1" />
<line x1="890.5" y1="413.5" x2="890.5" y2="420.5" stroke="#fff" stroke-width="1" />
<line x1="943.5" y1="688.5" x2="943.5" y2="695.5" stroke="#fff" stroke-width="1" />
<line x1="943.5" y1="413.5" x2="943.5" y2="420.5" stroke="#fff" stroke-width="1" />
<line x1="996.5" y1="688.5" x2="996.5" y2="695.5" stroke="#fff" stroke-width="1" />
<line x1="996.5" y1="413.5" x2="996.5" y2="420.5" stroke="#fff" stroke-width="1" />
<text x="620.5" y="696" font-family="Liberation Sans" font-size="10" fill="#fff" text-anchor="end" font-weight="normal" style="white-space:pre" filter="url(#crisp)" >0</text>
<text x="620.5" y="639" font-family="Liberation Sans" font-size="10" fill="#fff" text-anchor="end" font-weight="normal" style="white-space:pre" filter="url(#crisp)" >4</text>
<text x="620.5" y="583" font-family="Liberation Sans" font-size="10" fill="#fff" text-anchor="end" font-weight="normal" style="white-space:pre" filter="url(#crisp)" >8</text>
<text x="620.5" y="526" font-family="Liberation Sans" font-size="10" fill="#fff" text-anchor="end" font-weight="normal" style="white-space:pre" filter="url(#crisp)" >12</text>
<text x="620.5" y="470" font-family="Liberation Sans" font-size="10" fill="#fff" text-anchor="end" font-weight="normal" style="white-space:pre" filter="url(#crisp)" >16</text>
<text x="620.5" y="414" font-family="Liberation Sans" font-size="10" fill="#fff" text-anchor="end" font-weight="normal" style="white-space:pre" filter="url(#crisp)" >20</text>
<text x="623.5" y="706.0" font-family="Liberation Sans" font-size="10" fill="#fff" text-anchor="middle" font-weight="normal" style="white-space:pre" filter="url(#crisp)" >0.0</text>
<text x="729.96" y="706.0" font-family="Liberation Sans" font-size="10" fill="#fff" text-anchor="middle" font-weight="normal" style="white-space:pre" filter="url(#crisp)" >10.2</text>
<text x="836.42" y="706.0" font-family="Liberation Sans" font-size="10" fill="#fff" text-anchor="middle" font-weight="normal" style="white-space:pre" filter="url(#crisp)" >20.4</text>
<text x="942.88" y="706.0" font-family="Liberation Sans" font-size="10" fill="#fff" text-anchor="middle" font-weight="normal" style="white-space:pre" filter="url(#crisp)" >30.6</text>
<text x="1050.0" y="706.0" font-family="Liberation Sans" font-size="10" fill="#fff" text-anchor="end" font-weight="normal" style="white-space:pre" filter="url(#crisp)" >40</text>
<text x="804.0" y="715.0" font-family="Liberation Sans" font-size="10" fill="#fff" font-weight="normal" textLength="67.0" lengthAdjust="spacingAndGlyphs" style="white-space:pre" filter="url(#crispS)">Distance in km</text>
<text transform="translate(605.5,552.5) rotate(-90)" font-family="Liberation Serif" font-size="13" fill="#fff" text-anchor="middle" font-weight="normal" textLength="94" lengthAdjust="spacingAndGlyphs" filter="url(#crispS)">km above MSL</text>
<line x1="1049.5" y1="412.5" x2="1134.5" y2="412.5" stroke="#a0a0a0" stroke-width="1" />
<line x1="1049.5" y1="720.0" x2="1134.5" y2="720.0" stroke="#a0a0a0" stroke-width="1" />
<line x1="573.5" y1="387.0" x2="1135.5" y2="387.0" stroke="#fff" stroke-width="1" stroke-dasharray="1 1"/>
<line x1="1134.0" y1="386.5" x2="1134.0" y2="770.5" stroke="#fff" stroke-width="1" stroke-dasharray="1 1"/>
<line x1="574.0" y1="386.5" x2="574.0" y2="770.5" stroke="#fff" stroke-width="1" stroke-dasharray="1 1"/>
<line x1="573.5" y1="771.0" x2="1135.5" y2="771.0" stroke="#fff" stroke-width="1" stroke-dasharray="1 1"/>
<rect x="580" y="720" width="46" height="48" fill="#191970"/><rect x="580.5" y="720.5" width="45" height="47" fill="none" stroke="#a8a8a8" stroke-width="1"/><g transform="translate(580,720) scale(1.0,1.0)" fill="none" stroke="#ffff00" stroke-width="2.2" stroke-linejoin="round" shape-rendering="auto"><path d="M6.9,12.2 C9,9.5 13,7.3 17,7.5 C21,8 25,11.5 29,12 C33,12.3 36,11 37.4,9.5 L36.4,11.7 C32,16 26,19 23,21 C19,24 15,28 12,32 C10,35 8,37 6.1,39.5 C9,37.5 13,36.5 18,36.6 C22,37 25,40 29,40.2 C33,40.3 36.5,38.5 38.6,35.4"/></g>
<rect x="626" y="720" width="46" height="48" fill="#191970"/><rect x="626.5" y="720.5" width="45" height="47" fill="none" stroke="#a8a8a8" stroke-width="1"/><g transform="translate(626,720)" shape-rendering="auto"><text filter="url(#crisp)" x="23.0" y="9" font-family="Liberation Sans" font-weight="bold" font-size="8.5" fill="#ffff00" text-anchor="middle" textLength="26" lengthAdjust="spacingAndGlyphs">CROSS</text><text filter="url(#crisp)" x="23.0" y="45" font-family="Liberation Sans" font-weight="bold" font-size="8.5" fill="#ffff00" text-anchor="middle" textLength="31" lengthAdjust="spacingAndGlyphs">SECTION</text><path d="M13,10 L41,10 L41,31 L31,34 L13,34 Z" fill="url(#pst_ffff00)" shape-rendering="crispEdges"/><path d="M4,17 H30 V37 H4 Z M4,17 L13,10 H41 L30,17 M41,10 V31 L30,37 M13,10 V30 L4,37 M13,30 H41" fill="none" stroke="#ffff00" stroke-width="1"/></g>
<rect x="672" y="720" width="46" height="48" fill="#707070"/><rect x="672.5" y="720.5" width="45" height="47" fill="none" stroke="#a8a8a8" stroke-width="1"/><g transform="translate(672,720)" shape-rendering="auto"><text filter="url(#crisp)" x="23.0" y="9" font-family="Liberation Sans" font-weight="bold" font-size="8.5" fill="#e0e0e0" text-anchor="middle" textLength="26" lengthAdjust="spacingAndGlyphs">CROSS</text><text filter="url(#crisp)" x="23.0" y="45" font-family="Liberation Sans" font-weight="bold" font-size="8.5" fill="#e0e0e0" text-anchor="middle" textLength="31" lengthAdjust="spacingAndGlyphs">SECTION</text><path d="M13,10 L41,10 L41,31 L31,34 L13,34 Z" fill="url(#pst_e0e0e0)" shape-rendering="crispEdges"/><path d="M4,17 H30 V37 H4 Z M4,17 L13,10 H41 L30,17 M41,10 V31 L30,37 M13,10 V30 L4,37 M13,30 H41" fill="none" stroke="#e0e0e0" stroke-width="1"/></g>
<rect x="720" y="720" width="46" height="48" fill="#707070"/><rect x="720.5" y="720.5" width="45" height="47" fill="none" stroke="#a8a8a8" stroke-width="1"/><g transform="translate(720,720)" shape-rendering="auto"><text filter="url(#crisp)" x="23.0" y="9" font-family="Liberation Sans" font-weight="bold" font-size="8.5" fill="#e0e0e0" text-anchor="middle" textLength="26" lengthAdjust="spacingAndGlyphs">CROSS</text><text filter="url(#crisp)" x="23.0" y="45" font-family="Liberation Sans" font-weight="bold" font-size="8.5" fill="#e0e0e0" text-anchor="middle" textLength="31" lengthAdjust="spacingAndGlyphs">SECTION</text><path d="M13,10 L41,10 L41,31 L31,34 L13,34 Z" fill="url(#pst_e0e0e0)" shape-rendering="crispEdges"/><path d="M4,17 H30 V37 H4 Z M4,17 L13,10 H41 L30,17 M41,10 V31 L30,37 M13,10 V30 L4,37 M13,30 H41" fill="none" stroke="#e0e0e0" stroke-width="1"/></g>
<g shape-rendering="auto">
<polygon points="624.3,659.7 657.7,659.7 657.7,682.8 624.3,682.8" fill="#b4b4b4" />
<polygon points="723.0,620.0 740.0,620.0 740.0,632.0 774.0,632.0 783.0,632.0 783.0,649.0 804.9,649.0 804.9,682.8 723.0,682.8" fill="#b4b4b4" />
<polygon points="723.0,620.0 740.0,620.0 740.0,632.0 774.0,632.0 766.0,640.0 745.0,640.5 735.0,642.0 723.0,644.0" fill="#054f14" />
<polygon points="852.0,660.0 887.0,660.0 891.0,655.0 891.0,649.0 904.0,649.0 908.0,654.0 912.0,620.0 988.0,620.0 993.8,640.0 993.8,682.8 852.0,682.8" fill="#b4b4b4" />
<polygon points="912.0,620.0 961.0,620.0 955.0,632.0 947.0,645.0 933.0,652.0 912.0,654.0 905.0,652.0 904.0,649.0 907.0,646.0 912.0,640.0" fill="#054f14" />
<polygon points="988.0,620.0 993.8,620.0 993.8,640.0 988.0,632.0" fill="#b05010" />
</g>
<text x="584.25" y="405" font-family="Liberation Sans" font-size="19.5" fill="#ffff00" font-weight="normal" textLength="186.2" lengthAdjust="spacingAndGlyphs" style="white-space:pre" filter="url(#crispS)">22−aug−1997,11:05:00</text>
<text x="780.7" y="405" font-family="Liberation Sans" font-size="19.5" fill="#fff" font-weight="normal" textLength="49.8" lengthAdjust="spacingAndGlyphs" style="white-space:pre" filter="url(#crispS)">Planar</text>
<text x="836.0" y="405" font-family="Liberation Sans" font-size="19.5" fill="#fff" font-weight="normal" textLength="116.0" lengthAdjust="spacingAndGlyphs" style="white-space:pre" filter="url(#crispS)">cross−section</text>
<text x="957.0" y="405" font-family="Liberation Sans" font-size="19.5" fill="#fff" font-weight="normal" textLength="34.3" lengthAdjust="spacingAndGlyphs" style="white-space:pre" filter="url(#crispS)">plot.</text>
<text x="1003.5" y="405" font-family="Liberation Sans" font-size="19.5" fill="#fff" font-weight="normal" textLength="73.5" lengthAdjust="spacingAndGlyphs" style="white-space:pre" filter="url(#crispS)">Contour</text>
<text x="1080.0" y="405" font-family="Liberation Sans" font-size="19.5" fill="#fff" font-weight="normal" textLength="14.5" lengthAdjust="spacingAndGlyphs" style="white-space:pre" filter="url(#crispS)">of</text>
<text x="584.25" y="432" font-family="Liberation Sans" font-size="19.5" fill="#fff" font-weight="normal" textLength="107.0" lengthAdjust="spacingAndGlyphs" style="white-space:pre" filter="url(#crispS)">radialvelocity</text>
<text x="696.4" y="432" font-family="Liberation Sans" font-size="19.5" fill="#fff" font-weight="normal" textLength="49.7" lengthAdjust="spacingAndGlyphs" style="white-space:pre" filter="url(#crispS)">using:</text>
<text x="750.2" y="432" font-family="Liberation Sans" font-size="19.5" fill="#fff" font-weight="normal" textLength="62.5" lengthAdjust="spacingAndGlyphs" style="white-space:pre" filter="url(#crispS)">rhb_3d.</text>
<text x="1052" y="428" font-family="Liberation Sans" font-size="12" fill="#fff" text-anchor="start" font-weight="normal" textLength="75" lengthAdjust="spacingAndGlyphs" style="white-space:pre" filter="url(#crisp)" >radialvelocity</text>
<rect x="1051.5" y="435.6" width="10" height="11.2" fill="#ff0000" />
<text x="1067.5" y="445.9" font-family="Liberation Sans" font-size="12.2" fill="#fff" text-anchor="start" font-weight="normal" style="white-space:pre" filter="url(#crisp)" >24.0</text>
<rect x="1051.5" y="446.58" width="10" height="11.2" fill="#d00000" />
<text x="1067.5" y="456.88" font-family="Liberation Sans" font-size="12.2" fill="#fff" text-anchor="start" font-weight="normal" style="white-space:pre" filter="url(#crisp)" >22.0</text>
<rect x="1051.5" y="457.56" width="10" height="11.2" fill="#800000" />
<text x="1067.5" y="467.86" font-family="Liberation Sans" font-size="12.2" fill="#fff" text-anchor="start" font-weight="normal" style="white-space:pre" filter="url(#crisp)" >20.0</text>
<rect x="1051.5" y="468.54" width="10" height="11.2" fill="#e05000" />
<text x="1067.5" y="478.84" font-family="Liberation Sans" font-size="12.2" fill="#fff" text-anchor="start" font-weight="normal" style="white-space:pre" filter="url(#crisp)" >18.0</text>
<rect x="1051.5" y="479.52" width="10" height="11.2" fill="#ff8000" />
<text x="1067.5" y="489.82" font-family="Liberation Sans" font-size="12.2" fill="#fff" text-anchor="start" font-weight="normal" style="white-space:pre" filter="url(#crisp)" >16.0</text>
<rect x="1051.5" y="490.5" width="10" height="11.2" fill="#ff5050" />
<text x="1067.5" y="500.8" font-family="Liberation Sans" font-size="12.2" fill="#fff" text-anchor="start" font-weight="normal" style="white-space:pre" filter="url(#crisp)" >14.0</text>
<rect x="1051.5" y="501.48" width="10" height="11.2" fill="#ff9090" />
<text x="1067.5" y="511.78" font-family="Liberation Sans" font-size="12.2" fill="#fff" text-anchor="start" font-weight="normal" style="white-space:pre" filter="url(#crisp)" >12.0</text>
<rect x="1051.5" y="512.46" width="10" height="11.2" fill="#ffc0c0" />
<text x="1067.5" y="522.76" font-family="Liberation Sans" font-size="12.2" fill="#fff" text-anchor="start" font-weight="normal" style="white-space:pre" filter="url(#crisp)" >10.0</text>
<rect x="1051.5" y="523.44" width="10" height="11.2" fill="#ffff00" />
<text x="1067.5" y="533.74" font-family="Liberation Sans" font-size="12.2" fill="#fff" text-anchor="start" font-weight="normal" style="white-space:pre" filter="url(#crisp)" >8.0</text>
<rect x="1051.5" y="534.42" width="10" height="11.2" fill="#ffb020" />
<text x="1067.5" y="544.72" font-family="Liberation Sans" font-size="12.2" fill="#fff" text-anchor="start" font-weight="normal" style="white-space:pre" filter="url(#crisp)" >6.0</text>
<rect x="1051.5" y="545.4" width="10" height="11.2" fill="#d09060" />
<text x="1067.5" y="555.7" font-family="Liberation Sans" font-size="12.2" fill="#fff" text-anchor="start" font-weight="normal" style="white-space:pre" filter="url(#crisp)" >4.0</text>
<rect x="1051.5" y="556.38" width="10" height="11.2" fill="#a04000" />
<text x="1067.5" y="566.68" font-family="Liberation Sans" font-size="12.2" fill="#fff" text-anchor="start" font-weight="normal" style="white-space:pre" filter="url(#crisp)" >2.0</text>
<rect x="1051.5" y="567.36" width="10" height="11.2" fill="#c0c0c0" />
<text x="1067.5" y="577.66" font-family="Liberation Sans" font-size="12.2" fill="#fff" text-anchor="start" font-weight="normal" style="white-space:pre" filter="url(#crisp)" >0.0</text>
<rect x="1051.5" y="578.34" width="10" height="11.2" fill="#004f00" />
<text x="1067.5" y="588.64" font-family="Liberation Sans" font-size="12.2" fill="#fff" text-anchor="start" font-weight="normal" style="white-space:pre" filter="url(#crisp)" >−2.0</text>
<rect x="1051.5" y="589.32" width="10" height="11.2" fill="#008000" />
<text x="1067.5" y="599.62" font-family="Liberation Sans" font-size="12.2" fill="#fff" text-anchor="start" font-weight="normal" style="white-space:pre" filter="url(#crisp)" >−4.0</text>
<rect x="1051.5" y="600.3" width="10" height="11.2" fill="#00a000" />
<text x="1067.5" y="610.6" font-family="Liberation Sans" font-size="12.2" fill="#fff" text-anchor="start" font-weight="normal" style="white-space:pre" filter="url(#crisp)" >−6.0</text>
<rect x="1051.5" y="611.28" width="10" height="11.2" fill="#00ff00" />
<text x="1067.5" y="621.58" font-family="Liberation Sans" font-size="12.2" fill="#fff" text-anchor="start" font-weight="normal" style="white-space:pre" filter="url(#crisp)" >−8.0</text>
<rect x="1051.5" y="622.26" width="10" height="11.2" fill="#00c0ff" />
<text x="1067.5" y="632.56" font-family="Liberation Sans" font-size="12.2" fill="#fff" text-anchor="start" font-weight="normal" style="white-space:pre" filter="url(#crisp)" >−10.0</text>
<rect x="1051.5" y="633.24" width="10" height="11.2" fill="#0080ff" />
<text x="1067.5" y="643.54" font-family="Liberation Sans" font-size="12.2" fill="#fff" text-anchor="start" font-weight="normal" style="white-space:pre" filter="url(#crisp)" >−12.0</text>
<rect x="1051.5" y="644.22" width="10" height="11.2" fill="#0000e0" />
<text x="1067.5" y="654.52" font-family="Liberation Sans" font-size="12.2" fill="#fff" text-anchor="start" font-weight="normal" style="white-space:pre" filter="url(#crisp)" >−14.0</text>
<rect x="1051.5" y="655.2" width="10" height="11.2" fill="#0020a0" />
<text x="1067.5" y="665.5" font-family="Liberation Sans" font-size="12.2" fill="#fff" text-anchor="start" font-weight="normal" style="white-space:pre" filter="url(#crisp)" >−16.0</text>
<rect x="1051.5" y="666.18" width="10" height="11.2" fill="#000080" />
<text x="1067.5" y="676.48" font-family="Liberation Sans" font-size="12.2" fill="#fff" text-anchor="start" font-weight="normal" style="white-space:pre" filter="url(#crisp)" >−18.0</text>
<rect x="1051.5" y="677.16" width="10" height="11.2" fill="#8080b0" />
<text x="1067.5" y="687.46" font-family="Liberation Sans" font-size="12.2" fill="#fff" text-anchor="start" font-weight="normal" style="white-space:pre" filter="url(#crisp)" >−20.0</text>
<rect x="1051.5" y="688.14" width="10" height="11.2" fill="#606080" />
<text x="1067.5" y="698.44" font-family="Liberation Sans" font-size="12.2" fill="#fff" text-anchor="start" font-weight="normal" style="white-space:pre" filter="url(#crisp)" >−22.0</text>
<rect x="1051.5" y="699.12" width="10" height="11.2" fill="#707070" />
<text x="1067.5" y="709.42" font-family="Liberation Sans" font-size="12.2" fill="#fff" text-anchor="start" font-weight="normal" style="white-space:pre" filter="url(#crisp)" >−24.0</text>
<rect x="1081" y="787" width="173" height="211" fill="#5f9ea0" />
<line x1="1081" y1="787.5" x2="1254" y2="787.5" stroke="#fff" stroke-width="1" stroke-dasharray="1 1"/>
<line x1="1253.5" y1="787" x2="1253.5" y2="998" stroke="#fff" stroke-width="1" stroke-dasharray="1 1"/>
<line x1="1081" y1="997.5" x2="1254" y2="997.5" stroke="#fff" stroke-width="1" stroke-dasharray="1 1"/>
<rect x="1129" y="815" width="120" height="178" fill="#000" />
<rect x="1131" y="817" width="116" height="174" fill="#e0e0e0" />
<rect x="622" y="798" width="507" height="221" fill="#5f9ea0" />
<line x1="622.5" y1="798" x2="622.5" y2="1019" stroke="#fff" stroke-width="1" stroke-dasharray="1 1"/>
<line x1="1128.5" y1="798" x2="1128.5" y2="1019" stroke="#fff" stroke-width="1" stroke-dasharray="1 1"/>
<line x1="622" y1="1018.5" x2="1129" y2="1018.5" stroke="#fff" stroke-width="1" stroke-dasharray="1 1"/>
<line x1="622" y1="798.5" x2="1129" y2="798.5" stroke="#fff" stroke-width="1" stroke-dasharray="1 1"/>
<rect x="627" y="805" width="497" height="209" fill="#000" />
<rect x="629" y="807" width="493" height="204" fill="#e0e0e0" />
<rect x="635.0" y="831.0" width="414" height="89" fill="none" stroke="#000" stroke-width="2" />
<rect x="641" y="859" width="69" height="24" fill="#e0e0e0" />
<rect x="642.0" y="860.0" width="67" height="22" fill="none" stroke="#000" stroke-width="2" />
<text x="675.5" y="875.68" font-family="Liberation Sans" font-size="13" fill="#000" text-anchor="middle" font-weight="bold" style="white-space:pre" filter="url(#crispS)" >Day</text>
<rect x="715.5" y="858.5" width="24" height="24" fill="none" stroke="#ff0000" stroke-width="1" />
<rect x="718" y="861" width="19" height="19" fill="url(#pst_000)" />
<rect x="718.5" y="861.5" width="18" height="18" fill="none" stroke="#000" stroke-width="1" />
<rect x="721" y="864" width="13" height="13" fill="#e0e0e0" />
<path d="M722.5,870.5 L727.5,866.5 L727.5,869.0 L732.5,869.0 L732.5,872.0 L727.5,872.0 L727.5,874.5 Z" fill="#000"/>
<rect x="740.5" y="858.5" width="24" height="24" fill="none" stroke="#ff0000" stroke-width="1" />
<rect x="743" y="861" width="19" height="19" fill="url(#pst_000)" />
<rect x="743.5" y="861.5" width="18" height="18" fill="none" stroke="#000" stroke-width="1" />
<rect x="746" y="864" width="13" height="13" fill="#e0e0e0" />
<path d="M757.5,870.5 L752.5,866.5 L752.5,869.0 L747.5,869.0 L747.5,872.0 L752.5,872.0 L752.5,874.5 Z" fill="#000"/>
<rect x="770" y="859" width="69" height="24" fill="#e0e0e0" />
<rect x="771.0" y="860.0" width="67" height="22" fill="none" stroke="#000" stroke-width="2" />
<text x="804.5" y="875.68" font-family="Liberation Sans" font-size="13" fill="#000" text-anchor="middle" font-weight="bold" style="white-space:pre" filter="url(#crispS)" >Month</text>
<rect x="844.5" y="858.5" width="24" height="24" fill="none" stroke="#ff0000" stroke-width="1" />
<rect x="847" y="861" width="19" height="19" fill="url(#pst_000)" />
<rect x="847.5" y="861.5" width="18" height="18" fill="none" stroke="#000" stroke-width="1" />
<rect x="850" y="864" width="13" height="13" fill="#e0e0e0" />
<path d="M851.5,870.5 L856.5,866.5 L856.5,869.0 L861.5,869.0 L861.5,872.0 L856.5,872.0 L856.5,874.5 Z" fill="#000"/>
<rect x="869.5" y="858.5" width="24" height="24" fill="none" stroke="#ff0000" stroke-width="1" />
<rect x="872" y="861" width="19" height="19" fill="url(#pst_000)" />
<rect x="872.5" y="861.5" width="18" height="18" fill="none" stroke="#000" stroke-width="1" />
<rect x="875" y="864" width="13" height="13" fill="#e0e0e0" />
<path d="M886.5,870.5 L881.5,866.5 L881.5,869.0 L876.5,869.0 L876.5,872.0 L881.5,872.0 L881.5,874.5 Z" fill="#000"/>
<rect x="899" y="859" width="69" height="24" fill="#e0e0e0" />
<rect x="900.0" y="860.0" width="67" height="22" fill="none" stroke="#000" stroke-width="2" />
<text x="933.5" y="875.68" font-family="Liberation Sans" font-size="13" fill="#000" text-anchor="middle" font-weight="bold" style="white-space:pre" filter="url(#crispS)" >Year</text>
<rect x="973.0" y="858.5" width="24" height="24" fill="none" stroke="#ff0000" stroke-width="1" />
<rect x="975.5" y="861" width="19" height="19" fill="url(#pst_000)" />
<rect x="976.0" y="861.5" width="18" height="18" fill="none" stroke="#000" stroke-width="1" />
<rect x="978.5" y="864" width="13" height="13" fill="#e0e0e0" />
<path d="M980.0,870.5 L985.0,866.5 L985.0,869.0 L990.0,869.0 L990.0,872.0 L985.0,872.0 L985.0,874.5 Z" fill="#000"/>
<rect x="998.0" y="858.5" width="24" height="24" fill="none" stroke="#ff0000" stroke-width="1" />
<rect x="1000.5" y="861" width="19" height="19" fill="url(#pst_000)" />
<rect x="1001.0" y="861.5" width="18" height="18" fill="none" stroke="#000" stroke-width="1" />
<rect x="1003.5" y="864" width="13" height="13" fill="#e0e0e0" />
<path d="M1015.0,870.5 L1010.0,866.5 L1010.0,869.0 L1005.0,869.0 L1005.0,872.0 L1010.0,872.0 L1010.0,874.5 Z" fill="#000"/>
<rect x="641" y="889" width="69" height="24" fill="#e0e0e0" />
<rect x="642.0" y="890.0" width="67" height="22" fill="none" stroke="#000" stroke-width="2" />
<text x="675.5" y="906.04" font-family="Liberation Sans" font-size="14" fill="#000" text-anchor="middle" font-weight="bold" textLength="38" lengthAdjust="spacingAndGlyphs" style="white-space:pre" filter="url(#crispS)" >Hours</text>
<rect x="715.5" y="889.5" width="24" height="24" fill="none" stroke="#ff0000" stroke-width="1" />
<rect x="718" y="892" width="19" height="19" fill="url(#pst_000)" />
<rect x="718.5" y="892.5" width="18" height="18" fill="none" stroke="#000" stroke-width="1" />
<rect x="721" y="895" width="13" height="13" fill="#e0e0e0" />
<path d="M722.5,901.5 L727.5,897.5 L727.5,900.0 L732.5,900.0 L732.5,903.0 L727.5,903.0 L727.5,905.5 Z" fill="#000"/>
<rect x="740.5" y="889.5" width="24" height="24" fill="none" stroke="#ff0000" stroke-width="1" />
<rect x="743" y="892" width="19" height="19" fill="url(#pst_000)" />
<rect x="743.5" y="892.5" width="18" height="18" fill="none" stroke="#000" stroke-width="1" />
<rect x="746" y="895" width="13" height="13" fill="#e0e0e0" />
<path d="M757.5,901.5 L752.5,897.5 L752.5,900.0 L747.5,900.0 L747.5,903.0 L752.5,903.0 L752.5,905.5 Z" fill="#000"/>
<rect x="770" y="889" width="69" height="24" fill="#e0e0e0" />
<rect x="771.0" y="890.0" width="67" height="22" fill="none" stroke="#000" stroke-width="2" />
<text x="804.5" y="906.04" font-family="Liberation Sans" font-size="14" fill="#000" text-anchor="middle" font-weight="bold" textLength="50" lengthAdjust="spacingAndGlyphs" style="white-space:pre" filter="url(#crispS)" >Minutes</text>
<rect x="844.5" y="889.5" width="24" height="24" fill="none" stroke="#ff0000" stroke-width="1" />
<rect x="847" y="892" width="19" height="19" fill="url(#pst_000)" />
<rect x="847.5" y="892.5" width="18" height="18" fill="none" stroke="#000" stroke-width="1" />
<rect x="850" y="895" width="13" height="13" fill="#e0e0e0" />
<path d="M851.5,901.5 L856.5,897.5 L856.5,900.0 L861.5,900.0 L861.5,903.0 L856.5,903.0 L856.5,905.5 Z" fill="#000"/>
<rect x="869.5" y="889.5" width="24" height="24" fill="none" stroke="#ff0000" stroke-width="1" />
<rect x="872" y="892" width="19" height="19" fill="url(#pst_000)" />
<rect x="872.5" y="892.5" width="18" height="18" fill="none" stroke="#000" stroke-width="1" />
<rect x="875" y="895" width="13" height="13" fill="#e0e0e0" />
<path d="M886.5,901.5 L881.5,897.5 L881.5,900.0 L876.5,900.0 L876.5,903.0 L881.5,903.0 L881.5,905.5 Z" fill="#000"/>
<rect x="898" y="888" width="146" height="26" fill="#e0e0e0" />
<rect x="899.5" y="889.5" width="143" height="23" fill="none" stroke="#ffff00" stroke-width="3" />
<text x="904" y="906" font-family="Liberation Sans" font-size="11" fill="#000" text-anchor="start" font-weight="normal" textLength="90" lengthAdjust="spacingAndGlyphs" style="white-space:pre" filter="url(#crispS)" >22-Aug-97,11:05:00</text>
<rect x="635.0" y="927.0" width="135" height="36" fill="none" stroke="#000" stroke-width="2" />
<rect x="641" y="933" width="61" height="24" fill="#e0e0e0" />
<rect x="641.5" y="933.5" width="60" height="23" fill="none" stroke="#ff0000" stroke-width="1" />
<text x="671.5" y="950" font-family="Liberation Sans" font-size="14" fill="#000" text-anchor="middle" font-weight="normal" textLength="52" lengthAdjust="spacingAndGlyphs" style="white-space:pre" filter="url(#crispS)" >Real Time</text>
<rect x="707" y="933" width="57" height="24" fill="#000" />
<rect x="707.5" y="933.5" width="56" height="23" fill="none" stroke="#ff0000" stroke-width="1" />
<text x="735.5" y="950" font-family="Liberation Sans" font-size="14" fill="#fff" text-anchor="middle" font-weight="normal" textLength="48" lengthAdjust="spacingAndGlyphs" style="white-space:pre" filter="url(#crisp)" >Set Time</text>
<rect x="777.0" y="927.0" width="185" height="31" fill="none" stroke="#000" stroke-width="2" />
<text x="784" y="947" font-family="Liberation Sans" font-size="14" fill="#000" text-anchor="start" font-weight="bold" textLength="26" lengthAdjust="spacingAndGlyphs" style="white-space:pre" filter="url(#crispS)" >Skip</text>
<rect x="814" y="930" width="39" height="24" fill="#e0e0e0" />
<rect x="815.5" y="931.5" width="36" height="21" fill="none" stroke="#ffff00" stroke-width="3" />
<text x="821" y="949" font-family="Liberation Sans" font-size="11" fill="#000" text-anchor="start" font-weight="normal" style="white-space:pre" filter="url(#crispS)" >1</text>
<rect x="855" y="933" width="52" height="22" fill="#e0e0e0" />
<rect x="855.5" y="933.5" width="51" height="21" fill="none" stroke="#000" stroke-width="1" />
<rect x="860.5" y="937.5" width="8" height="11" fill="none" stroke="#000"/><line x1="862" y1="940.5" x2="867" y2="940.5" stroke="#000"/><line x1="862" y1="943.5" x2="867" y2="943.5" stroke="#000"/>
<text x="874" y="949" font-family="Liberation Mono" font-size="15" fill="#000" text-anchor="start" font-weight="bold" textLength="29" lengthAdjust="spacingAndGlyphs" style="white-space:pre" filter="url(#crispS)" >hrs</text>
<rect x="909.5" y="930.5" width="24" height="24" fill="none" stroke="#ff0000" stroke-width="1" />
<rect x="912" y="933" width="19" height="19" fill="url(#pst_000)" />
<rect x="912.5" y="933.5" width="18" height="18" fill="none" stroke="#000" stroke-width="1" />
<rect x="915" y="936" width="13" height="13" fill="#e0e0e0" />
<path d="M916.5,942.5 L921.5,938.5 L921.5,941.0 L926.5,941.0 L926.5,944.0 L921.5,944.0 L921.5,946.5 Z" fill="#000"/>
<rect x="934.5" y="930.5" width="24" height="24" fill="none" stroke="#ff0000" stroke-width="1" />
<rect x="937" y="933" width="19" height="19" fill="url(#pst_000)" />
<rect x="937.5" y="933.5" width="18" height="18" fill="none" stroke="#000" stroke-width="1" />
<rect x="940" y="936" width="13" height="13" fill="#e0e0e0" />
<path d="M951.5,942.5 L946.5,938.5 L946.5,941.0 L941.5,941.0 L941.5,944.0 L946.5,944.0 L946.5,946.5 Z" fill="#000"/>
<rect x="969.0" y="927.0" width="99" height="36" fill="none" stroke="#000" stroke-width="2" />
<rect x="975" y="933" width="32" height="24" fill="#e0e0e0" />
<rect x="975.5" y="933.5" width="31" height="23" fill="none" stroke="#ff0000" stroke-width="1" />
<text x="991" y="950" font-family="Liberation Sans" font-size="13" fill="#000" text-anchor="middle" font-weight="normal" textLength="24" lengthAdjust="spacingAndGlyphs" style="white-space:pre" filter="url(#crispS)" >Help</text>
<rect x="1012" y="933" width="50" height="24" fill="#e0e0e0" />
<rect x="1012.5" y="933.5" width="49" height="23" fill="none" stroke="#ff0000" stroke-width="1" />
<text x="1037" y="950" font-family="Liberation Sans" font-size="13" fill="#000" text-anchor="middle" font-weight="normal" textLength="41" lengthAdjust="spacingAndGlyphs" style="white-space:pre" filter="url(#crispS)" >Dismiss</text>
<rect x="635.0" y="970.0" width="482" height="36" fill="none" stroke="#000" stroke-width="2" />
<text x="644" y="993" font-family="Liberation Sans" font-size="14" fill="#000" text-anchor="start" font-weight="bold" textLength="62" lengthAdjust="spacingAndGlyphs" style="white-space:pre" filter="url(#crispS)" >Enter label:</text>
<rect x="715" y="976" width="154" height="24" fill="#e0e0e0" />
<rect x="716.5" y="977.5" width="151" height="21" fill="none" stroke="#ffff00" stroke-width="3" />
<text x="721" y="993" font-family="Liberation Sans" font-size="11" fill="#000" text-anchor="start" font-weight="normal" textLength="57" lengthAdjust="spacingAndGlyphs" style="white-space:pre" filter="url(#crispS)" >History Mode</text>
<rect x="874" y="976" width="80" height="22" fill="#e0e0e0" />
<rect x="874.5" y="976.5" width="79" height="21" fill="none" stroke="#000" stroke-width="1" />
<rect x="880.5" y="980.5" width="8" height="11" fill="none" stroke="#000"/><line x1="882" y1="983.5" x2="887" y2="983.5" stroke="#000"/><line x1="882" y1="986.5" x2="887" y2="986.5" stroke="#000"/>
<text x="894" y="992" font-family="Liberation Mono" font-size="15" fill="#000" text-anchor="start" font-weight="bold" textLength="50" lengthAdjust="spacingAndGlyphs" style="white-space:pre" filter="url(#crispS)" >Select</text>
<rect x="1030" y="976" width="80" height="22" fill="#e0e0e0" />
<rect x="1030.5" y="976.5" width="79" height="21" fill="none" stroke="#000" stroke-width="1" />
<rect x="1036.5" y="980.5" width="8" height="11" fill="none" stroke="#000"/><line x1="1038" y1="983.5" x2="1043" y2="983.5" stroke="#000"/><line x1="1038" y1="986.5" x2="1043" y2="986.5" stroke="#000"/>
<text x="1050" y="992" font-family="Liberation Mono" font-size="15" fill="#000" text-anchor="start" font-weight="bold" textLength="50" lengthAdjust="spacingAndGlyphs" style="white-space:pre" filter="url(#crispS)" >Forget</text>
<rect x="959" y="976" width="66" height="24" fill="#e0e0e0" />
<rect x="959.5" y="976.5" width="65" height="23" fill="none" stroke="#ff0000" stroke-width="1" />
<text x="992" y="994" font-family="Liberation Sans" font-size="13" fill="#000" text-anchor="middle" font-weight="normal" textLength="56" lengthAdjust="spacingAndGlyphs" style="white-space:pre" filter="url(#crispS)" >Remember</text>
<rect x="573" y="770" width="508" height="103" fill="#000" />
<line x1="573" y1="770.5" x2="1081" y2="770.5" stroke="#fff" stroke-width="1" stroke-dasharray="1 1"/>
<line x1="1080.5" y1="770" x2="1080.5" y2="873" stroke="#fff" stroke-width="1" stroke-dasharray="1 1"/>
<line x1="573" y1="872.5" x2="1081" y2="872.5" stroke="#fff" stroke-width="1" stroke-dasharray="1 1"/>
<line x1="1045" y1="775.5" x2="1122" y2="775.5" stroke="#fff" stroke-width="1" stroke-dasharray="1 1"/>
<rect x="577.0" y="776.0" width="44" height="22" fill="none" stroke="#e8e8e8" stroke-width="2" />
<text x="599" y="792" font-family="Liberation Sans" font-size="11.5" fill="#e8e8e8" text-anchor="middle" font-weight="normal" textLength="36" lengthAdjust="spacingAndGlyphs" style="white-space:pre" filter="url(#crisp)" >Dismiss</text>
<rect x="573" y="800" width="503" height="2" fill="#f0f0f0" />
<rect x="1073" y="800" width="2" height="68" fill="#f0f0f0" />
<rect x="573" y="866" width="503" height="2" fill="#f0f0f0" />
<text x="574.5" y="817" font-family="Liberation Mono" font-size="15" fill="#fff" font-weight="normal" textLength="369.0" lengthAdjust="spacingAndGlyphs" style="white-space:pre" filter="url(#crispS)">PLATFORM   FIELD      ALTITUDE       TIME</text>
<text x="574.5" y="832" font-family="Liberation Mono" font-size="15" fill="#fff" font-weight="normal" textLength="495.0" lengthAdjust="spacingAndGlyphs" style="white-space:pre" filter="url(#crispS)">rhb_lowprf maxdz      0.50 km MSL    22-Aug-97,11:00:13</text>
<text x="574.5" y="847" font-family="Liberation Mono" font-size="15" fill="#fff" font-weight="normal" textLength="495.0" lengthAdjust="spacingAndGlyphs" style="white-space:pre" filter="url(#crispS)">rhb_3d     maxdz      0.50 km MSL    22-Aug-97,11:01:11</text>
<rect x="1150" y="71" width="102" height="662" fill="#5f9ea0" />
<rect x="1151" y="72" width="100" height="20" fill="#006400" />
<line x1="1150" y1="71.5" x2="1252" y2="71.5" stroke="#fff" stroke-width="1" stroke-dasharray="1 1"/>
<line x1="1150.5" y1="71" x2="1150.5" y2="733" stroke="#fff" stroke-width="1" stroke-dasharray="1 1"/>
<line x1="1251.5" y1="71" x2="1251.5" y2="733" stroke="#fff" stroke-width="1" stroke-dasharray="1 1"/>
<line x1="1150" y1="732.5" x2="1252" y2="732.5" stroke="#fff" stroke-width="1" stroke-dasharray="1 1"/>
<line x1="1150" y1="91.5" x2="1252" y2="91.5" stroke="#fff" stroke-width="1" stroke-dasharray="1 1"/>
<rect x="1155" y="96" width="92" height="631" fill="#000" />
<rect x="1157" y="98" width="88" height="627" fill="#5f9ea0" />
<text x="1194.5" y="84.5" font-family="Liberation Sans" font-weight="bold" font-size="13" fill="#e0e0e0" textLength="31" lengthAdjust="spacingAndGlyphs" filter="url(#crisp)">icon</text><rect x="1153.5" y="74.5" width="14" height="14" fill="#006400" stroke="#e0e0e0"/><circle cx="1160.5" cy="81.5" r="4.5" fill="#e0e0e0"/><rect x="1172.5" y="74.5" width="14" height="14" fill="#006400" stroke="#e0e0e0"/><rect x="1175.5" y="76.5" width="8" height="10" fill="none" stroke="#e0e0e0"/><rect x="1183" y="77" width="2" height="10" fill="#e0e0e0"/><rect x="1176" y="86" width="9" height="2" fill="#e0e0e0"/><line x1="1177" y1="79.5" x2="1181" y2="79.5" stroke="#e0e0e0"/><line x1="1177" y1="81.5" x2="1181" y2="81.5" stroke="#e0e0e0"/><line x1="1177" y1="83.5" x2="1181" y2="83.5" stroke="#e0e0e0"/><rect x="1215.5" y="74.5" width="14" height="14" fill="#006400" stroke="#e0e0e0"/><circle cx="1222.5" cy="81.5" r="2" fill="none" stroke="#e0e0e0"/><rect x="1234.5" y="74.5" width="14" height="14" fill="#006400" stroke="#e0e0e0"/><path d="M1236.5,86.5 H1246.5 V76.5 M1239.5,84.5 V79.5 H1246.5 M1241.5,84.5 H1243.5 V76.5" fill="none" stroke="#e0e0e0"/>
<rect x="1161" y="102.0" width="52" height="48" fill="#000" />
<rect x="1163" y="104" width="48" height="44" fill="#191970"/><rect x="1163.5" y="104.5" width="47" height="43" fill="none" stroke="#191970" stroke-width="1"/><g transform="translate(1163,104) scale(1.0434782608695652,0.9166666666666666)" fill="none" stroke="#ffff00" stroke-width="2.2" stroke-linejoin="round" shape-rendering="auto"><path d="M6.9,12.2 C9,9.5 13,7.3 17,7.5 C21,8 25,11.5 29,12 C33,12.3 36,11 37.4,9.5 L36.4,11.7 C32,16 26,19 23,21 C19,24 15,28 12,32 C10,35 8,37 6.1,39.5 C9,37.5 13,36.5 18,36.6 C22,37 25,40 29,40.2 C33,40.3 36.5,38.5 38.6,35.4"/></g>
<rect x="1161" y="154.1" width="52" height="48" fill="#000" />
<rect x="1163" y="156" width="48" height="44" fill="#191970"/><rect x="1163.5" y="156.5" width="47" height="43" fill="none" stroke="#191970" stroke-width="1"/><g transform="translate(1163,156)" shape-rendering="crispEdges"><rect x="17" y="5" width="14" height="12" fill="url(#pst_ffff00)"/><path d="M27,5 L31,9 L27,9 Z" fill="#ffff00"/><rect x="17" y="5" width="10" height="1" fill="#ffff00"/><path d="M11,12 H17 V17 H31 V12 H36 L41,22 H7 Z" fill="#ffff00"/><rect x="7" y="22" width="34" height="8" fill="url(#pst_ffff00)"/><text filter="url(#crisp)" x="23.5" y="38" font-family="Liberation Sans" font-weight="bold" font-size="8.5" fill="#ffff00" text-anchor="middle" textLength="24" lengthAdjust="spacingAndGlyphs">PRINT</text></g>
<rect x="1161" y="206.2" width="52" height="48" fill="#000" />
<rect x="1163" y="208" width="48" height="44" fill="#191970"/><rect x="1163.5" y="208.5" width="47" height="43" fill="none" stroke="#191970" stroke-width="1"/><g transform="translate(1163,208)" shape-rendering="auto"><path d="M4,15 L4,44 L26,44 C26,30 18,18 6,15 Z" fill="url(#pst_ffff00)" shape-rendering="crispEdges"/><rect x="4" y="36" width="9" height="8" fill="#ffff00"/><circle cx="19" cy="28" r="4" fill="#ffff00"/><path d="M4,15 L9,15 L12,18 L4,19 Z" fill="#ffff00"/><path d="M18,30 L36,8" stroke="#ffff00" stroke-width="1.2" stroke-dasharray="1.5 1.5"/><path d="M36,5 L39,8 L36,11 L33,8 Z" fill="#ffff00"/><circle cx="9" cy="8" r="1" fill="#ffff00"/><circle cx="24" cy="7" r="0.8" fill="#ffff00"/><circle cx="40" cy="20" r="0.8" fill="#ffff00"/><circle cx="38" cy="38" r="0.8" fill="#ffff00"/><circle cx="30" cy="30" r="0.8" fill="#ffff00"/></g>
<rect x="1161" y="258.3" width="52" height="48" fill="#000" />
<rect x="1163" y="260" width="48" height="44" fill="#191970"/><rect x="1163.5" y="260.5" width="47" height="43" fill="none" stroke="#191970" stroke-width="1"/><g transform="translate(1163,260)" fill="none" stroke="#ffff00" stroke-width="1.1" shape-rendering="auto"><circle cx="24.0" cy="21" r="15"/><circle cx="24.0" cy="21" r="5.5"/><line x1="29.5" y1="21.0" x2="39.0" y2="21.0"/><line x1="27.88908729652601" y1="24.88908729652601" x2="34.60660171779821" y2="31.606601717798213"/><line x1="24.0" y1="26.5" x2="24.0" y2="36.0"/><line x1="20.11091270347399" y1="24.88908729652601" x2="13.393398282201789" y2="31.606601717798213"/><line x1="18.5" y1="21.0" x2="9.0" y2="21.000000000000004"/><line x1="20.11091270347399" y1="17.11091270347399" x2="13.393398282201785" y2="10.393398282201789"/><line x1="24.0" y1="15.5" x2="23.999999999999996" y2="6.0"/><line x1="27.88908729652601" y1="17.11091270347399" x2="34.60660171779821" y2="10.393398282201785"/><circle cx="24.0" cy="21" r="10"/></g><text filter="url(#crisp)" x="1187.0" y="304" font-family="Liberation Sans" font-size="8" fill="#ffff00" text-anchor="middle" textLength="38" lengthAdjust="spacingAndGlyphs" shape-rendering="auto">OVERLAYS</text>
<rect x="1161" y="310.4" width="52" height="48" fill="#000" />
<rect x="1163" y="312.4" width="48" height="44" fill="#191970"/><rect x="1163.5" y="312.9" width="47" height="43" fill="none" stroke="#191970" stroke-width="1"/><g transform="translate(1166,314.4)" shape-rendering="auto"><path d="M5,9 C7,15 10,19 13.5,21 C18,25 22,28 27.5,29.5" fill="none" stroke="#ffff00" stroke-width="2.0"/><path d="M12,21 L15.5,21 L16,31 L17,38 L9,38 L11,31 Z" fill="#ffff00"/><rect x="12.5" y="18.5" width="4" height="5" fill="none" stroke="#ffff00" stroke-width="1"/></g>
<rect x="1161" y="362.5" width="52" height="48" fill="#000" />
<rect x="1163" y="364" width="48" height="44" fill="#191970"/><rect x="1163.5" y="364.5" width="47" height="43" fill="none" stroke="#191970" stroke-width="1"/><g transform="translate(1163,364)" shape-rendering="auto" stroke="#ffff00" fill="none" stroke-width="1.3"><path d="M5.5,32.5 L40.5,32.5 L37.5,38.5 L8.5,38.5 Z"/><path d="M7,32.5 L7,24.5 L11,24.5 L13,32.5"/><circle cx="22.6" cy="22.5" r="3"/><line x1="22.6" y1="25.5" x2="22.6" y2="32.5"/><line x1="34.5" y1="15.5" x2="34.5" y2="32.5"/><path d="M3,44 L3,38 L5,36.5 L8,38.5 L11,36.5 L14,38.5 L17,36.5 L20,38.5 L23,36.5 L26,38.5 L29,36.5 L32,38.5 L35,36.5 L38,38.5 L41,36.5 L43,38 L43,44 Z" fill="#ffff00" stroke="none"/></g>
<rect x="1135" y="420" width="6" height="285" fill="#fff" />
</svg></body></html>
